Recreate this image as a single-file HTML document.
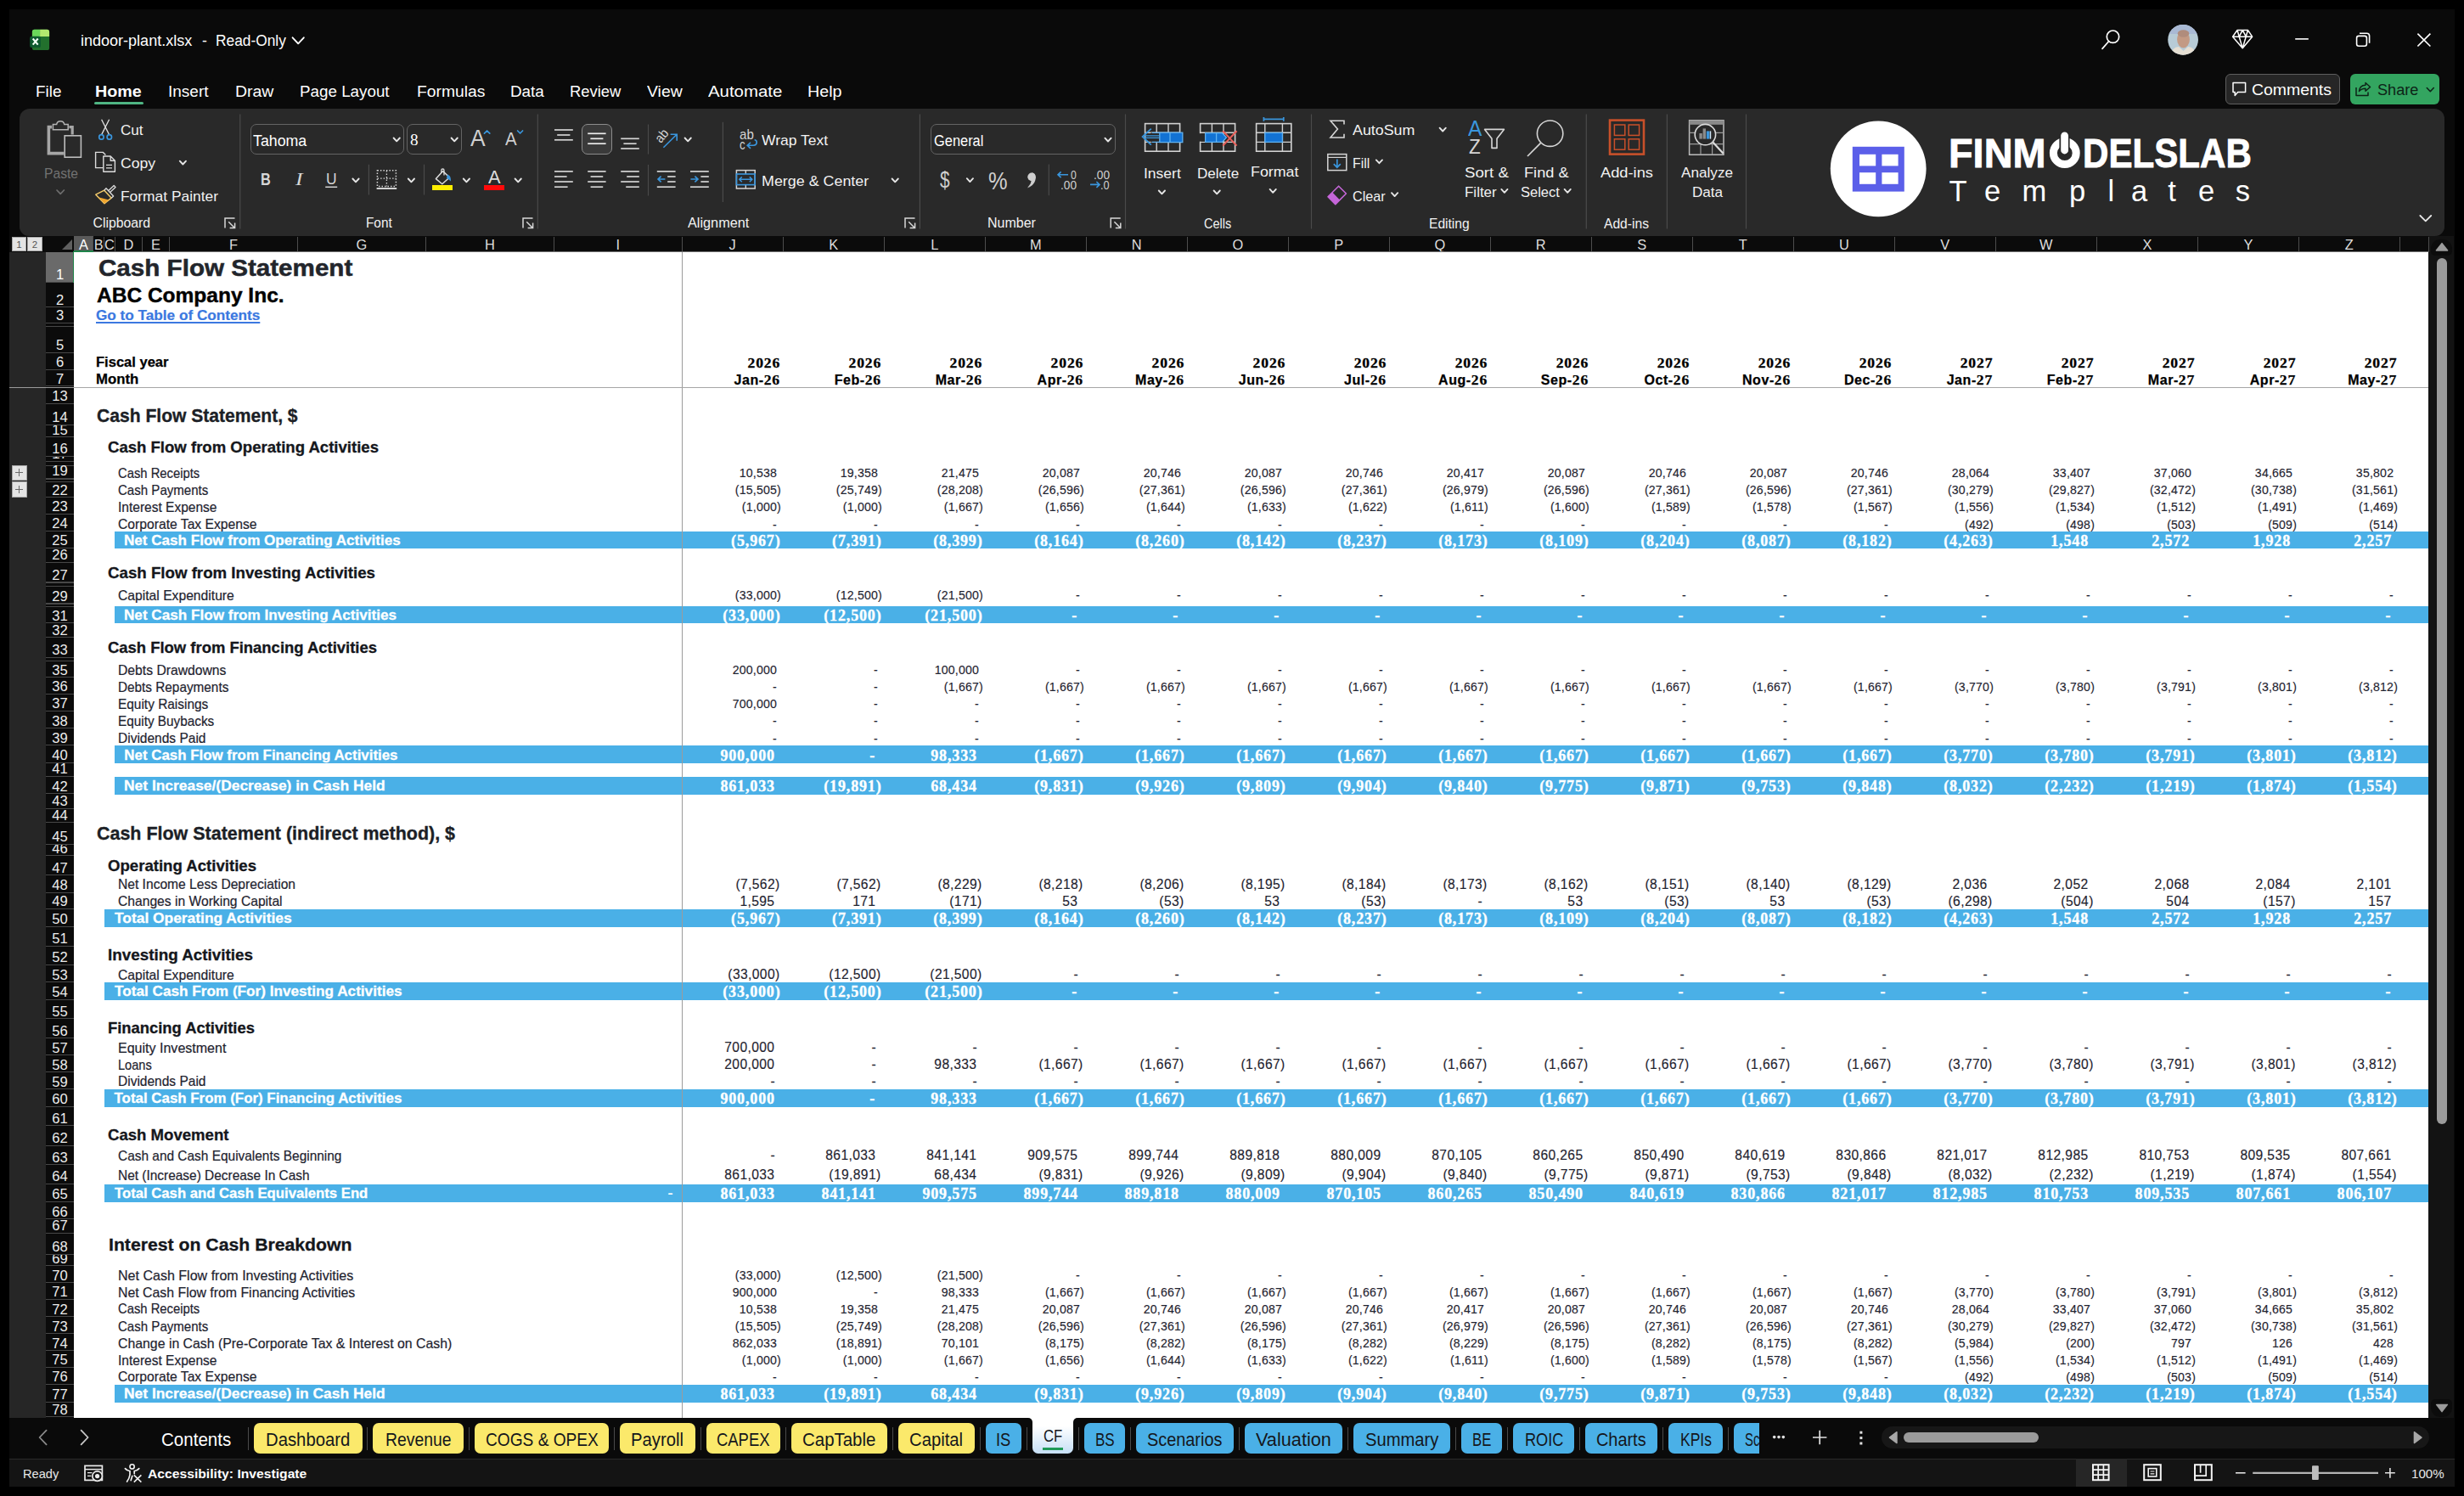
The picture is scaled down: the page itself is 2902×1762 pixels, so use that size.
<!DOCTYPE html>
<html><head><meta charset="utf-8"><title>indoor-plant.xlsx - Excel</title>
<style>
html,body{margin:0;padding:0;background:#000;}
body{width:2902px;height:1762px;position:relative;overflow:hidden;font-family:"Liberation Sans",sans-serif;}
body div,body svg{position:absolute;}
.t{white-space:pre;}

</style></head><body>
<div style="left:11.00px;top:11.00px;width:2879.50px;height:1740.00px;background:#0a0a0a;"></div>
<div class="t" style="left:95.40px;top:37.30px;font-size:17.6px;line-height:22px;color:#fff;transform:scaleX(1.0241);transform-origin:0 50%;">indoor-plant.xlsx</div>
<div class="t" style="left:237.90px;top:37.30px;font-size:17.6px;line-height:22px;color:#fff;">-</div>
<div class="t" style="left:254.20px;top:37.30px;font-size:17.6px;line-height:22px;color:#fff;transform:scaleX(0.9856);transform-origin:0 50%;">Read-Only</div>
<div class="t" style="left:41.80px;top:96.09px;font-size:18.8px;line-height:24px;color:#fff;transform:scaleX(1.0044);transform-origin:0 50%;">File</div>
<div class="t" style="left:111.60px;top:96.09px;font-size:18.8px;line-height:24px;color:#fff;font-weight:700;transform:scaleX(1.0501);transform-origin:0 50%;">Home</div>
<div class="t" style="left:198.00px;top:96.09px;font-size:18.8px;line-height:24px;color:#fff;transform:scaleX(1.0110);transform-origin:0 50%;">Insert</div>
<div class="t" style="left:277.20px;top:96.09px;font-size:18.8px;line-height:24px;color:#fff;transform:scaleX(1.0359);transform-origin:0 50%;">Draw</div>
<div class="t" style="left:353.10px;top:96.09px;font-size:18.8px;line-height:24px;color:#fff;">Page Layout</div>
<div class="t" style="left:491.00px;top:96.09px;font-size:18.8px;line-height:24px;color:#fff;transform:scaleX(1.0271);transform-origin:0 50%;">Formulas</div>
<div class="t" style="left:600.60px;top:96.09px;font-size:18.8px;line-height:24px;color:#fff;transform:scaleX(1.0032);transform-origin:0 50%;">Data</div>
<div class="t" style="left:670.90px;top:96.09px;font-size:18.8px;line-height:24px;color:#fff;transform:scaleX(0.9806);transform-origin:0 50%;">Review</div>
<div class="t" style="left:761.80px;top:96.09px;font-size:18.8px;line-height:24px;color:#fff;transform:scaleX(1.0353);transform-origin:0 50%;">View</div>
<div class="t" style="left:834.00px;top:96.09px;font-size:18.8px;line-height:24px;color:#fff;transform:scaleX(1.0859);transform-origin:0 50%;">Automate</div>
<div class="t" style="left:950.90px;top:96.09px;font-size:18.8px;line-height:24px;color:#fff;transform:scaleX(1.0507);transform-origin:0 50%;">Help</div>
<div style="left:111.20px;top:120.20px;width:57.80px;height:3.00px;background:#4fb583;border-radius:1.5px;"></div>
<div style="left:2621.10px;top:87.30px;width:134.60px;height:35.70px;background:#262626;border:1px solid #5e5e5e;border-radius:6px;box-sizing:border-box;"></div>
<div class="t" style="left:2652.30px;top:94.05px;font-size:19.2px;line-height:24px;color:#fff;transform:scaleX(1.0133);transform-origin:0 50%;">Comments</div>
<div style="left:2767.90px;top:87.30px;width:105.30px;height:35.70px;background:#33a560;border-radius:6px;"></div>
<div class="t" style="left:2799.50px;top:94.05px;font-size:19.2px;line-height:24px;color:#0d2417;transform:scaleX(0.9453);transform-origin:0 50%;">Share</div>
<div style="left:23.00px;top:128.00px;width:2856.00px;height:149.60px;background:#292929;border-radius:12px 12px 11px 11px;"></div>
<div class="t" style="left:51.90px;top:193.81px;font-size:17px;line-height:21px;color:#727272;transform:scaleX(0.9199);transform-origin:0 50%;">Paste</div>
<div class="t" style="left:142.40px;top:143.15px;font-size:16.6px;line-height:21px;color:#f2f2f2;transform:scaleX(1.0299);transform-origin:0 50%;">Cut</div>
<div class="t" style="left:142.40px;top:182.35px;font-size:16.6px;line-height:21px;color:#f2f2f2;transform:scaleX(1.0632);transform-origin:0 50%;">Copy</div>
<div class="t" style="left:142.40px;top:221.15px;font-size:16.6px;line-height:21px;color:#f2f2f2;transform:scaleX(1.0478);transform-origin:0 50%;">Format Painter</div>
<div class="t" style="left:109.50px;top:252.63px;font-size:15.8px;line-height:20px;color:#f2f2f2;">Clipboard</div>
<div style="left:295.00px;top:146.20px;width:180.80px;height:35.50px;background:#292929;border:1px solid #646464;border-radius:7px;box-sizing:border-box;"></div>
<div style="left:479.40px;top:146.20px;width:64.30px;height:35.50px;background:#292929;border:1px solid #646464;border-radius:7px;box-sizing:border-box;"></div>
<div class="t" style="left:298.40px;top:154.50px;font-size:17.6px;line-height:22px;color:#fff;transform:scaleX(1.0097);transform-origin:0 50%;">Tahoma</div>
<div class="t" style="left:482.80px;top:153.02px;font-size:19.5px;line-height:24px;color:#fff;font-family:'Liberation Serif';transform:scaleX(0.9846);transform-origin:0 50%;">8</div>
<div class="t" style="left:553.60px;top:145.87px;font-size:27.5px;line-height:34px;color:#d0d0d0;transform:scaleX(0.9595);transform-origin:0 50%;">A</div>
<div class="t" style="left:595.40px;top:151.45px;font-size:21.5px;line-height:27px;color:#d0d0d0;transform:scaleX(0.9481);transform-origin:0 50%;">A</div>
<div class="t" style="left:307.40px;top:199.21px;font-size:19.6px;line-height:24px;color:#d6d6d6;font-weight:700;transform:scaleX(0.8336);transform-origin:0 50%;">B</div>
<div class="t" style="left:347.60px;top:198.68px;font-size:20.2px;line-height:25px;color:#d6d6d6;font-family:'Liberation Serif';font-style:italic;transform:scaleX(1.2770);transform-origin:0 50%;">I</div>
<div class="t" style="left:384.00px;top:199.26px;font-size:18.6px;line-height:23px;color:#d6d6d6;transform:scaleX(0.9377);transform-origin:0 50%;">U</div>
<div style="left:509.00px;top:218.10px;width:24.20px;height:6.00px;background:#ffee00;"></div>
<div class="t" style="left:574.60px;top:196.25px;font-size:21.5px;line-height:27px;color:#dcdcdc;transform:scaleX(1.0179);transform-origin:0 50%;">A</div>
<div style="left:570.00px;top:218.10px;width:24.20px;height:6.00px;background:#ff0a0a;"></div>
<div class="t" style="left:430.50px;top:252.63px;font-size:15.8px;line-height:20px;color:#f2f2f2;transform:scaleX(0.9712);transform-origin:0 50%;">Font</div>
<div style="left:685.40px;top:146.10px;width:35.50px;height:35.50px;background:#3a3a3a;border:1px solid #8c8c8c;border-radius:7px;box-sizing:border-box;"></div>
<div class="t" style="left:870.80px;top:148.19px;font-size:16.2px;line-height:20px;color:#d4d4d4;transform:scaleX(0.9325);transform-origin:0 50%;">ab</div>
<div class="t" style="left:871.00px;top:159.59px;font-size:16.2px;line-height:20px;color:#d4d4d4;transform:scaleX(0.8154);transform-origin:0 50%;">c</div>
<div class="t" style="left:897.30px;top:155.15px;font-size:16.6px;line-height:21px;color:#f2f2f2;transform:scaleX(1.0527);transform-origin:0 50%;">Wrap Text</div>
<div class="t" style="left:897.30px;top:202.75px;font-size:16.6px;line-height:21px;color:#f2f2f2;transform:scaleX(1.0773);transform-origin:0 50%;">Merge &amp; Center</div>
<div class="t" style="left:810.10px;top:252.63px;font-size:15.8px;line-height:20px;color:#f2f2f2;transform:scaleX(1.0292);transform-origin:0 50%;">Alignment</div>
<div style="left:1096.20px;top:146.00px;width:217.60px;height:35.90px;background:#292929;border:1px solid #646464;border-radius:7px;box-sizing:border-box;"></div>
<div class="t" style="left:1099.60px;top:154.50px;font-size:17.6px;line-height:22px;color:#fff;transform:scaleX(0.9330);transform-origin:0 50%;">General</div>
<div class="t" style="left:1107.40px;top:192.92px;font-size:28.5px;line-height:36px;color:#cfcfcf;transform:scaleX(0.7314);transform-origin:0 50%;">$</div>
<div class="t" style="left:1163.80px;top:193.68px;font-size:29.5px;line-height:37px;color:#cfcfcf;transform:scaleX(0.8615);transform-origin:0 50%;">%</div>
<div class="t" style="left:1261.00px;top:196.13px;font-size:15.5px;line-height:19px;color:#cfcfcf;transform:scaleX(0.7884);transform-origin:0 50%;">0</div>
<div class="t" style="left:1248.80px;top:207.83px;font-size:15.5px;line-height:19px;color:#cfcfcf;transform:scaleX(0.8812);transform-origin:0 50%;">.00</div>
<div class="t" style="left:1287.60px;top:196.13px;font-size:15.5px;line-height:19px;color:#cfcfcf;transform:scaleX(0.8812);transform-origin:0 50%;">.00</div>
<div class="t" style="left:1296.20px;top:207.83px;font-size:15.5px;line-height:19px;color:#cfcfcf;transform:scaleX(0.8193);transform-origin:0 50%;">.0</div>
<div class="t" style="left:1163.40px;top:252.63px;font-size:15.8px;line-height:20px;color:#f2f2f2;transform:scaleX(1.0127);transform-origin:0 50%;">Number</div>
<div class="t" style="left:1347.30px;top:194.48px;font-size:16.8px;line-height:21px;color:#f2f2f2;transform:scaleX(1.0432);transform-origin:0 50%;">Insert</div>
<div class="t" style="left:1409.60px;top:194.48px;font-size:16.8px;line-height:21px;color:#f2f2f2;transform:scaleX(1.0162);transform-origin:0 50%;">Delete</div>
<div class="t" style="left:1472.60px;top:192.08px;font-size:16.8px;line-height:21px;color:#f2f2f2;transform:scaleX(1.0629);transform-origin:0 50%;">Format</div>
<div class="t" style="left:1418.00px;top:253.93px;font-size:15.8px;line-height:20px;color:#f2f2f2;transform:scaleX(0.9167);transform-origin:0 50%;">Cells</div>
<div class="t" style="left:1593.30px;top:143.35px;font-size:16.6px;line-height:21px;color:#f2f2f2;transform:scaleX(1.0752);transform-origin:0 50%;">AutoSum</div>
<div class="t" style="left:1593.30px;top:181.75px;font-size:16.6px;line-height:21px;color:#f2f2f2;transform:scaleX(0.9527);transform-origin:0 50%;">Fill</div>
<div class="t" style="left:1593.30px;top:221.15px;font-size:16.6px;line-height:21px;color:#f2f2f2;transform:scaleX(0.9759);transform-origin:0 50%;">Clear</div>
<div class="t" style="left:1729.20px;top:136.04px;font-size:25px;line-height:31px;color:#3a96dd;transform:scaleX(0.9828);transform-origin:0 50%;">A</div>
<div class="t" style="left:1730.20px;top:158.08px;font-size:24px;line-height:30px;color:#d6d6d6;transform:scaleX(0.9406);transform-origin:0 50%;">Z</div>
<div class="t" style="left:1725.20px;top:192.68px;font-size:16.8px;line-height:21px;color:#f2f2f2;transform:scaleX(1.1128);transform-origin:0 50%;">Sort &amp;</div>
<div class="t" style="left:1724.70px;top:216.28px;font-size:16.8px;line-height:21px;color:#f2f2f2;transform:scaleX(1.0108);transform-origin:0 50%;">Filter</div>
<div class="t" style="left:1795.30px;top:192.68px;font-size:16.8px;line-height:21px;color:#f2f2f2;transform:scaleX(1.0842);transform-origin:0 50%;">Find &amp;</div>
<div class="t" style="left:1790.50px;top:216.28px;font-size:16.8px;line-height:21px;color:#f2f2f2;transform:scaleX(0.9820);transform-origin:0 50%;">Select</div>
<div class="t" style="left:1682.50px;top:253.63px;font-size:15.8px;line-height:20px;color:#f2f2f2;transform:scaleX(0.9873);transform-origin:0 50%;">Editing</div>
<div class="t" style="left:1885.20px;top:192.68px;font-size:16.8px;line-height:21px;color:#f2f2f2;transform:scaleX(1.0895);transform-origin:0 50%;">Add-ins</div>
<div class="t" style="left:1888.50px;top:253.63px;font-size:15.8px;line-height:20px;color:#f2f2f2;transform:scaleX(0.9895);transform-origin:0 50%;">Add-ins</div>
<div class="t" style="left:1980.10px;top:192.68px;font-size:16.8px;line-height:21px;color:#f2f2f2;transform:scaleX(1.0234);transform-origin:0 50%;">Analyze</div>
<div class="t" style="left:1992.60px;top:216.28px;font-size:16.8px;line-height:21px;color:#f2f2f2;transform:scaleX(1.0182);transform-origin:0 50%;">Data</div>
<div class="t" style="left:2295.40px;top:150.23px;font-size:48.7px;line-height:61px;color:#fff;font-weight:700;transform:scaleX(0.9622);transform-origin:0 50%;-webkit-text-stroke:0.9px #fff;">FINM</div>
<div class="t" style="left:2453.00px;top:150.23px;font-size:48.7px;line-height:61px;color:#fff;font-weight:700;transform:scaleX(0.8646);transform-origin:0 50%;-webkit-text-stroke:0.9px #fff;">DELSLAB</div>
<div class="t" style="left:2295.40px;top:203.61px;font-size:34.6px;line-height:43px;color:#fff;">T</div>
<div class="t" style="left:2336.90px;top:203.61px;font-size:34.6px;line-height:43px;color:#fff;">e</div>
<div class="t" style="left:2381.40px;top:203.61px;font-size:34.6px;line-height:43px;color:#fff;">m</div>
<div class="t" style="left:2437.10px;top:203.61px;font-size:34.6px;line-height:43px;color:#fff;">p</div>
<div class="t" style="left:2482.50px;top:203.61px;font-size:34.6px;line-height:43px;color:#fff;">l</div>
<div class="t" style="left:2510.10px;top:203.61px;font-size:34.6px;line-height:43px;color:#fff;">a</div>
<div class="t" style="left:2553.20px;top:203.61px;font-size:34.6px;line-height:43px;color:#fff;">t</div>
<div class="t" style="left:2588.90px;top:203.61px;font-size:34.6px;line-height:43px;color:#fff;">e</div>
<div class="t" style="left:2632.70px;top:203.61px;font-size:34.6px;line-height:43px;color:#fff;">s</div>
<div style="left:2860.30px;top:278.00px;width:30.20px;height:1392.00px;background:#131313;"></div>
<div style="left:2863.40px;top:281.60px;width:24.60px;height:19.60px;background:#0c0c0c;border-radius:11px 11px 5px 5px;"></div>
<div style="left:2870.00px;top:304.00px;width:12.00px;height:1020.20px;background:#9b9b9b;border-radius:6px;"></div>
<svg style="left:0;top:0" width="2902" height="298" viewBox="0 0 2902 298"><rect x="37.9" y="34.8" width="20.2" height="24.2" rx="2.6" fill="#22702d"/><path d="M40.5 34.8 H47.1 V43.1 H37.9 V37.4 A2.6 2.6 0 0 1 40.5 34.8Z" fill="#6ad65a"/><path d="M47.1 34.8 H55.5 A2.6 2.6 0 0 1 58.1 37.4 V43.1 H47.1Z" fill="#b3e86f"/><rect x="35.2" y="42.7" width="12.8" height="13.4" rx="2.2" fill="#0e5a2f"/><path d="M38.7 45.5 L44.7 52.7 M44.7 45.5 L38.7 52.7" stroke="#f2fff6" stroke-width="2.1"/><path d="M344.6 44.3 L351.2 51.3 L357.8 44.3" fill="none" stroke="#fff" stroke-width="1.9" stroke-linecap="round" stroke-linejoin="round"/><circle cx="2488.5" cy="43.2" r="7.2" fill="none" stroke="#fff" stroke-width="1.7"/><path d="M2483.6 48.8 L2476 57.4" stroke="#fff" stroke-width="1.7" stroke-linecap="round"/><defs><clipPath id="av"><circle cx="2571.1" cy="46.8" r="17.9"/></clipPath></defs><g clip-path="url(#av)"><rect x="2553" y="28" width="37" height="38" fill="#b7cbd6"/><rect x="2553" y="28" width="37" height="12" fill="#a9b9d4"/><ellipse cx="2571.5" cy="46.5" rx="7.4" ry="10" fill="#c39a84"/><ellipse cx="2571.5" cy="39.5" rx="6.8" ry="4.2" fill="#b08c7c"/><path d="M2556 66 Q2558 55.5 2566 55 L2571.5 60 L2577 55 Q2585 55.5 2587 66Z" fill="#e6dfd3"/></g><path d="M2635 35.4 H2647.4 L2652.6 43.2 L2641.2 56.8 L2629.6 43.2Z M2629.6 43.2 H2652.6 M2635 35.4 L2637.2 43.2 L2641.2 56.8 L2645.2 43.2 L2647.4 35.4 M2641.2 35.4 L2637.2 43.2 M2641.2 35.4 L2645.2 43.2" fill="none" stroke="#fff" stroke-width="1.5" stroke-linejoin="round"/><path d="M2703.2 45.9 H2718.8" stroke="#fff" stroke-width="1.6"/><rect x="2775.6" y="42.4" width="11.8" height="11.8" rx="2.4" fill="none" stroke="#fff" stroke-width="1.6"/><path d="M2779 39.2 H2787.6 A3 3 0 0 1 2790.6 42.2 V50.8" fill="none" stroke="#fff" stroke-width="1.6"/><path d="M2847.4 39.7 L2862.4 54.5 M2862.4 39.7 L2847.4 54.5" stroke="#fff" stroke-width="1.7"/><path d="M2630 97.6 H2644.6 V108.6 H2635.6 L2632.2 112.4 V108.6 H2630Z" fill="none" stroke="#fff" stroke-width="1.5" stroke-linejoin="round"/><path d="M2775 103 V112.6 H2789 V108.4" fill="none" stroke="#0d2417" stroke-width="1.5" stroke-linejoin="round"/><path d="M2778.4 107.6 C2779 102 2782.4 100.2 2786 100.2 V97.4 L2791.6 102.4 L2786 107.2 V104.2 C2783 104.2 2780.4 105 2778.4 107.6Z" fill="none" stroke="#0d2417" stroke-width="1.4" stroke-linejoin="round"/><path d="M2858.3 103.5 L2862.3 107.7 L2866.3 103.5" fill="none" stroke="#0d2417" stroke-width="1.6" stroke-linecap="round" stroke-linejoin="round"/><path d="M282.8 134.5 V269.5" stroke="#4a4a4a" stroke-width="1.2"/><path d="M633.3 134.5 V269.5" stroke="#4a4a4a" stroke-width="1.2"/><path d="M1083.4 134.5 V269.5" stroke="#4a4a4a" stroke-width="1.2"/><path d="M1325.5 134.5 V269.5" stroke="#4a4a4a" stroke-width="1.2"/><path d="M1544.5 134.5 V269.5" stroke="#4a4a4a" stroke-width="1.2"/><path d="M1868.3 134.5 V269.5" stroke="#4a4a4a" stroke-width="1.2"/><path d="M1963.4 134.5 V269.5" stroke="#4a4a4a" stroke-width="1.2"/><path d="M2056.5 134.5 V269.5" stroke="#4a4a4a" stroke-width="1.2"/><path d="M434.4 193.7 V229.5" stroke="#4a4a4a" stroke-width="1.2"/><path d="M499.5 193.7 V229.5" stroke="#4a4a4a" stroke-width="1.2"/><path d="M763.5 146.5 V181.6" stroke="#4a4a4a" stroke-width="1.2"/><path d="M763.5 194 V230.5" stroke="#4a4a4a" stroke-width="1.2"/><path d="M851.4 143.7 V238" stroke="#4a4a4a" stroke-width="1.2"/><path d="M1235.3 193.6 V230.2" stroke="#4a4a4a" stroke-width="1.2"/><path d="M61 149.6 H57.4 V180.6 H75.4" fill="none" stroke="#a6a6a6" stroke-width="3.6"/><path d="M81.4 149.6 H85.2 V158.4" fill="none" stroke="#a6a6a6" stroke-width="3.2"/><path d="M62.4 152.8 V146.6 H66.6 A4.7 4.7 0 0 1 75.8 146.6 H80.2 V152.8Z" fill="none" stroke="#b4b4b4" stroke-width="1.5"/><rect x="76.2" y="159.8" width="19.2" height="25.4" fill="#292929" stroke="#bcbcbc" stroke-width="1.6"/><path d="M67.0 224.0 L71.2 228.4 L75.4 224.0" fill="none" stroke="#6e6e6e" stroke-width="1.7" stroke-linecap="round" stroke-linejoin="round"/><path d="M119.6 140.8 L128.6 158.6 M128.6 140.8 L119.6 158.6" stroke="#e0e0e0" stroke-width="1.3"/><circle cx="119.4" cy="161.4" r="2.7" fill="none" stroke="#3a96dd" stroke-width="1.7"/><circle cx="128.8" cy="161.4" r="2.7" fill="none" stroke="#3a96dd" stroke-width="1.7"/><path d="M121.6 197.6 H112.6 V179.4 H121.4 L124.4 182.4" fill="none" stroke="#dcdcdc" stroke-width="1.4"/><path d="M121.8 184 H130.2 L135.4 189.2 V202.2 H121.8Z M130.2 184 V189.2 H135.4" fill="none" stroke="#dcdcdc" stroke-width="1.4" stroke-linejoin="round"/><path d="M125 194.4 H132 M125 197.8 H132" stroke="#dcdcdc" stroke-width="1.3"/><path d="M211.8 189.7 L215.4 193.5 L219.0 189.7" fill="none" stroke="#e6e6e6" stroke-width="1.9" stroke-linecap="round" stroke-linejoin="round"/><path d="M112.8 229.2 L122.8 224.2 L131.2 233.2 L123 239.6Z" fill="none" stroke="#f2c96a" stroke-width="1.5" stroke-linejoin="round"/><path d="M115.8 232.2 L128.4 235.6 L123 239.6Z" fill="#f0a52e"/><path d="M122.8 224.2 L125 221.8 L133.6 231 L131.2 233.2" fill="none" stroke="#d8d8d8" stroke-width="1.4" stroke-linejoin="round"/><path d="M127.8 224.6 L134.2 218.6 L136 220.4 L129.6 226.6" fill="none" stroke="#d8d8d8" stroke-width="1.4" stroke-linejoin="round"/><path d="M265 268.5 L265 257 L276.5 257" fill="none" stroke="#d8d8d8" stroke-width="1.5"/><path d="M269.2 261.2 L276.2 268.2 M270.6 268.6 L276.6 268.6 L276.6 262.6" fill="none" stroke="#d8d8d8" stroke-width="1.5"/><path d="M463.6 162.5 L467.2 166.3 L470.8 162.5" fill="none" stroke="#e6e6e6" stroke-width="1.9" stroke-linecap="round" stroke-linejoin="round"/><path d="M531.6 162.5 L535.2 166.3 L538.8 162.5" fill="none" stroke="#e6e6e6" stroke-width="1.9" stroke-linecap="round" stroke-linejoin="round"/><path d="M570.4 157.2 L573.6 154 L576.8 157.2" fill="none" stroke="#3a96dd" stroke-width="1.7" stroke-linecap="round" stroke-linejoin="round"/><path d="M609.6 154 L612.6 157 L615.6 154" fill="none" stroke="#3a96dd" stroke-width="1.7" stroke-linecap="round" stroke-linejoin="round"/><path d="M383.2 220.3 H397.2" stroke="#d6d6d6" stroke-width="1.5"/><path d="M415.4 210.5 L419.0 214.3 L422.6 210.5" fill="none" stroke="#e6e6e6" stroke-width="1.9" stroke-linecap="round" stroke-linejoin="round"/><rect x="444.4" y="200.8" width="22" height="18.6" fill="none" stroke="#d6d6d6" stroke-width="1.5" stroke-dasharray="1.5 2"/><path d="M455.4 201 V219.4 M444.6 210.2 H466.4" stroke="#d6d6d6" stroke-width="1.3" stroke-dasharray="1.5 2"/><path d="M443.6 222 H467.2" stroke="#e6e6e6" stroke-width="1.8"/><path d="M480.8 210.5 L484.4 214.3 L488.0 210.5" fill="none" stroke="#e6e6e6" stroke-width="1.9" stroke-linecap="round" stroke-linejoin="round"/><path d="M513.4 210.6 L521.6 201.6 L529.4 209 L520.8 216.8Z" fill="none" stroke="#dcdcdc" stroke-width="1.5" stroke-linejoin="round"/><path d="M519.8 203.2 V200.6 A1.6 1.6 0 0 1 523 200.6 V206.4" fill="none" stroke="#dcdcdc" stroke-width="1.3"/><path d="M527 205.4 C530.2 206.4 531.4 209.8 530.8 213.6 C529 211.4 527.6 210.6 526 210Z" fill="#3a96dd"/><path d="M545.8 210.5 L549.4 214.3 L553.0 210.5" fill="none" stroke="#e6e6e6" stroke-width="1.9" stroke-linecap="round" stroke-linejoin="round"/><path d="M606.6 210.5 L610.2 214.3 L613.8 210.5" fill="none" stroke="#e6e6e6" stroke-width="1.9" stroke-linecap="round" stroke-linejoin="round"/><path d="M616 268.5 L616 257 L627.5 257" fill="none" stroke="#d8d8d8" stroke-width="1.5"/><path d="M620.2 261.2 L627.2 268.2 M621.6 268.6 L627.6 268.6 L627.6 262.6" fill="none" stroke="#d8d8d8" stroke-width="1.5"/><path d="M653.0 153.0 H674.8" stroke="#d4d4d4" stroke-width="1.7"/><path d="M656.2 159.0 H671.4" stroke="#d4d4d4" stroke-width="1.7"/><path d="M653.0 164.8 H674.8" stroke="#d4d4d4" stroke-width="1.7"/><path d="M692.2 157.3 H713.6" stroke="#ececec" stroke-width="1.7"/><path d="M695.4 163.3 H710.4" stroke="#ececec" stroke-width="1.7"/><path d="M692.2 169.2 H713.6" stroke="#ececec" stroke-width="1.7"/><path d="M731.2 163.3 H752.8" stroke="#d4d4d4" stroke-width="1.7"/><path d="M734.4 169.2 H749.6" stroke="#d4d4d4" stroke-width="1.7"/><path d="M731.2 175.0 H752.8" stroke="#d4d4d4" stroke-width="1.7"/><g transform="translate(778.2 169.2) rotate(-50)"><text x="0" y="0" font-family="Liberation Sans" font-size="15.5" fill="#d4d4d4" textLength="15.5" lengthAdjust="spacingAndGlyphs">ab</text></g><path d="M781.4 173.8 L796.6 158.8 M789.6 158.2 H797.2 V165.8" fill="none" stroke="#3a96dd" stroke-width="1.6"/><path d="M806.6 162.5 L810.2 166.3 L813.8 162.5" fill="none" stroke="#e6e6e6" stroke-width="1.9" stroke-linecap="round" stroke-linejoin="round"/><path d="M653.0 201.9 H674.8" stroke="#d4d4d4" stroke-width="1.7"/><path d="M653.0 208.0 H667.6" stroke="#d4d4d4" stroke-width="1.7"/><path d="M653.0 214.0 H674.8" stroke="#d4d4d4" stroke-width="1.7"/><path d="M653.0 220.2 H668.6" stroke="#d4d4d4" stroke-width="1.7"/><path d="M692.2 201.9 H713.6" stroke="#d4d4d4" stroke-width="1.7"/><path d="M695.6 208.0 H710.2" stroke="#d4d4d4" stroke-width="1.7"/><path d="M692.2 214.0 H713.6" stroke="#d4d4d4" stroke-width="1.7"/><path d="M695.6 220.2 H710.2" stroke="#d4d4d4" stroke-width="1.7"/><path d="M731.2 201.9 H752.8" stroke="#d4d4d4" stroke-width="1.7"/><path d="M738.2 208.0 H752.8" stroke="#d4d4d4" stroke-width="1.7"/><path d="M731.2 214.0 H752.8" stroke="#d4d4d4" stroke-width="1.7"/><path d="M737.2 220.2 H752.8" stroke="#d4d4d4" stroke-width="1.7"/><path d="M773.8 201.9 H795.6" stroke="#d4d4d4" stroke-width="1.7"/><path d="M786.2 208.0 H795.6" stroke="#d4d4d4" stroke-width="1.7"/><path d="M786.2 214.0 H795.6" stroke="#d4d4d4" stroke-width="1.7"/><path d="M773.8 220.2 H795.6" stroke="#d4d4d4" stroke-width="1.7"/><path d="M783.4 211 H775.2 M778.6 207.6 L775 211 L778.6 214.4" fill="none" stroke="#3a96dd" stroke-width="1.6"/><path d="M813.0 201.9 H834.8" stroke="#d4d4d4" stroke-width="1.7"/><path d="M825.4 208.0 H834.8" stroke="#d4d4d4" stroke-width="1.7"/><path d="M825.4 214.0 H834.8" stroke="#d4d4d4" stroke-width="1.7"/><path d="M813.0 220.2 H834.8" stroke="#d4d4d4" stroke-width="1.7"/><path d="M813.4 211 H821.8 M818.4 207.6 L822 211 L818.4 214.4" fill="none" stroke="#3a96dd" stroke-width="1.6"/><path d="M888.6 164.4 C892.4 165.4 892.2 171 887.4 171.2 H880.4 M884 167.8 L880.2 171.2 L884 174.8" fill="none" stroke="#3a96dd" stroke-width="1.6"/><rect x="867.4" y="200.6" width="21.8" height="21.4" fill="none" stroke="#d6d6d6" stroke-width="1.5"/><path d="M878.3 200.6 V205 M878.3 217.6 V222" stroke="#d6d6d6" stroke-width="1.4"/><rect x="867.4" y="205" width="21.8" height="12.6" fill="none" stroke="#3a96dd" stroke-width="1.6"/><path d="M871 211.3 H885.6 M873.8 208.4 L870.8 211.3 L873.8 214.2 M882.8 208.4 L885.8 211.3 L882.8 214.2" fill="none" stroke="#3a96dd" stroke-width="1.5"/><path d="M1050.6 210.5 L1054.2 214.3 L1057.8 210.5" fill="none" stroke="#e6e6e6" stroke-width="1.9" stroke-linecap="round" stroke-linejoin="round"/><path d="M1066 268.5 L1066 257 L1077.5 257" fill="none" stroke="#d8d8d8" stroke-width="1.5"/><path d="M1070.2 261.2 L1077.2 268.2 M1071.6 268.6 L1077.6 268.6 L1077.6 262.6" fill="none" stroke="#d8d8d8" stroke-width="1.5"/><path d="M1301.4 162.7 L1305.0 166.5 L1308.6 162.7" fill="none" stroke="#e6e6e6" stroke-width="1.9" stroke-linecap="round" stroke-linejoin="round"/><path d="M1138.8 210.2 L1142.4 214.1 L1146.0 210.2" fill="none" stroke="#e6e6e6" stroke-width="1.9" stroke-linecap="round" stroke-linejoin="round"/><path d="M1215 203.6 A4.6 4.6 0 1 1 1210.6 209.6 C1213.6 211 1216.4 209.6 1216.6 207.4 C1217.6 213.6 1214.6 218.6 1209.8 220.8 C1213.6 217.6 1214.8 214.4 1214.4 212.2" fill="#cfcfcf"/><circle cx="1215" cy="208.2" r="4.7" fill="#cfcfcf"/><path d="M1219.7 208.2 C1220.2 214 1216.2 219.4 1210 221.4 C1214 218.4 1215.4 215 1215.2 212.8Z" fill="#cfcfcf"/><path d="M1258 205.8 H1246 M1249.6 202.4 L1246 205.8 L1249.6 209.2" fill="none" stroke="#3a96dd" stroke-width="1.6"/><path d="M1284 217.4 H1295 M1291.4 214 L1295 217.4 L1291.4 220.8" fill="none" stroke="#3a96dd" stroke-width="1.6"/><path d="M1308.2 268.5 L1308.2 257 L1319.7 257" fill="none" stroke="#d8d8d8" stroke-width="1.5"/><path d="M1312.4 261.2 L1319.4 268.2 M1313.8 268.6 L1319.8 268.6 L1319.8 262.6" fill="none" stroke="#d8d8d8" stroke-width="1.5"/><rect x="1348.6" y="145.6" width="41.0" height="32.599999999999994" fill="none" stroke="#d2d2d2" stroke-width="1.6"/><path d="M1362.2 145.6 V178.2" stroke="#d2d2d2" stroke-width="1.4"/><path d="M1376 145.6 V178.2" stroke="#d2d2d2" stroke-width="1.4"/><path d="M1348.6 156.2 H1389.6" stroke="#d2d2d2" stroke-width="1.4"/><path d="M1348.6 167.4 H1389.6" stroke="#d2d2d2" stroke-width="1.4"/><rect x="1355.4" y="156.2" width="37.4" height="11.4" fill="#292929"/><rect x="1365.8" y="156.2" width="27" height="11.4" fill="#1272d3" stroke="#5fb2f2" stroke-width="1.3"/><path d="M1378 156.2 V167.6" stroke="#5fb2f2" stroke-width="1.3"/><path d="M1366 156.4 H1356.6 M1366 167.4 H1356.6" stroke="#5fb2f2" stroke-width="1.3"/><path d="M1355.8 151.6 L1345.6 161 L1355.8 170.6" fill="none" stroke="#3a96dd" stroke-width="1.8"/><path d="M1347.2 159.8 H1365 M1347.2 162.4 H1365" stroke="#3a96dd" stroke-width="1.2"/><path d="M1364.8 224.5 L1368.4 228.3 L1372.0 224.5" fill="none" stroke="#e6e6e6" stroke-width="1.9" stroke-linecap="round" stroke-linejoin="round"/><rect x="1413.6" y="145.6" width="41.0" height="32.599999999999994" fill="none" stroke="#d2d2d2" stroke-width="1.6"/><path d="M1427.4 145.6 V178.2" stroke="#d2d2d2" stroke-width="1.4"/><path d="M1441 145.6 V178.2" stroke="#d2d2d2" stroke-width="1.4"/><path d="M1413.6 156.2 H1454.6" stroke="#d2d2d2" stroke-width="1.4"/><path d="M1413.6 167.4 H1454.6" stroke="#d2d2d2" stroke-width="1.4"/><rect x="1412" y="157.2" width="8" height="9.4" fill="#292929"/><path d="M1419.6 156.6 H1439.6 L1444.4 162 L1439.6 167.4 H1419.6Z" fill="#1272d3" stroke="#5fb2f2" stroke-width="1.3"/><path d="M1432.6 156.6 V167.4" stroke="#5fb2f2" stroke-width="1.3"/><rect x="1442" y="155" width="15" height="15" fill="#292929" opacity="0.0"/><path d="M1440.2 154.2 L1456.6 171.6 M1456.6 154.2 L1440.2 171.6" stroke="#e8605a" stroke-width="2.1"/><path d="M1429.6 224.5 L1433.2 228.3 L1436.8 224.5" fill="none" stroke="#e6e6e6" stroke-width="1.9" stroke-linecap="round" stroke-linejoin="round"/><rect x="1479.6" y="145.6" width="41.200000000000045" height="32.599999999999994" fill="none" stroke="#d2d2d2" stroke-width="1.6"/><path d="M1489.8 145.6 V178.2" stroke="#d2d2d2" stroke-width="1.4"/><path d="M1510.4 145.6 V178.2" stroke="#d2d2d2" stroke-width="1.4"/><path d="M1479.6 156.2 H1520.8" stroke="#d2d2d2" stroke-width="1.4"/><path d="M1479.6 167.4 H1520.8" stroke="#d2d2d2" stroke-width="1.4"/><rect x="1489.8" y="156.4" width="20.6" height="11" fill="#1272d3" stroke="#5fb2f2" stroke-width="1.3"/><path d="M1488.4 140.4 H1511.8 M1488.4 138 V142.8 M1511.8 138 V142.8" stroke="#3a96dd" stroke-width="1.7"/><path d="M1495.6 222.9 L1499.2 226.8 L1502.8 222.9" fill="none" stroke="#e6e6e6" stroke-width="1.9" stroke-linecap="round" stroke-linejoin="round"/><path d="M1583 146.4 V142.2 H1567 L1575.4 152 L1567 162 H1583 V157.8" fill="none" stroke="#d6d6d6" stroke-width="1.6" stroke-linejoin="miter"/><path d="M1695.6 150.7 L1699.2 154.5 L1702.8 150.7" fill="none" stroke="#e6e6e6" stroke-width="1.9" stroke-linecap="round" stroke-linejoin="round"/><rect x="1563.8" y="181.6" width="22" height="19" fill="none" stroke="#d6d6d6" stroke-width="1.5"/><path d="M1563.8 185.4 H1585.8" stroke="#d6d6d6" stroke-width="1.2"/><path d="M1574.8 187.6 V197 M1570.8 193.2 L1574.8 197.2 L1578.8 193.2" fill="none" stroke="#3a96dd" stroke-width="1.7"/><path d="M1620.8 188.4 L1624.4 192.2 L1628.0 188.4" fill="none" stroke="#e6e6e6" stroke-width="1.9" stroke-linecap="round" stroke-linejoin="round"/><path d="M1564 231.8 L1576.6 219.2 L1585.4 228 L1572.8 240.6Z" fill="none" stroke="#c566d8" stroke-width="1.6" stroke-linejoin="round"/><path d="M1564 231.8 L1569.2 226.6 L1578 235.4 L1572.8 240.6Z" fill="#c566d8"/><path d="M1639.0 227.2 L1642.6 231.1 L1646.2 227.2" fill="none" stroke="#e6e6e6" stroke-width="1.9" stroke-linecap="round" stroke-linejoin="round"/><path d="M1748.6 152.4 H1771.4 L1763 163.2 V174.4 H1757 V163.2Z" fill="none" stroke="#d6d6d6" stroke-width="1.6" stroke-linejoin="round"/><path d="M1768.3 222.9 L1771.9 226.8 L1775.5 222.9" fill="none" stroke="#e6e6e6" stroke-width="1.9" stroke-linecap="round" stroke-linejoin="round"/><circle cx="1825.6" cy="157.2" r="15.2" fill="none" stroke="#d6d6d6" stroke-width="1.6"/><path d="M1814.6 168.4 L1799 184" stroke="#d6d6d6" stroke-width="1.7"/><path d="M1842.6 222.9 L1846.2 226.8 L1849.8 222.9" fill="none" stroke="#e6e6e6" stroke-width="1.9" stroke-linecap="round" stroke-linejoin="round"/><rect x="1896" y="141.6" width="40" height="40" fill="none" stroke="#c8502a" stroke-width="2.6"/><rect x="1901.4" y="147" width="12.4" height="12.4" fill="none" stroke="#c8502a" stroke-width="1.5"/><rect x="1901.4" y="163.8" width="12.4" height="12.4" fill="none" stroke="#c8502a" stroke-width="1.5"/><rect x="1918.2" y="147" width="12.4" height="12.4" fill="none" stroke="#c8502a" stroke-width="1.5"/><rect x="1918.2" y="163.8" width="12.4" height="12.4" fill="none" stroke="#c8502a" stroke-width="1.5"/><rect x="1989.6" y="141.8" width="40.4" height="40.4" fill="none" stroke="#bdbdbd" stroke-width="1.5"/><rect x="1989.6" y="141.8" width="40.4" height="5" fill="#8a8a8a"/><path d="M1989.6 156.4 H2030 M1989.6 169.6 H2030 M2003 169.6 V182 M2016.6 169.6 V182" stroke="#9a9a9a" stroke-width="1.2"/><circle cx="2008.4" cy="158.6" r="12.2" fill="#292929" stroke="#dcdcdc" stroke-width="1.6"/><rect x="2001.4" y="157" width="3.4" height="6.6" fill="#8a8a8a"/><rect x="2005.6" y="151.4" width="3.4" height="12.2" fill="#8a8a8a"/><rect x="2009.8" y="154.4" width="3.6" height="9.2" fill="#3a96dd"/><rect x="2013.8" y="154.4" width="1.4" height="9.2" fill="#cfe6f7"/><path d="M2017.4 167.6 L2029.6 180.8" stroke="#dcdcdc" stroke-width="2.2"/><circle cx="2212.2" cy="198.8" r="56.4" fill="#fff"/><rect x="2181.8" y="172.8" width="61" height="52.8" fill="#5b5fe9"/><rect x="2190" y="181.8" width="19.2" height="13.6" fill="#fff"/><rect x="2190" y="203.2" width="19.2" height="13.6" fill="#fff"/><rect x="2216.4" y="181.8" width="19.2" height="13.6" fill="#fff"/><rect x="2216.4" y="203.2" width="19.2" height="13.6" fill="#fff"/><circle cx="2431.8" cy="180.2" r="13.4" fill="none" stroke="#fff" stroke-width="9"/><rect x="2425.4" y="153.9" width="12.2" height="29" rx="6" fill="#292929"/><rect x="2427.2" y="155.4" width="8.8" height="26" rx="4.4" fill="#fff"/><path d="M2850.4 254.0 L2856.8 260.4 L2863.2 254.0" fill="none" stroke="#e6e6e6" stroke-width="1.8" stroke-linecap="round" stroke-linejoin="round"/><path d="M2869.4 295 L2876 286.6 L2882.6 295Z" fill="#9b9b9b" stroke="#9b9b9b" stroke-width="1.5" stroke-linejoin="round"/></svg>
<div style="left:11.00px;top:278.00px;width:2849.30px;height:19.20px;background:#0b0b0b;"></div>
<div style="left:11.00px;top:297.00px;width:42.80px;height:1373.00px;background:#262626;"></div>
<div style="left:53.80px;top:297.00px;width:33.20px;height:1373.00px;background:#0b0b0b;"></div>
<div style="left:13.60px;top:279.00px;width:17.60px;height:17.00px;background:#e4e4e4;border:1px solid #a8a8a8;box-sizing:border-box;"></div>
<div class="t" style="left:19.20px;top:281.22px;font-size:11.5px;line-height:14px;color:#555;">1</div>
<div style="left:32.20px;top:279.00px;width:17.60px;height:17.00px;background:#e4e4e4;border:1px solid #a8a8a8;box-sizing:border-box;"></div>
<div class="t" style="left:37.80px;top:281.22px;font-size:11.5px;line-height:14px;color:#555;">2</div>
<svg style="left:70px;top:280px" width="17" height="16" viewBox="0 0 17 16"><path d="M15 2 L15 14 L3 14 Z" fill="#5f5f5f"/></svg>
<div style="left:87.00px;top:278.00px;width:23.00px;height:19.20px;background:#5a5a5a;"></div>
<div class="t" style="left:93.03px;top:277.72px;font-size:16.4px;line-height:20px;color:#fff;">A</div>
<div class="t" style="left:110.83px;top:277.72px;font-size:16.4px;line-height:20px;color:#dedede;">B</div>
<div class="t" style="left:123.08px;top:277.72px;font-size:16.4px;line-height:20px;color:#dedede;">C</div>
<div class="t" style="left:145.53px;top:277.72px;font-size:16.4px;line-height:20px;color:#dedede;">D</div>
<div class="t" style="left:177.98px;top:277.72px;font-size:16.4px;line-height:20px;color:#dedede;">E</div>
<div class="t" style="left:269.89px;top:277.72px;font-size:16.4px;line-height:20px;color:#dedede;">F</div>
<div class="t" style="left:419.52px;top:277.72px;font-size:16.4px;line-height:20px;color:#dedede;">G</div>
<div class="t" style="left:570.93px;top:277.72px;font-size:16.4px;line-height:20px;color:#dedede;">H</div>
<div class="t" style="left:725.47px;top:277.72px;font-size:16.4px;line-height:20px;color:#dedede;">I</div>
<div class="t" style="left:858.60px;top:277.72px;font-size:16.4px;line-height:20px;color:#dedede;">J</div>
<div class="t" style="left:976.25px;top:277.72px;font-size:16.4px;line-height:20px;color:#dedede;">K</div>
<div class="t" style="left:1096.16px;top:277.72px;font-size:16.4px;line-height:20px;color:#dedede;">L</div>
<div class="t" style="left:1212.91px;top:277.72px;font-size:16.4px;line-height:20px;color:#dedede;">M</div>
<div class="t" style="left:1332.82px;top:277.72px;font-size:16.4px;line-height:20px;color:#dedede;">N</div>
<div class="t" style="left:1451.38px;top:277.72px;font-size:16.4px;line-height:20px;color:#dedede;">O</div>
<div class="t" style="left:1571.30px;top:277.72px;font-size:16.4px;line-height:20px;color:#dedede;">P</div>
<div class="t" style="left:1689.40px;top:277.72px;font-size:16.4px;line-height:20px;color:#dedede;">Q</div>
<div class="t" style="left:1808.86px;top:277.72px;font-size:16.4px;line-height:20px;color:#dedede;">R</div>
<div class="t" style="left:1928.33px;top:277.72px;font-size:16.4px;line-height:20px;color:#dedede;">S</div>
<div class="t" style="left:2047.80px;top:277.72px;font-size:16.4px;line-height:20px;color:#dedede;">T</div>
<div class="t" style="left:2165.89px;top:277.72px;font-size:16.4px;line-height:20px;color:#dedede;">U</div>
<div class="t" style="left:2285.36px;top:277.72px;font-size:16.4px;line-height:20px;color:#dedede;">V</div>
<div class="t" style="left:2402.09px;top:277.72px;font-size:16.4px;line-height:20px;color:#dedede;">W</div>
<div class="t" style="left:2523.38px;top:277.72px;font-size:16.4px;line-height:20px;color:#dedede;">X</div>
<div class="t" style="left:2642.39px;top:277.72px;font-size:16.4px;line-height:20px;color:#dedede;">Y</div>
<div class="t" style="left:2761.86px;top:277.72px;font-size:16.4px;line-height:20px;color:#dedede;">Z</div>
<div style="left:109.40px;top:279.00px;width:1.10px;height:18.00px;background:#4d4d4d;"></div>
<div style="left:122.00px;top:279.00px;width:1.10px;height:18.00px;background:#4d4d4d;"></div>
<div style="left:134.80px;top:279.00px;width:1.10px;height:18.00px;background:#4d4d4d;"></div>
<div style="left:166.90px;top:279.00px;width:1.10px;height:18.00px;background:#4d4d4d;"></div>
<div style="left:198.80px;top:279.00px;width:1.10px;height:18.00px;background:#4d4d4d;"></div>
<div style="left:349.80px;top:279.00px;width:1.10px;height:18.00px;background:#4d4d4d;"></div>
<div style="left:500.80px;top:279.00px;width:1.10px;height:18.00px;background:#4d4d4d;"></div>
<div style="left:651.70px;top:279.00px;width:1.10px;height:18.00px;background:#4d4d4d;"></div>
<div style="left:802.60px;top:279.00px;width:1.10px;height:18.00px;background:#4d4d4d;"></div>
<div style="left:921.61px;top:279.00px;width:1.10px;height:18.00px;background:#4d4d4d;"></div>
<div style="left:1040.62px;top:279.00px;width:1.10px;height:18.00px;background:#4d4d4d;"></div>
<div style="left:1159.63px;top:279.00px;width:1.10px;height:18.00px;background:#4d4d4d;"></div>
<div style="left:1278.64px;top:279.00px;width:1.10px;height:18.00px;background:#4d4d4d;"></div>
<div style="left:1397.65px;top:279.00px;width:1.10px;height:18.00px;background:#4d4d4d;"></div>
<div style="left:1516.66px;top:279.00px;width:1.10px;height:18.00px;background:#4d4d4d;"></div>
<div style="left:1635.67px;top:279.00px;width:1.10px;height:18.00px;background:#4d4d4d;"></div>
<div style="left:1754.68px;top:279.00px;width:1.10px;height:18.00px;background:#4d4d4d;"></div>
<div style="left:1873.69px;top:279.00px;width:1.10px;height:18.00px;background:#4d4d4d;"></div>
<div style="left:1992.70px;top:279.00px;width:1.10px;height:18.00px;background:#4d4d4d;"></div>
<div style="left:2111.71px;top:279.00px;width:1.10px;height:18.00px;background:#4d4d4d;"></div>
<div style="left:2230.72px;top:279.00px;width:1.10px;height:18.00px;background:#4d4d4d;"></div>
<div style="left:2349.73px;top:279.00px;width:1.10px;height:18.00px;background:#4d4d4d;"></div>
<div style="left:2468.74px;top:279.00px;width:1.10px;height:18.00px;background:#4d4d4d;"></div>
<div style="left:2587.75px;top:279.00px;width:1.10px;height:18.00px;background:#4d4d4d;"></div>
<div style="left:2706.76px;top:279.00px;width:1.10px;height:18.00px;background:#4d4d4d;"></div>
<div style="left:2825.77px;top:279.00px;width:1.10px;height:18.00px;background:#4d4d4d;"></div>
<div style="left:2859.70px;top:279.00px;width:1.10px;height:18.00px;background:#4d4d4d;"></div>
<div style="left:87.00px;top:296.20px;width:2773.30px;height:1.00px;background:#6f6f6f;"></div>
<div style="left:87.00px;top:295.40px;width:23.00px;height:2.00px;background:#1e8449;"></div>
<div style="left:53.8px;top:297.00px;width:33.2px;height:36.00px;overflow:hidden;background:#6a6a6a;border-bottom:1px solid #474747;box-sizing:border-box"><div class="t" style="left:0;width:33.2px;text-align:center;bottom:-1.4px;font-size:16.6px;line-height:19px;letter-spacing:-0.2px;color:#fff">1</div></div>
<div style="left:53.8px;top:333.00px;width:33.2px;height:29.20px;overflow:hidden;background:transparent;border-bottom:1px solid #474747;box-sizing:border-box"><div class="t" style="left:0;width:33.2px;text-align:center;bottom:-1.4px;font-size:16.6px;line-height:19px;letter-spacing:-0.2px;color:#ececec">2</div></div>
<div style="left:53.8px;top:362.20px;width:33.2px;height:18.50px;overflow:hidden;background:transparent;border-bottom:1px solid #474747;box-sizing:border-box"><div class="t" style="left:0;width:33.2px;text-align:center;bottom:-1.4px;font-size:16.6px;line-height:19px;letter-spacing:-0.2px;color:#ececec">3</div></div>
<div style="left:53.80px;top:380.20px;width:33.20px;height:1.00px;background:#474747;"></div>
<div style="left:53.80px;top:383.50px;width:33.20px;height:1.00px;background:#474747;"></div>
<div style="left:53.8px;top:384.00px;width:33.2px;height:32.10px;overflow:hidden;background:transparent;border-bottom:1px solid #474747;box-sizing:border-box"><div class="t" style="left:0;width:33.2px;text-align:center;bottom:-1.4px;font-size:16.6px;line-height:19px;letter-spacing:-0.2px;color:#ececec">5</div></div>
<div style="left:53.8px;top:416.10px;width:33.2px;height:19.80px;overflow:hidden;background:transparent;border-bottom:1px solid #474747;box-sizing:border-box"><div class="t" style="left:0;width:33.2px;text-align:center;bottom:-1.4px;font-size:16.6px;line-height:19px;letter-spacing:-0.2px;color:#ececec">6</div></div>
<div style="left:53.8px;top:435.90px;width:33.2px;height:19.40px;overflow:hidden;background:transparent;border-bottom:1px solid #474747;box-sizing:border-box"><div class="t" style="left:0;width:33.2px;text-align:center;bottom:-1.4px;font-size:16.6px;line-height:19px;letter-spacing:-0.2px;color:#ececec">7</div></div>
<div style="left:53.8px;top:457.60px;width:33.2px;height:18.20px;overflow:hidden;background:transparent;border-bottom:1px solid #474747;box-sizing:border-box"><div class="t" style="left:0;width:33.2px;text-align:center;bottom:-1.4px;font-size:16.6px;line-height:19px;letter-spacing:-0.2px;color:#ececec">13</div></div>
<div style="left:53.8px;top:475.80px;width:33.2px;height:25.10px;overflow:hidden;background:transparent;border-bottom:1px solid #474747;box-sizing:border-box"><div class="t" style="left:0;width:33.2px;text-align:center;bottom:-1.4px;font-size:16.6px;line-height:19px;letter-spacing:-0.2px;color:#ececec">14</div></div>
<div style="left:53.8px;top:500.90px;width:33.2px;height:14.40px;overflow:hidden;background:transparent;border-bottom:1px solid #474747;box-sizing:border-box"><div class="t" style="left:0;width:33.2px;text-align:center;bottom:-1.4px;font-size:16.6px;line-height:19px;letter-spacing:-0.2px;color:#ececec">15</div></div>
<div style="left:53.8px;top:515.30px;width:33.2px;height:22.80px;overflow:hidden;background:transparent;border-bottom:1px solid #474747;box-sizing:border-box"><div class="t" style="left:0;width:33.2px;text-align:center;bottom:-1.4px;font-size:16.6px;line-height:19px;letter-spacing:-0.2px;color:#ececec">16</div></div>
<div style="left:53.8px;top:538.10px;width:33.2px;height:5.70px;overflow:hidden;background:transparent;border-bottom:1px solid #474747;box-sizing:border-box"><div class="t" style="left:0;width:33.2px;text-align:center;bottom:-1.4px;font-size:16.6px;line-height:19px;letter-spacing:-0.2px;color:#ececec">17</div></div>
<div style="left:53.80px;top:543.30px;width:33.20px;height:1.00px;background:#474747;"></div>
<div style="left:53.80px;top:547.50px;width:33.20px;height:1.00px;background:#474747;"></div>
<div style="left:53.8px;top:548.00px;width:33.2px;height:16.00px;overflow:hidden;background:transparent;border-bottom:1px solid #474747;box-sizing:border-box"><div class="t" style="left:0;width:33.2px;text-align:center;bottom:-1.4px;font-size:16.6px;line-height:19px;letter-spacing:-0.2px;color:#ececec">19</div></div>
<div style="left:53.80px;top:563.50px;width:33.20px;height:1.00px;background:#474747;"></div>
<div style="left:53.80px;top:567.20px;width:33.20px;height:1.00px;background:#474747;"></div>
<div style="left:53.8px;top:567.70px;width:33.2px;height:18.70px;overflow:hidden;background:transparent;border-bottom:1px solid #474747;box-sizing:border-box"><div class="t" style="left:0;width:33.2px;text-align:center;bottom:-1.4px;font-size:16.6px;line-height:19px;letter-spacing:-0.2px;color:#ececec">22</div></div>
<div style="left:53.8px;top:586.40px;width:33.2px;height:19.70px;overflow:hidden;background:transparent;border-bottom:1px solid #474747;box-sizing:border-box"><div class="t" style="left:0;width:33.2px;text-align:center;bottom:-1.4px;font-size:16.6px;line-height:19px;letter-spacing:-0.2px;color:#ececec">23</div></div>
<div style="left:53.8px;top:606.10px;width:33.2px;height:20.00px;overflow:hidden;background:transparent;border-bottom:1px solid #474747;box-sizing:border-box"><div class="t" style="left:0;width:33.2px;text-align:center;bottom:-1.4px;font-size:16.6px;line-height:19px;letter-spacing:-0.2px;color:#ececec">24</div></div>
<div style="left:53.8px;top:626.10px;width:33.2px;height:19.80px;overflow:hidden;background:transparent;border-bottom:1px solid #474747;box-sizing:border-box"><div class="t" style="left:0;width:33.2px;text-align:center;bottom:-1.4px;font-size:16.6px;line-height:19px;letter-spacing:-0.2px;color:#ececec">25</div></div>
<div style="left:53.8px;top:645.90px;width:33.2px;height:17.00px;overflow:hidden;background:transparent;border-bottom:1px solid #474747;box-sizing:border-box"><div class="t" style="left:0;width:33.2px;text-align:center;bottom:-1.4px;font-size:16.6px;line-height:19px;letter-spacing:-0.2px;color:#ececec">26</div></div>
<div style="left:53.8px;top:662.90px;width:33.2px;height:23.40px;overflow:hidden;background:transparent;border-bottom:1px solid #474747;box-sizing:border-box"><div class="t" style="left:0;width:33.2px;text-align:center;bottom:-1.4px;font-size:16.6px;line-height:19px;letter-spacing:-0.2px;color:#ececec">27</div></div>
<div style="left:53.80px;top:685.80px;width:33.20px;height:1.00px;background:#474747;"></div>
<div style="left:53.80px;top:690.00px;width:33.20px;height:1.00px;background:#474747;"></div>
<div style="left:53.8px;top:690.50px;width:33.2px;height:20.90px;overflow:hidden;background:transparent;border-bottom:1px solid #474747;box-sizing:border-box"><div class="t" style="left:0;width:33.2px;text-align:center;bottom:-1.4px;font-size:16.6px;line-height:19px;letter-spacing:-0.2px;color:#ececec">29</div></div>
<div style="left:53.80px;top:710.90px;width:33.20px;height:1.00px;background:#474747;"></div>
<div style="left:53.80px;top:713.90px;width:33.20px;height:1.00px;background:#474747;"></div>
<div style="left:53.8px;top:714.40px;width:33.2px;height:19.80px;overflow:hidden;background:transparent;border-bottom:1px solid #474747;box-sizing:border-box"><div class="t" style="left:0;width:33.2px;text-align:center;bottom:-1.4px;font-size:16.6px;line-height:19px;letter-spacing:-0.2px;color:#ececec">31</div></div>
<div style="left:53.8px;top:734.20px;width:33.2px;height:17.20px;overflow:hidden;background:transparent;border-bottom:1px solid #474747;box-sizing:border-box"><div class="t" style="left:0;width:33.2px;text-align:center;bottom:-1.4px;font-size:16.6px;line-height:19px;letter-spacing:-0.2px;color:#ececec">32</div></div>
<div style="left:53.8px;top:751.40px;width:33.2px;height:23.40px;overflow:hidden;background:transparent;border-bottom:1px solid #474747;box-sizing:border-box"><div class="t" style="left:0;width:33.2px;text-align:center;bottom:-1.4px;font-size:16.6px;line-height:19px;letter-spacing:-0.2px;color:#ececec">33</div></div>
<div style="left:53.80px;top:774.30px;width:33.20px;height:1.00px;background:#474747;"></div>
<div style="left:53.80px;top:778.00px;width:33.20px;height:1.00px;background:#474747;"></div>
<div style="left:53.8px;top:778.50px;width:33.2px;height:19.70px;overflow:hidden;background:transparent;border-bottom:1px solid #474747;box-sizing:border-box"><div class="t" style="left:0;width:33.2px;text-align:center;bottom:-1.4px;font-size:16.6px;line-height:19px;letter-spacing:-0.2px;color:#ececec">35</div></div>
<div style="left:53.8px;top:798.20px;width:33.2px;height:19.90px;overflow:hidden;background:transparent;border-bottom:1px solid #474747;box-sizing:border-box"><div class="t" style="left:0;width:33.2px;text-align:center;bottom:-1.4px;font-size:16.6px;line-height:19px;letter-spacing:-0.2px;color:#ececec">36</div></div>
<div style="left:53.8px;top:818.10px;width:33.2px;height:20.00px;overflow:hidden;background:transparent;border-bottom:1px solid #474747;box-sizing:border-box"><div class="t" style="left:0;width:33.2px;text-align:center;bottom:-1.4px;font-size:16.6px;line-height:19px;letter-spacing:-0.2px;color:#ececec">37</div></div>
<div style="left:53.8px;top:838.10px;width:33.2px;height:20.10px;overflow:hidden;background:transparent;border-bottom:1px solid #474747;box-sizing:border-box"><div class="t" style="left:0;width:33.2px;text-align:center;bottom:-1.4px;font-size:16.6px;line-height:19px;letter-spacing:-0.2px;color:#ececec">38</div></div>
<div style="left:53.8px;top:858.20px;width:33.2px;height:20.00px;overflow:hidden;background:transparent;border-bottom:1px solid #474747;box-sizing:border-box"><div class="t" style="left:0;width:33.2px;text-align:center;bottom:-1.4px;font-size:16.6px;line-height:19px;letter-spacing:-0.2px;color:#ececec">39</div></div>
<div style="left:53.8px;top:878.20px;width:33.2px;height:20.60px;overflow:hidden;background:transparent;border-bottom:1px solid #474747;box-sizing:border-box"><div class="t" style="left:0;width:33.2px;text-align:center;bottom:-1.4px;font-size:16.6px;line-height:19px;letter-spacing:-0.2px;color:#ececec">40</div></div>
<div style="left:53.8px;top:898.80px;width:33.2px;height:16.30px;overflow:hidden;background:transparent;border-bottom:1px solid #474747;box-sizing:border-box"><div class="t" style="left:0;width:33.2px;text-align:center;bottom:-1.4px;font-size:16.6px;line-height:19px;letter-spacing:-0.2px;color:#ececec">41</div></div>
<div style="left:53.8px;top:915.10px;width:33.2px;height:20.40px;overflow:hidden;background:transparent;border-bottom:1px solid #474747;box-sizing:border-box"><div class="t" style="left:0;width:33.2px;text-align:center;bottom:-1.4px;font-size:16.6px;line-height:19px;letter-spacing:-0.2px;color:#ececec">42</div></div>
<div style="left:53.8px;top:935.50px;width:33.2px;height:17.20px;overflow:hidden;background:transparent;border-bottom:1px solid #474747;box-sizing:border-box"><div class="t" style="left:0;width:33.2px;text-align:center;bottom:-1.4px;font-size:16.6px;line-height:19px;letter-spacing:-0.2px;color:#ececec">43</div></div>
<div style="left:53.8px;top:952.70px;width:33.2px;height:16.70px;overflow:hidden;background:transparent;border-bottom:1px solid #474747;box-sizing:border-box"><div class="t" style="left:0;width:33.2px;text-align:center;bottom:-1.4px;font-size:16.6px;line-height:19px;letter-spacing:-0.2px;color:#ececec">44</div></div>
<div style="left:53.8px;top:969.40px;width:33.2px;height:25.20px;overflow:hidden;background:transparent;border-bottom:1px solid #474747;box-sizing:border-box"><div class="t" style="left:0;width:33.2px;text-align:center;bottom:-1.4px;font-size:16.6px;line-height:19px;letter-spacing:-0.2px;color:#ececec">45</div></div>
<div style="left:53.8px;top:994.60px;width:33.2px;height:13.90px;overflow:hidden;background:transparent;border-bottom:1px solid #474747;box-sizing:border-box"><div class="t" style="left:0;width:33.2px;text-align:center;bottom:-1.4px;font-size:16.6px;line-height:19px;letter-spacing:-0.2px;color:#ececec">46</div></div>
<div style="left:53.8px;top:1008.50px;width:33.2px;height:22.80px;overflow:hidden;background:transparent;border-bottom:1px solid #474747;box-sizing:border-box"><div class="t" style="left:0;width:33.2px;text-align:center;bottom:-1.4px;font-size:16.6px;line-height:19px;letter-spacing:-0.2px;color:#ececec">47</div></div>
<div style="left:53.8px;top:1031.30px;width:33.2px;height:20.30px;overflow:hidden;background:transparent;border-bottom:1px solid #474747;box-sizing:border-box"><div class="t" style="left:0;width:33.2px;text-align:center;bottom:-1.4px;font-size:16.6px;line-height:19px;letter-spacing:-0.2px;color:#ececec">48</div></div>
<div style="left:53.8px;top:1051.60px;width:33.2px;height:19.50px;overflow:hidden;background:transparent;border-bottom:1px solid #474747;box-sizing:border-box"><div class="t" style="left:0;width:33.2px;text-align:center;bottom:-1.4px;font-size:16.6px;line-height:19px;letter-spacing:-0.2px;color:#ececec">49</div></div>
<div style="left:53.8px;top:1071.10px;width:33.2px;height:20.60px;overflow:hidden;background:transparent;border-bottom:1px solid #474747;box-sizing:border-box"><div class="t" style="left:0;width:33.2px;text-align:center;bottom:-1.4px;font-size:16.6px;line-height:19px;letter-spacing:-0.2px;color:#ececec">50</div></div>
<div style="left:53.8px;top:1091.70px;width:33.2px;height:22.90px;overflow:hidden;background:transparent;border-bottom:1px solid #474747;box-sizing:border-box"><div class="t" style="left:0;width:33.2px;text-align:center;bottom:-1.4px;font-size:16.6px;line-height:19px;letter-spacing:-0.2px;color:#ececec">51</div></div>
<div style="left:53.8px;top:1114.60px;width:33.2px;height:22.50px;overflow:hidden;background:transparent;border-bottom:1px solid #474747;box-sizing:border-box"><div class="t" style="left:0;width:33.2px;text-align:center;bottom:-1.4px;font-size:16.6px;line-height:19px;letter-spacing:-0.2px;color:#ececec">52</div></div>
<div style="left:53.8px;top:1137.10px;width:33.2px;height:20.10px;overflow:hidden;background:transparent;border-bottom:1px solid #474747;box-sizing:border-box"><div class="t" style="left:0;width:33.2px;text-align:center;bottom:-1.4px;font-size:16.6px;line-height:19px;letter-spacing:-0.2px;color:#ececec">53</div></div>
<div style="left:53.8px;top:1157.20px;width:33.2px;height:20.50px;overflow:hidden;background:transparent;border-bottom:1px solid #474747;box-sizing:border-box"><div class="t" style="left:0;width:33.2px;text-align:center;bottom:-1.4px;font-size:16.6px;line-height:19px;letter-spacing:-0.2px;color:#ececec">54</div></div>
<div style="left:53.8px;top:1177.70px;width:33.2px;height:22.80px;overflow:hidden;background:transparent;border-bottom:1px solid #474747;box-sizing:border-box"><div class="t" style="left:0;width:33.2px;text-align:center;bottom:-1.4px;font-size:16.6px;line-height:19px;letter-spacing:-0.2px;color:#ececec">55</div></div>
<div style="left:53.8px;top:1200.50px;width:33.2px;height:22.90px;overflow:hidden;background:transparent;border-bottom:1px solid #474747;box-sizing:border-box"><div class="t" style="left:0;width:33.2px;text-align:center;bottom:-1.4px;font-size:16.6px;line-height:19px;letter-spacing:-0.2px;color:#ececec">56</div></div>
<div style="left:53.8px;top:1223.40px;width:33.2px;height:20.10px;overflow:hidden;background:transparent;border-bottom:1px solid #474747;box-sizing:border-box"><div class="t" style="left:0;width:33.2px;text-align:center;bottom:-1.4px;font-size:16.6px;line-height:19px;letter-spacing:-0.2px;color:#ececec">57</div></div>
<div style="left:53.8px;top:1243.50px;width:33.2px;height:19.70px;overflow:hidden;background:transparent;border-bottom:1px solid #474747;box-sizing:border-box"><div class="t" style="left:0;width:33.2px;text-align:center;bottom:-1.4px;font-size:16.6px;line-height:19px;letter-spacing:-0.2px;color:#ececec">58</div></div>
<div style="left:53.8px;top:1263.20px;width:33.2px;height:20.00px;overflow:hidden;background:transparent;border-bottom:1px solid #474747;box-sizing:border-box"><div class="t" style="left:0;width:33.2px;text-align:center;bottom:-1.4px;font-size:16.6px;line-height:19px;letter-spacing:-0.2px;color:#ececec">59</div></div>
<div style="left:53.8px;top:1283.20px;width:33.2px;height:20.50px;overflow:hidden;background:transparent;border-bottom:1px solid #474747;box-sizing:border-box"><div class="t" style="left:0;width:33.2px;text-align:center;bottom:-1.4px;font-size:16.6px;line-height:19px;letter-spacing:-0.2px;color:#ececec">60</div></div>
<div style="left:53.8px;top:1303.70px;width:33.2px;height:22.50px;overflow:hidden;background:transparent;border-bottom:1px solid #474747;box-sizing:border-box"><div class="t" style="left:0;width:33.2px;text-align:center;bottom:-1.4px;font-size:16.6px;line-height:19px;letter-spacing:-0.2px;color:#ececec">61</div></div>
<div style="left:53.8px;top:1326.20px;width:33.2px;height:23.40px;overflow:hidden;background:transparent;border-bottom:1px solid #474747;box-sizing:border-box"><div class="t" style="left:0;width:33.2px;text-align:center;bottom:-1.4px;font-size:16.6px;line-height:19px;letter-spacing:-0.2px;color:#ececec">62</div></div>
<div style="left:53.8px;top:1349.60px;width:33.2px;height:22.90px;overflow:hidden;background:transparent;border-bottom:1px solid #474747;box-sizing:border-box"><div class="t" style="left:0;width:33.2px;text-align:center;bottom:-1.4px;font-size:16.6px;line-height:19px;letter-spacing:-0.2px;color:#ececec">63</div></div>
<div style="left:53.8px;top:1372.50px;width:33.2px;height:22.50px;overflow:hidden;background:transparent;border-bottom:1px solid #474747;box-sizing:border-box"><div class="t" style="left:0;width:33.2px;text-align:center;bottom:-1.4px;font-size:16.6px;line-height:19px;letter-spacing:-0.2px;color:#ececec">64</div></div>
<div style="left:53.8px;top:1395.00px;width:33.2px;height:20.70px;overflow:hidden;background:transparent;border-bottom:1px solid #474747;box-sizing:border-box"><div class="t" style="left:0;width:33.2px;text-align:center;bottom:-1.4px;font-size:16.6px;line-height:19px;letter-spacing:-0.2px;color:#ececec">65</div></div>
<div style="left:53.8px;top:1415.70px;width:33.2px;height:20.60px;overflow:hidden;background:transparent;border-bottom:1px solid #474747;box-sizing:border-box"><div class="t" style="left:0;width:33.2px;text-align:center;bottom:-1.4px;font-size:16.6px;line-height:19px;letter-spacing:-0.2px;color:#ececec">66</div></div>
<div style="left:53.8px;top:1436.30px;width:33.2px;height:16.80px;overflow:hidden;background:transparent;border-bottom:1px solid #474747;box-sizing:border-box"><div class="t" style="left:0;width:33.2px;text-align:center;bottom:-1.4px;font-size:16.6px;line-height:19px;letter-spacing:-0.2px;color:#ececec">67</div></div>
<div style="left:53.8px;top:1453.10px;width:33.2px;height:24.50px;overflow:hidden;background:transparent;border-bottom:1px solid #474747;box-sizing:border-box"><div class="t" style="left:0;width:33.2px;text-align:center;bottom:-1.4px;font-size:16.6px;line-height:19px;letter-spacing:-0.2px;color:#ececec">68</div></div>
<div style="left:53.8px;top:1477.60px;width:33.2px;height:13.70px;overflow:hidden;background:transparent;border-bottom:1px solid #474747;box-sizing:border-box"><div class="t" style="left:0;width:33.2px;text-align:center;bottom:-1.4px;font-size:16.6px;line-height:19px;letter-spacing:-0.2px;color:#ececec">69</div></div>
<div style="left:53.8px;top:1491.30px;width:33.2px;height:20.10px;overflow:hidden;background:transparent;border-bottom:1px solid #474747;box-sizing:border-box"><div class="t" style="left:0;width:33.2px;text-align:center;bottom:-1.4px;font-size:16.6px;line-height:19px;letter-spacing:-0.2px;color:#ececec">70</div></div>
<div style="left:53.8px;top:1511.40px;width:33.2px;height:19.70px;overflow:hidden;background:transparent;border-bottom:1px solid #474747;box-sizing:border-box"><div class="t" style="left:0;width:33.2px;text-align:center;bottom:-1.4px;font-size:16.6px;line-height:19px;letter-spacing:-0.2px;color:#ececec">71</div></div>
<div style="left:53.8px;top:1531.10px;width:33.2px;height:20.10px;overflow:hidden;background:transparent;border-bottom:1px solid #474747;box-sizing:border-box"><div class="t" style="left:0;width:33.2px;text-align:center;bottom:-1.4px;font-size:16.6px;line-height:19px;letter-spacing:-0.2px;color:#ececec">72</div></div>
<div style="left:53.8px;top:1551.20px;width:33.2px;height:20.00px;overflow:hidden;background:transparent;border-bottom:1px solid #474747;box-sizing:border-box"><div class="t" style="left:0;width:33.2px;text-align:center;bottom:-1.4px;font-size:16.6px;line-height:19px;letter-spacing:-0.2px;color:#ececec">73</div></div>
<div style="left:53.8px;top:1571.20px;width:33.2px;height:20.10px;overflow:hidden;background:transparent;border-bottom:1px solid #474747;box-sizing:border-box"><div class="t" style="left:0;width:33.2px;text-align:center;bottom:-1.4px;font-size:16.6px;line-height:19px;letter-spacing:-0.2px;color:#ececec">74</div></div>
<div style="left:53.8px;top:1591.30px;width:33.2px;height:19.70px;overflow:hidden;background:transparent;border-bottom:1px solid #474747;box-sizing:border-box"><div class="t" style="left:0;width:33.2px;text-align:center;bottom:-1.4px;font-size:16.6px;line-height:19px;letter-spacing:-0.2px;color:#ececec">75</div></div>
<div style="left:53.8px;top:1611.00px;width:33.2px;height:20.00px;overflow:hidden;background:transparent;border-bottom:1px solid #474747;box-sizing:border-box"><div class="t" style="left:0;width:33.2px;text-align:center;bottom:-1.4px;font-size:16.6px;line-height:19px;letter-spacing:-0.2px;color:#ececec">76</div></div>
<div style="left:53.8px;top:1631.00px;width:33.2px;height:20.70px;overflow:hidden;background:transparent;border-bottom:1px solid #474747;box-sizing:border-box"><div class="t" style="left:0;width:33.2px;text-align:center;bottom:-1.4px;font-size:16.6px;line-height:19px;letter-spacing:-0.2px;color:#ececec">77</div></div>
<div style="left:53.8px;top:1651.70px;width:33.2px;height:17.80px;overflow:hidden;background:transparent;border-bottom:1px solid #474747;box-sizing:border-box"><div class="t" style="left:0;width:33.2px;text-align:center;bottom:-1.4px;font-size:16.6px;line-height:19px;letter-spacing:-0.2px;color:#ececec">78</div></div>
<div style="left:86.00px;top:296.40px;width:2.00px;height:37.00px;background:#1e8449;"></div>
<div style="left:11.00px;top:455.90px;width:76.00px;height:1.30px;background:#9a9a9a;"></div>
<div style="left:13.60px;top:547.60px;width:18.00px;height:18.00px;background:#e4e4e4;border:1px solid #a8a8a8;box-sizing:border-box;"></div>
<div style="left:18.10px;top:555.70px;width:9.00px;height:1.80px;background:#6a6a6a;"></div>
<div style="left:21.70px;top:552.10px;width:1.80px;height:9.00px;background:#6a6a6a;"></div>
<div style="left:13.60px;top:567.40px;width:18.00px;height:18.40px;background:#e4e4e4;border:1px solid #a8a8a8;box-sizing:border-box;"></div>
<div style="left:18.10px;top:575.70px;width:9.00px;height:1.80px;background:#6a6a6a;"></div>
<div style="left:21.70px;top:572.10px;width:1.80px;height:9.00px;background:#6a6a6a;"></div>
<div style="left:87.00px;top:297.00px;width:2773.30px;height:1373.00px;background:#fff;"></div>
<div style="left:135.40px;top:626.10px;width:2724.90px;height:20.10px;background:#4ab0e7;"></div>
<div style="left:135.40px;top:714.40px;width:2724.90px;height:20.10px;background:#4ab0e7;"></div>
<div style="left:135.40px;top:878.20px;width:2724.90px;height:20.90px;background:#4ab0e7;"></div>
<div style="left:135.40px;top:915.10px;width:2724.90px;height:20.70px;background:#4ab0e7;"></div>
<div style="left:122.60px;top:1071.10px;width:2737.70px;height:20.90px;background:#4ab0e7;"></div>
<div style="left:122.60px;top:1157.20px;width:2737.70px;height:20.80px;background:#4ab0e7;"></div>
<div style="left:122.60px;top:1283.20px;width:2737.70px;height:20.80px;background:#4ab0e7;"></div>
<div style="left:122.60px;top:1395.00px;width:2737.70px;height:21.00px;background:#4ab0e7;"></div>
<div style="left:135.40px;top:1631.00px;width:2724.90px;height:21.00px;background:#4ab0e7;"></div>
<div style="left:802.80px;top:297.00px;width:1.20px;height:1373.00px;background:#9b9b9b;"></div>
<div style="left:87.00px;top:455.90px;width:2773.30px;height:1.30px;background:#a6a6a6;"></div>
<div class="t" style="left:115.60px;top:299.48px;font-size:27.2px;line-height:34px;color:#22252b;font-weight:700;transform:scaleX(1.0885);transform-origin:0 50%;-webkit-text-stroke:0.5px #22252b;">Cash Flow Statement</div>
<div class="t" style="left:114.10px;top:333.99px;font-size:23.4px;line-height:29px;color:#000;font-weight:700;transform:scaleX(1.0477);transform-origin:0 50%;-webkit-text-stroke:0.4px #000;">ABC Company Inc.</div>
<div class="t" style="left:113.40px;top:362.06px;font-size:15.7px;line-height:20px;color:#3b78e0;font-weight:700;transform:scaleX(1.0944);transform-origin:0 50%;text-decoration:underline;text-decoration-thickness:1.6px;text-underline-offset:2.2px;-webkit-text-stroke:0.2px #3b78e0;">Go to Table of Contents</div>
<div class="t" style="left:113.40px;top:416.96px;font-size:16.0px;line-height:20px;color:#000;font-weight:700;transform:scaleX(1.0334);transform-origin:0 50%;-webkit-text-stroke:0.25px #000;">Fiscal year</div>
<div class="t" style="left:113.40px;top:436.96px;font-size:16.0px;line-height:20px;color:#000;font-weight:700;transform:scaleX(1.0462);transform-origin:0 50%;-webkit-text-stroke:0.25px #000;">Month</div>
<div class="t" style="left:114.40px;top:475.52px;font-size:21.6px;line-height:27px;color:#1c1f26;font-weight:700;transform:scaleX(0.9761);transform-origin:0 50%;-webkit-text-stroke:0.35px #1c1f26;">Cash Flow Statement, $</div>
<div class="t" style="left:126.60px;top:515.59px;font-size:18.2px;line-height:23px;color:#15171c;font-weight:700;transform:scaleX(1.0204);transform-origin:0 50%;-webkit-text-stroke:0.3px #15171c;">Cash Flow from Operating Activities</div>
<div class="t" style="left:139.20px;top:546.72px;font-size:16.4px;line-height:20px;color:#1f2430;transform:scaleX(0.9025);transform-origin:0 50%;-webkit-text-stroke:0.22px #1f2430;">Cash Receipts</div>
<div class="t" style="left:139.20px;top:566.82px;font-size:16.4px;line-height:20px;color:#1f2430;transform:scaleX(0.9187);transform-origin:0 50%;-webkit-text-stroke:0.22px #1f2430;">Cash Payments</div>
<div class="t" style="left:139.20px;top:587.02px;font-size:16.4px;line-height:20px;color:#1f2430;transform:scaleX(0.9470);transform-origin:0 50%;-webkit-text-stroke:0.22px #1f2430;">Interest Expense</div>
<div class="t" style="left:139.20px;top:607.12px;font-size:16.4px;line-height:20px;color:#1f2430;transform:scaleX(0.9567);transform-origin:0 50%;-webkit-text-stroke:0.22px #1f2430;">Corporate Tax Expense</div>
<div class="t" style="left:146.30px;top:626.04px;font-size:16.9px;line-height:21px;color:#fff;font-weight:700;transform:scaleX(1.0108);transform-origin:0 50%;-webkit-text-stroke:0.3px #fff;">Net Cash Flow from Operating Activities</div>
<div class="t" style="left:126.60px;top:663.79px;font-size:18.2px;line-height:23px;color:#15171c;font-weight:700;transform:scaleX(1.0275);transform-origin:0 50%;-webkit-text-stroke:0.3px #15171c;">Cash Flow from Investing Activities</div>
<div class="t" style="left:139.20px;top:690.62px;font-size:16.4px;line-height:20px;color:#1f2430;transform:scaleX(0.9562);transform-origin:0 50%;-webkit-text-stroke:0.22px #1f2430;">Capital Expenditure</div>
<div class="t" style="left:146.30px;top:714.24px;font-size:16.9px;line-height:21px;color:#fff;font-weight:700;transform:scaleX(1.0139);transform-origin:0 50%;-webkit-text-stroke:0.3px #fff;">Net Cash Flow from Investing Activities</div>
<div class="t" style="left:126.60px;top:751.69px;font-size:18.2px;line-height:23px;color:#15171c;font-weight:700;transform:scaleX(1.0140);transform-origin:0 50%;-webkit-text-stroke:0.3px #15171c;">Cash Flow from Financing Activities</div>
<div class="t" style="left:139.20px;top:778.72px;font-size:16.4px;line-height:20px;color:#1f2430;transform:scaleX(0.9579);transform-origin:0 50%;-webkit-text-stroke:0.22px #1f2430;">Debts Drawdowns</div>
<div class="t" style="left:139.20px;top:799.02px;font-size:16.4px;line-height:20px;color:#1f2430;transform:scaleX(0.9348);transform-origin:0 50%;-webkit-text-stroke:0.22px #1f2430;">Debts Repayments</div>
<div class="t" style="left:139.20px;top:818.52px;font-size:16.4px;line-height:20px;color:#1f2430;transform:scaleX(0.9410);transform-origin:0 50%;-webkit-text-stroke:0.22px #1f2430;">Equity Raisings</div>
<div class="t" style="left:139.20px;top:838.82px;font-size:16.4px;line-height:20px;color:#1f2430;transform:scaleX(0.9342);transform-origin:0 50%;-webkit-text-stroke:0.22px #1f2430;">Equity Buybacks</div>
<div class="t" style="left:139.20px;top:859.12px;font-size:16.4px;line-height:20px;color:#1f2430;transform:scaleX(0.9466);transform-origin:0 50%;-webkit-text-stroke:0.22px #1f2430;">Dividends Paid</div>
<div class="t" style="left:146.30px;top:878.74px;font-size:16.9px;line-height:21px;color:#fff;font-weight:700;-webkit-text-stroke:0.3px #fff;">Net Cash Flow from Financing Activities</div>
<div class="t" style="left:146.30px;top:915.24px;font-size:16.9px;line-height:21px;color:#fff;font-weight:700;transform:scaleX(1.0304);transform-origin:0 50%;-webkit-text-stroke:0.3px #fff;">Net Increase/(Decrease) in Cash Held</div>
<div class="t" style="left:114.40px;top:968.22px;font-size:21.6px;line-height:27px;color:#1c1f26;font-weight:700;transform:scaleX(0.9936);transform-origin:0 50%;-webkit-text-stroke:0.35px #1c1f26;">Cash Flow Statement (indirect method), $</div>
<div class="t" style="left:126.60px;top:1008.89px;font-size:18.2px;line-height:23px;color:#15171c;font-weight:700;transform:scaleX(1.0226);transform-origin:0 50%;-webkit-text-stroke:0.3px #15171c;">Operating Activities</div>
<div class="t" style="left:139.20px;top:1031.22px;font-size:16.4px;line-height:20px;color:#1f2430;transform:scaleX(0.9519);transform-origin:0 50%;-webkit-text-stroke:0.22px #1f2430;">Net Income Less Depreciation</div>
<div class="t" style="left:139.20px;top:1051.12px;font-size:16.4px;line-height:20px;color:#1f2430;transform:scaleX(0.9543);transform-origin:0 50%;-webkit-text-stroke:0.22px #1f2430;">Changes in Working Capital</div>
<div class="t" style="left:134.50px;top:1071.14px;font-size:16.9px;line-height:21px;color:#fff;font-weight:700;transform:scaleX(1.0289);transform-origin:0 50%;-webkit-text-stroke:0.3px #fff;">Total Operating Activities</div>
<div class="t" style="left:126.60px;top:1114.39px;font-size:18.2px;line-height:23px;color:#15171c;font-weight:700;transform:scaleX(1.0352);transform-origin:0 50%;-webkit-text-stroke:0.3px #15171c;">Investing Activities</div>
<div class="t" style="left:139.20px;top:1137.62px;font-size:16.4px;line-height:20px;color:#1f2430;transform:scaleX(0.9562);transform-origin:0 50%;-webkit-text-stroke:0.22px #1f2430;">Capital Expenditure</div>
<div class="t" style="left:134.50px;top:1157.24px;font-size:16.9px;line-height:21px;color:#fff;font-weight:700;transform:scaleX(1.0160);transform-origin:0 50%;-webkit-text-stroke:0.3px #fff;">Total Cash From (For) Investing Activities</div>
<div class="t" style="left:126.60px;top:1200.49px;font-size:18.2px;line-height:23px;color:#15171c;font-weight:700;transform:scaleX(1.0103);transform-origin:0 50%;-webkit-text-stroke:0.3px #15171c;">Financing Activities</div>
<div class="t" style="left:139.20px;top:1223.72px;font-size:16.4px;line-height:20px;color:#1f2430;transform:scaleX(0.9779);transform-origin:0 50%;-webkit-text-stroke:0.22px #1f2430;">Equity Investment</div>
<div class="t" style="left:139.20px;top:1243.52px;font-size:16.4px;line-height:20px;color:#1f2430;transform:scaleX(0.8909);transform-origin:0 50%;-webkit-text-stroke:0.22px #1f2430;">Loans</div>
<div class="t" style="left:139.20px;top:1263.42px;font-size:16.4px;line-height:20px;color:#1f2430;transform:scaleX(0.9466);transform-origin:0 50%;-webkit-text-stroke:0.22px #1f2430;">Dividends Paid</div>
<div class="t" style="left:134.50px;top:1283.04px;font-size:16.9px;line-height:21px;color:#fff;font-weight:700;-webkit-text-stroke:0.3px #fff;">Total Cash From (For) Financing Activities</div>
<div class="t" style="left:126.60px;top:1326.29px;font-size:18.2px;line-height:23px;color:#15171c;font-weight:700;transform:scaleX(1.0216);transform-origin:0 50%;-webkit-text-stroke:0.3px #15171c;">Cash Movement</div>
<div class="t" style="left:139.20px;top:1350.72px;font-size:16.4px;line-height:20px;color:#1f2430;transform:scaleX(0.9416);transform-origin:0 50%;-webkit-text-stroke:0.22px #1f2430;">Cash and Cash Equivalents Beginning</div>
<div class="t" style="left:139.20px;top:1373.82px;font-size:16.4px;line-height:20px;color:#1f2430;transform:scaleX(0.9416);transform-origin:0 50%;-webkit-text-stroke:0.22px #1f2430;">Net (Increase) Decrease In Cash</div>
<div class="t" style="left:134.50px;top:1394.64px;font-size:16.9px;line-height:21px;color:#fff;font-weight:700;transform:scaleX(0.9881);transform-origin:0 50%;-webkit-text-stroke:0.3px #fff;">Total Cash and Cash Equivalents End</div>
<div class="t" style="left:127.60px;top:1453.91px;font-size:19.6px;line-height:24px;color:#15171c;font-weight:700;transform:scaleX(1.0829);transform-origin:0 50%;-webkit-text-stroke:0.3px #15171c;">Interest on Cash Breakdown</div>
<div class="t" style="left:139.20px;top:1491.52px;font-size:16.4px;line-height:20px;color:#1f2430;transform:scaleX(0.9785);transform-origin:0 50%;-webkit-text-stroke:0.22px #1f2430;">Net Cash Flow from Investing Activities</div>
<div class="t" style="left:139.20px;top:1511.82px;font-size:16.4px;line-height:20px;color:#1f2430;transform:scaleX(0.9669);transform-origin:0 50%;-webkit-text-stroke:0.22px #1f2430;">Net Cash Flow from Financing Activities</div>
<div class="t" style="left:139.20px;top:1531.32px;font-size:16.4px;line-height:20px;color:#1f2430;transform:scaleX(0.9025);transform-origin:0 50%;-webkit-text-stroke:0.22px #1f2430;">Cash Receipts</div>
<div class="t" style="left:139.20px;top:1551.62px;font-size:16.4px;line-height:20px;color:#1f2430;transform:scaleX(0.9187);transform-origin:0 50%;-webkit-text-stroke:0.22px #1f2430;">Cash Payments</div>
<div class="t" style="left:139.20px;top:1571.52px;font-size:16.4px;line-height:20px;color:#1f2430;transform:scaleX(0.9665);transform-origin:0 50%;-webkit-text-stroke:0.22px #1f2430;">Change in Cash (Pre-Corporate Tax &amp; Interest on Cash)</div>
<div class="t" style="left:139.20px;top:1591.72px;font-size:16.4px;line-height:20px;color:#1f2430;transform:scaleX(0.9470);transform-origin:0 50%;-webkit-text-stroke:0.22px #1f2430;">Interest Expense</div>
<div class="t" style="left:139.20px;top:1611.22px;font-size:16.4px;line-height:20px;color:#1f2430;transform:scaleX(0.9567);transform-origin:0 50%;-webkit-text-stroke:0.22px #1f2430;">Corporate Tax Expense</div>
<div class="t" style="left:146.30px;top:1630.84px;font-size:16.9px;line-height:21px;color:#fff;font-weight:700;transform:scaleX(1.0304);transform-origin:0 50%;-webkit-text-stroke:0.3px #fff;">Net Increase/(Decrease) in Cash Held</div>
<div class="t" style="left:880.57px;top:415.56px;font-size:17.6px;line-height:22px;color:#000;font-family:'Liberation Serif';font-weight:700;letter-spacing:0.850px;-webkit-text-stroke:0.3px #000;">2026</div>
<div class="t" style="left:864.56px;top:436.96px;font-size:16.0px;line-height:20px;color:#000;font-weight:700;letter-spacing:0.550px;-webkit-text-stroke:0.25px #000;">Jan-<span style="font-family:'Liberation Serif';font-size:17.6px;letter-spacing:0.85px">26</span></div>
<div class="t" style="left:999.58px;top:415.56px;font-size:17.6px;line-height:22px;color:#000;font-family:'Liberation Serif';font-weight:700;letter-spacing:0.850px;-webkit-text-stroke:0.3px #000;">2026</div>
<div class="t" style="left:982.69px;top:436.96px;font-size:16.0px;line-height:20px;color:#000;font-weight:700;letter-spacing:0.550px;-webkit-text-stroke:0.25px #000;">Feb-<span style="font-family:'Liberation Serif';font-size:17.6px;letter-spacing:0.85px">26</span></div>
<div class="t" style="left:1118.59px;top:415.56px;font-size:17.6px;line-height:22px;color:#000;font-family:'Liberation Serif';font-weight:700;letter-spacing:0.850px;-webkit-text-stroke:0.3px #000;">2026</div>
<div class="t" style="left:1101.70px;top:436.96px;font-size:16.0px;line-height:20px;color:#000;font-weight:700;letter-spacing:0.550px;-webkit-text-stroke:0.25px #000;">Mar-<span style="font-family:'Liberation Serif';font-size:17.6px;letter-spacing:0.85px">26</span></div>
<div class="t" style="left:1237.60px;top:415.56px;font-size:17.6px;line-height:22px;color:#000;font-family:'Liberation Serif';font-weight:700;letter-spacing:0.850px;-webkit-text-stroke:0.3px #000;">2026</div>
<div class="t" style="left:1221.60px;top:436.96px;font-size:16.0px;line-height:20px;color:#000;font-weight:700;letter-spacing:0.550px;-webkit-text-stroke:0.25px #000;">Apr-<span style="font-family:'Liberation Serif';font-size:17.6px;letter-spacing:0.85px">26</span></div>
<div class="t" style="left:1356.61px;top:415.56px;font-size:17.6px;line-height:22px;color:#000;font-family:'Liberation Serif';font-weight:700;letter-spacing:0.850px;-webkit-text-stroke:0.3px #000;">2026</div>
<div class="t" style="left:1337.05px;top:436.96px;font-size:16.0px;line-height:20px;color:#000;font-weight:700;letter-spacing:0.550px;-webkit-text-stroke:0.25px #000;">May-<span style="font-family:'Liberation Serif';font-size:17.6px;letter-spacing:0.85px">26</span></div>
<div class="t" style="left:1475.62px;top:415.56px;font-size:17.6px;line-height:22px;color:#000;font-family:'Liberation Serif';font-weight:700;letter-spacing:0.850px;-webkit-text-stroke:0.3px #000;">2026</div>
<div class="t" style="left:1458.73px;top:436.96px;font-size:16.0px;line-height:20px;color:#000;font-weight:700;letter-spacing:0.550px;-webkit-text-stroke:0.25px #000;">Jun-<span style="font-family:'Liberation Serif';font-size:17.6px;letter-spacing:0.85px">26</span></div>
<div class="t" style="left:1594.63px;top:415.56px;font-size:17.6px;line-height:22px;color:#000;font-family:'Liberation Serif';font-weight:700;letter-spacing:0.850px;-webkit-text-stroke:0.3px #000;">2026</div>
<div class="t" style="left:1583.07px;top:436.96px;font-size:16.0px;line-height:20px;color:#000;font-weight:700;letter-spacing:0.550px;-webkit-text-stroke:0.25px #000;">Jul-<span style="font-family:'Liberation Serif';font-size:17.6px;letter-spacing:0.85px">26</span></div>
<div class="t" style="left:1713.64px;top:415.56px;font-size:17.6px;line-height:22px;color:#000;font-family:'Liberation Serif';font-weight:700;letter-spacing:0.850px;-webkit-text-stroke:0.3px #000;">2026</div>
<div class="t" style="left:1694.10px;top:436.96px;font-size:16.0px;line-height:20px;color:#000;font-weight:700;letter-spacing:0.550px;-webkit-text-stroke:0.25px #000;">Aug-<span style="font-family:'Liberation Serif';font-size:17.6px;letter-spacing:0.85px">26</span></div>
<div class="t" style="left:1832.65px;top:415.56px;font-size:17.6px;line-height:22px;color:#000;font-family:'Liberation Serif';font-weight:700;letter-spacing:0.850px;-webkit-text-stroke:0.3px #000;">2026</div>
<div class="t" style="left:1814.87px;top:436.96px;font-size:16.0px;line-height:20px;color:#000;font-weight:700;letter-spacing:0.550px;-webkit-text-stroke:0.25px #000;">Sep-<span style="font-family:'Liberation Serif';font-size:17.6px;letter-spacing:0.85px">26</span></div>
<div class="t" style="left:1951.66px;top:415.56px;font-size:17.6px;line-height:22px;color:#000;font-family:'Liberation Serif';font-weight:700;letter-spacing:0.850px;-webkit-text-stroke:0.3px #000;">2026</div>
<div class="t" style="left:1936.55px;top:436.96px;font-size:16.0px;line-height:20px;color:#000;font-weight:700;letter-spacing:0.550px;-webkit-text-stroke:0.25px #000;">Oct-<span style="font-family:'Liberation Serif';font-size:17.6px;letter-spacing:0.85px">26</span></div>
<div class="t" style="left:2070.67px;top:415.56px;font-size:17.6px;line-height:22px;color:#000;font-family:'Liberation Serif';font-weight:700;letter-spacing:0.850px;-webkit-text-stroke:0.3px #000;">2026</div>
<div class="t" style="left:2052.00px;top:436.96px;font-size:16.0px;line-height:20px;color:#000;font-weight:700;letter-spacing:0.550px;-webkit-text-stroke:0.25px #000;">Nov-<span style="font-family:'Liberation Serif';font-size:17.6px;letter-spacing:0.85px">26</span></div>
<div class="t" style="left:2189.68px;top:415.56px;font-size:17.6px;line-height:22px;color:#000;font-family:'Liberation Serif';font-weight:700;letter-spacing:0.850px;-webkit-text-stroke:0.3px #000;">2026</div>
<div class="t" style="left:2171.89px;top:436.96px;font-size:16.0px;line-height:20px;color:#000;font-weight:700;letter-spacing:0.550px;-webkit-text-stroke:0.25px #000;">Dec-<span style="font-family:'Liberation Serif';font-size:17.6px;letter-spacing:0.85px">26</span></div>
<div class="t" style="left:2308.69px;top:415.56px;font-size:17.6px;line-height:22px;color:#000;font-family:'Liberation Serif';font-weight:700;letter-spacing:0.850px;-webkit-text-stroke:0.3px #000;">2027</div>
<div class="t" style="left:2292.68px;top:436.96px;font-size:16.0px;line-height:20px;color:#000;font-weight:700;letter-spacing:0.550px;-webkit-text-stroke:0.25px #000;">Jan-<span style="font-family:'Liberation Serif';font-size:17.6px;letter-spacing:0.85px">27</span></div>
<div class="t" style="left:2427.70px;top:415.56px;font-size:17.6px;line-height:22px;color:#000;font-family:'Liberation Serif';font-weight:700;letter-spacing:0.850px;-webkit-text-stroke:0.3px #000;">2027</div>
<div class="t" style="left:2410.81px;top:436.96px;font-size:16.0px;line-height:20px;color:#000;font-weight:700;letter-spacing:0.550px;-webkit-text-stroke:0.25px #000;">Feb-<span style="font-family:'Liberation Serif';font-size:17.6px;letter-spacing:0.85px">27</span></div>
<div class="t" style="left:2546.71px;top:415.56px;font-size:17.6px;line-height:22px;color:#000;font-family:'Liberation Serif';font-weight:700;letter-spacing:0.850px;-webkit-text-stroke:0.3px #000;">2027</div>
<div class="t" style="left:2529.82px;top:436.96px;font-size:16.0px;line-height:20px;color:#000;font-weight:700;letter-spacing:0.550px;-webkit-text-stroke:0.25px #000;">Mar-<span style="font-family:'Liberation Serif';font-size:17.6px;letter-spacing:0.85px">27</span></div>
<div class="t" style="left:2665.72px;top:415.56px;font-size:17.6px;line-height:22px;color:#000;font-family:'Liberation Serif';font-weight:700;letter-spacing:0.850px;-webkit-text-stroke:0.3px #000;">2027</div>
<div class="t" style="left:2649.72px;top:436.96px;font-size:16.0px;line-height:20px;color:#000;font-weight:700;letter-spacing:0.550px;-webkit-text-stroke:0.25px #000;">Apr-<span style="font-family:'Liberation Serif';font-size:17.6px;letter-spacing:0.85px">27</span></div>
<div class="t" style="left:2784.73px;top:415.56px;font-size:17.6px;line-height:22px;color:#000;font-family:'Liberation Serif';font-weight:700;letter-spacing:0.850px;-webkit-text-stroke:0.3px #000;">2027</div>
<div class="t" style="left:2765.17px;top:436.96px;font-size:16.0px;line-height:20px;color:#000;font-weight:700;letter-spacing:0.550px;-webkit-text-stroke:0.25px #000;">May-<span style="font-family:'Liberation Serif';font-size:17.6px;letter-spacing:0.85px">27</span></div>
<div class="t" style="left:870.70px;top:548.11px;font-size:14.1px;line-height:18px;color:#1f2430;letter-spacing:0.200px;-webkit-text-stroke:0.15px #1f2430;">10,538</div>
<div class="t" style="left:989.71px;top:548.11px;font-size:14.1px;line-height:18px;color:#1f2430;letter-spacing:0.200px;-webkit-text-stroke:0.15px #1f2430;">19,358</div>
<div class="t" style="left:1108.72px;top:548.11px;font-size:14.1px;line-height:18px;color:#1f2430;letter-spacing:0.200px;-webkit-text-stroke:0.15px #1f2430;">21,475</div>
<div class="t" style="left:1227.73px;top:548.11px;font-size:14.1px;line-height:18px;color:#1f2430;letter-spacing:0.200px;-webkit-text-stroke:0.15px #1f2430;">20,087</div>
<div class="t" style="left:1346.74px;top:548.11px;font-size:14.1px;line-height:18px;color:#1f2430;letter-spacing:0.200px;-webkit-text-stroke:0.15px #1f2430;">20,746</div>
<div class="t" style="left:1465.75px;top:548.11px;font-size:14.1px;line-height:18px;color:#1f2430;letter-spacing:0.200px;-webkit-text-stroke:0.15px #1f2430;">20,087</div>
<div class="t" style="left:1584.76px;top:548.11px;font-size:14.1px;line-height:18px;color:#1f2430;letter-spacing:0.200px;-webkit-text-stroke:0.15px #1f2430;">20,746</div>
<div class="t" style="left:1703.77px;top:548.11px;font-size:14.1px;line-height:18px;color:#1f2430;letter-spacing:0.200px;-webkit-text-stroke:0.15px #1f2430;">20,417</div>
<div class="t" style="left:1822.78px;top:548.11px;font-size:14.1px;line-height:18px;color:#1f2430;letter-spacing:0.200px;-webkit-text-stroke:0.15px #1f2430;">20,087</div>
<div class="t" style="left:1941.79px;top:548.11px;font-size:14.1px;line-height:18px;color:#1f2430;letter-spacing:0.200px;-webkit-text-stroke:0.15px #1f2430;">20,746</div>
<div class="t" style="left:2060.80px;top:548.11px;font-size:14.1px;line-height:18px;color:#1f2430;letter-spacing:0.200px;-webkit-text-stroke:0.15px #1f2430;">20,087</div>
<div class="t" style="left:2179.81px;top:548.11px;font-size:14.1px;line-height:18px;color:#1f2430;letter-spacing:0.200px;-webkit-text-stroke:0.15px #1f2430;">20,746</div>
<div class="t" style="left:2298.82px;top:548.11px;font-size:14.1px;line-height:18px;color:#1f2430;letter-spacing:0.200px;-webkit-text-stroke:0.15px #1f2430;">28,064</div>
<div class="t" style="left:2417.83px;top:548.11px;font-size:14.1px;line-height:18px;color:#1f2430;letter-spacing:0.200px;-webkit-text-stroke:0.15px #1f2430;">33,407</div>
<div class="t" style="left:2536.84px;top:548.11px;font-size:14.1px;line-height:18px;color:#1f2430;letter-spacing:0.200px;-webkit-text-stroke:0.15px #1f2430;">37,060</div>
<div class="t" style="left:2655.85px;top:548.11px;font-size:14.1px;line-height:18px;color:#1f2430;letter-spacing:0.200px;-webkit-text-stroke:0.15px #1f2430;">34,665</div>
<div class="t" style="left:2774.86px;top:548.11px;font-size:14.1px;line-height:18px;color:#1f2430;letter-spacing:0.200px;-webkit-text-stroke:0.15px #1f2430;">35,802</div>
<div class="t" style="left:865.81px;top:568.21px;font-size:14.1px;line-height:18px;color:#1f2430;letter-spacing:0.200px;-webkit-text-stroke:0.15px #1f2430;">(15,505)</div>
<div class="t" style="left:984.82px;top:568.21px;font-size:14.1px;line-height:18px;color:#1f2430;letter-spacing:0.200px;-webkit-text-stroke:0.15px #1f2430;">(25,749)</div>
<div class="t" style="left:1103.83px;top:568.21px;font-size:14.1px;line-height:18px;color:#1f2430;letter-spacing:0.200px;-webkit-text-stroke:0.15px #1f2430;">(28,208)</div>
<div class="t" style="left:1222.84px;top:568.21px;font-size:14.1px;line-height:18px;color:#1f2430;letter-spacing:0.200px;-webkit-text-stroke:0.15px #1f2430;">(26,596)</div>
<div class="t" style="left:1341.85px;top:568.21px;font-size:14.1px;line-height:18px;color:#1f2430;letter-spacing:0.200px;-webkit-text-stroke:0.15px #1f2430;">(27,361)</div>
<div class="t" style="left:1460.86px;top:568.21px;font-size:14.1px;line-height:18px;color:#1f2430;letter-spacing:0.200px;-webkit-text-stroke:0.15px #1f2430;">(26,596)</div>
<div class="t" style="left:1579.87px;top:568.21px;font-size:14.1px;line-height:18px;color:#1f2430;letter-spacing:0.200px;-webkit-text-stroke:0.15px #1f2430;">(27,361)</div>
<div class="t" style="left:1698.88px;top:568.21px;font-size:14.1px;line-height:18px;color:#1f2430;letter-spacing:0.200px;-webkit-text-stroke:0.15px #1f2430;">(26,979)</div>
<div class="t" style="left:1817.89px;top:568.21px;font-size:14.1px;line-height:18px;color:#1f2430;letter-spacing:0.200px;-webkit-text-stroke:0.15px #1f2430;">(26,596)</div>
<div class="t" style="left:1936.90px;top:568.21px;font-size:14.1px;line-height:18px;color:#1f2430;letter-spacing:0.200px;-webkit-text-stroke:0.15px #1f2430;">(27,361)</div>
<div class="t" style="left:2055.91px;top:568.21px;font-size:14.1px;line-height:18px;color:#1f2430;letter-spacing:0.200px;-webkit-text-stroke:0.15px #1f2430;">(26,596)</div>
<div class="t" style="left:2174.92px;top:568.21px;font-size:14.1px;line-height:18px;color:#1f2430;letter-spacing:0.200px;-webkit-text-stroke:0.15px #1f2430;">(27,361)</div>
<div class="t" style="left:2293.93px;top:568.21px;font-size:14.1px;line-height:18px;color:#1f2430;letter-spacing:0.200px;-webkit-text-stroke:0.15px #1f2430;">(30,279)</div>
<div class="t" style="left:2412.94px;top:568.21px;font-size:14.1px;line-height:18px;color:#1f2430;letter-spacing:0.200px;-webkit-text-stroke:0.15px #1f2430;">(29,827)</div>
<div class="t" style="left:2531.95px;top:568.21px;font-size:14.1px;line-height:18px;color:#1f2430;letter-spacing:0.200px;-webkit-text-stroke:0.15px #1f2430;">(32,472)</div>
<div class="t" style="left:2650.96px;top:568.21px;font-size:14.1px;line-height:18px;color:#1f2430;letter-spacing:0.200px;-webkit-text-stroke:0.15px #1f2430;">(30,738)</div>
<div class="t" style="left:2769.97px;top:568.21px;font-size:14.1px;line-height:18px;color:#1f2430;letter-spacing:0.200px;-webkit-text-stroke:0.15px #1f2430;">(31,561)</div>
<div class="t" style="left:873.85px;top:588.41px;font-size:14.1px;line-height:18px;color:#1f2430;letter-spacing:0.200px;-webkit-text-stroke:0.15px #1f2430;">(1,000)</div>
<div class="t" style="left:992.86px;top:588.41px;font-size:14.1px;line-height:18px;color:#1f2430;letter-spacing:0.200px;-webkit-text-stroke:0.15px #1f2430;">(1,000)</div>
<div class="t" style="left:1111.87px;top:588.41px;font-size:14.1px;line-height:18px;color:#1f2430;letter-spacing:0.200px;-webkit-text-stroke:0.15px #1f2430;">(1,667)</div>
<div class="t" style="left:1230.88px;top:588.41px;font-size:14.1px;line-height:18px;color:#1f2430;letter-spacing:0.200px;-webkit-text-stroke:0.15px #1f2430;">(1,656)</div>
<div class="t" style="left:1349.89px;top:588.41px;font-size:14.1px;line-height:18px;color:#1f2430;letter-spacing:0.200px;-webkit-text-stroke:0.15px #1f2430;">(1,644)</div>
<div class="t" style="left:1468.90px;top:588.41px;font-size:14.1px;line-height:18px;color:#1f2430;letter-spacing:0.200px;-webkit-text-stroke:0.15px #1f2430;">(1,633)</div>
<div class="t" style="left:1587.91px;top:588.41px;font-size:14.1px;line-height:18px;color:#1f2430;letter-spacing:0.200px;-webkit-text-stroke:0.15px #1f2430;">(1,622)</div>
<div class="t" style="left:1707.97px;top:588.41px;font-size:14.1px;line-height:18px;color:#1f2430;letter-spacing:0.200px;-webkit-text-stroke:0.15px #1f2430;">(1,611)</div>
<div class="t" style="left:1825.93px;top:588.41px;font-size:14.1px;line-height:18px;color:#1f2430;letter-spacing:0.200px;-webkit-text-stroke:0.15px #1f2430;">(1,600)</div>
<div class="t" style="left:1944.94px;top:588.41px;font-size:14.1px;line-height:18px;color:#1f2430;letter-spacing:0.200px;-webkit-text-stroke:0.15px #1f2430;">(1,589)</div>
<div class="t" style="left:2063.95px;top:588.41px;font-size:14.1px;line-height:18px;color:#1f2430;letter-spacing:0.200px;-webkit-text-stroke:0.15px #1f2430;">(1,578)</div>
<div class="t" style="left:2182.96px;top:588.41px;font-size:14.1px;line-height:18px;color:#1f2430;letter-spacing:0.200px;-webkit-text-stroke:0.15px #1f2430;">(1,567)</div>
<div class="t" style="left:2301.97px;top:588.41px;font-size:14.1px;line-height:18px;color:#1f2430;letter-spacing:0.200px;-webkit-text-stroke:0.15px #1f2430;">(1,556)</div>
<div class="t" style="left:2420.98px;top:588.41px;font-size:14.1px;line-height:18px;color:#1f2430;letter-spacing:0.200px;-webkit-text-stroke:0.15px #1f2430;">(1,534)</div>
<div class="t" style="left:2539.99px;top:588.41px;font-size:14.1px;line-height:18px;color:#1f2430;letter-spacing:0.200px;-webkit-text-stroke:0.15px #1f2430;">(1,512)</div>
<div class="t" style="left:2659.00px;top:588.41px;font-size:14.1px;line-height:18px;color:#1f2430;letter-spacing:0.200px;-webkit-text-stroke:0.15px #1f2430;">(1,491)</div>
<div class="t" style="left:2778.01px;top:588.41px;font-size:14.1px;line-height:18px;color:#1f2430;letter-spacing:0.200px;-webkit-text-stroke:0.15px #1f2430;">(1,469)</div>
<div class="t" style="left:909.96px;top:608.51px;font-size:14.1px;line-height:18px;color:#1f2430;-webkit-text-stroke:0.15px #1f2430;">-</div>
<div class="t" style="left:1028.97px;top:608.51px;font-size:14.1px;line-height:18px;color:#1f2430;-webkit-text-stroke:0.15px #1f2430;">-</div>
<div class="t" style="left:1147.98px;top:608.51px;font-size:14.1px;line-height:18px;color:#1f2430;-webkit-text-stroke:0.15px #1f2430;">-</div>
<div class="t" style="left:1266.99px;top:608.51px;font-size:14.1px;line-height:18px;color:#1f2430;-webkit-text-stroke:0.15px #1f2430;">-</div>
<div class="t" style="left:1386.00px;top:608.51px;font-size:14.1px;line-height:18px;color:#1f2430;-webkit-text-stroke:0.15px #1f2430;">-</div>
<div class="t" style="left:1505.01px;top:608.51px;font-size:14.1px;line-height:18px;color:#1f2430;-webkit-text-stroke:0.15px #1f2430;">-</div>
<div class="t" style="left:1624.02px;top:608.51px;font-size:14.1px;line-height:18px;color:#1f2430;-webkit-text-stroke:0.15px #1f2430;">-</div>
<div class="t" style="left:1743.03px;top:608.51px;font-size:14.1px;line-height:18px;color:#1f2430;-webkit-text-stroke:0.15px #1f2430;">-</div>
<div class="t" style="left:1862.04px;top:608.51px;font-size:14.1px;line-height:18px;color:#1f2430;-webkit-text-stroke:0.15px #1f2430;">-</div>
<div class="t" style="left:1981.05px;top:608.51px;font-size:14.1px;line-height:18px;color:#1f2430;-webkit-text-stroke:0.15px #1f2430;">-</div>
<div class="t" style="left:2100.06px;top:608.51px;font-size:14.1px;line-height:18px;color:#1f2430;-webkit-text-stroke:0.15px #1f2430;">-</div>
<div class="t" style="left:2219.07px;top:608.51px;font-size:14.1px;line-height:18px;color:#1f2430;-webkit-text-stroke:0.15px #1f2430;">-</div>
<div class="t" style="left:2314.12px;top:608.51px;font-size:14.1px;line-height:18px;color:#1f2430;letter-spacing:0.200px;-webkit-text-stroke:0.15px #1f2430;">(492)</div>
<div class="t" style="left:2433.13px;top:608.51px;font-size:14.1px;line-height:18px;color:#1f2430;letter-spacing:0.200px;-webkit-text-stroke:0.15px #1f2430;">(498)</div>
<div class="t" style="left:2552.14px;top:608.51px;font-size:14.1px;line-height:18px;color:#1f2430;letter-spacing:0.200px;-webkit-text-stroke:0.15px #1f2430;">(503)</div>
<div class="t" style="left:2671.15px;top:608.51px;font-size:14.1px;line-height:18px;color:#1f2430;letter-spacing:0.200px;-webkit-text-stroke:0.15px #1f2430;">(509)</div>
<div class="t" style="left:2790.16px;top:608.51px;font-size:14.1px;line-height:18px;color:#1f2430;letter-spacing:0.200px;-webkit-text-stroke:0.15px #1f2430;">(514)</div>
<div class="t" style="left:861.11px;top:625.92px;font-size:18.0px;line-height:22px;color:#fff;font-family:'Liberation Serif';font-weight:700;letter-spacing:0.850px;-webkit-text-stroke:0.35px #fff;">(5,967)</div>
<div class="t" style="left:980.12px;top:625.92px;font-size:18.0px;line-height:22px;color:#fff;font-family:'Liberation Serif';font-weight:700;letter-spacing:0.850px;-webkit-text-stroke:0.35px #fff;">(7,391)</div>
<div class="t" style="left:1099.13px;top:625.92px;font-size:18.0px;line-height:22px;color:#fff;font-family:'Liberation Serif';font-weight:700;letter-spacing:0.850px;-webkit-text-stroke:0.35px #fff;">(8,399)</div>
<div class="t" style="left:1218.14px;top:625.92px;font-size:18.0px;line-height:22px;color:#fff;font-family:'Liberation Serif';font-weight:700;letter-spacing:0.850px;-webkit-text-stroke:0.35px #fff;">(8,164)</div>
<div class="t" style="left:1337.15px;top:625.92px;font-size:18.0px;line-height:22px;color:#fff;font-family:'Liberation Serif';font-weight:700;letter-spacing:0.850px;-webkit-text-stroke:0.35px #fff;">(8,260)</div>
<div class="t" style="left:1456.16px;top:625.92px;font-size:18.0px;line-height:22px;color:#fff;font-family:'Liberation Serif';font-weight:700;letter-spacing:0.850px;-webkit-text-stroke:0.35px #fff;">(8,142)</div>
<div class="t" style="left:1575.17px;top:625.92px;font-size:18.0px;line-height:22px;color:#fff;font-family:'Liberation Serif';font-weight:700;letter-spacing:0.850px;-webkit-text-stroke:0.35px #fff;">(8,237)</div>
<div class="t" style="left:1694.18px;top:625.92px;font-size:18.0px;line-height:22px;color:#fff;font-family:'Liberation Serif';font-weight:700;letter-spacing:0.850px;-webkit-text-stroke:0.35px #fff;">(8,173)</div>
<div class="t" style="left:1813.19px;top:625.92px;font-size:18.0px;line-height:22px;color:#fff;font-family:'Liberation Serif';font-weight:700;letter-spacing:0.850px;-webkit-text-stroke:0.35px #fff;">(8,109)</div>
<div class="t" style="left:1932.20px;top:625.92px;font-size:18.0px;line-height:22px;color:#fff;font-family:'Liberation Serif';font-weight:700;letter-spacing:0.850px;-webkit-text-stroke:0.35px #fff;">(8,204)</div>
<div class="t" style="left:2051.21px;top:625.92px;font-size:18.0px;line-height:22px;color:#fff;font-family:'Liberation Serif';font-weight:700;letter-spacing:0.850px;-webkit-text-stroke:0.35px #fff;">(8,087)</div>
<div class="t" style="left:2170.22px;top:625.92px;font-size:18.0px;line-height:22px;color:#fff;font-family:'Liberation Serif';font-weight:700;letter-spacing:0.850px;-webkit-text-stroke:0.35px #fff;">(8,182)</div>
<div class="t" style="left:2289.23px;top:625.92px;font-size:18.0px;line-height:22px;color:#fff;font-family:'Liberation Serif';font-weight:700;letter-spacing:0.850px;-webkit-text-stroke:0.35px #fff;">(4,263)</div>
<div class="t" style="left:2415.24px;top:625.92px;font-size:18.0px;line-height:22px;color:#fff;font-family:'Liberation Serif';font-weight:700;letter-spacing:0.850px;-webkit-text-stroke:0.35px #fff;">1,548</div>
<div class="t" style="left:2534.25px;top:625.92px;font-size:18.0px;line-height:22px;color:#fff;font-family:'Liberation Serif';font-weight:700;letter-spacing:0.850px;-webkit-text-stroke:0.35px #fff;">2,572</div>
<div class="t" style="left:2653.26px;top:625.92px;font-size:18.0px;line-height:22px;color:#fff;font-family:'Liberation Serif';font-weight:700;letter-spacing:0.850px;-webkit-text-stroke:0.35px #fff;">1,928</div>
<div class="t" style="left:2772.27px;top:625.92px;font-size:18.0px;line-height:22px;color:#fff;font-family:'Liberation Serif';font-weight:700;letter-spacing:0.850px;-webkit-text-stroke:0.35px #fff;">2,257</div>
<div class="t" style="left:865.81px;top:692.01px;font-size:14.1px;line-height:18px;color:#1f2430;letter-spacing:0.200px;-webkit-text-stroke:0.15px #1f2430;">(33,000)</div>
<div class="t" style="left:984.82px;top:692.01px;font-size:14.1px;line-height:18px;color:#1f2430;letter-spacing:0.200px;-webkit-text-stroke:0.15px #1f2430;">(12,500)</div>
<div class="t" style="left:1103.83px;top:692.01px;font-size:14.1px;line-height:18px;color:#1f2430;letter-spacing:0.200px;-webkit-text-stroke:0.15px #1f2430;">(21,500)</div>
<div class="t" style="left:1266.99px;top:692.01px;font-size:14.1px;line-height:18px;color:#1f2430;-webkit-text-stroke:0.15px #1f2430;">-</div>
<div class="t" style="left:1386.00px;top:692.01px;font-size:14.1px;line-height:18px;color:#1f2430;-webkit-text-stroke:0.15px #1f2430;">-</div>
<div class="t" style="left:1505.01px;top:692.01px;font-size:14.1px;line-height:18px;color:#1f2430;-webkit-text-stroke:0.15px #1f2430;">-</div>
<div class="t" style="left:1624.02px;top:692.01px;font-size:14.1px;line-height:18px;color:#1f2430;-webkit-text-stroke:0.15px #1f2430;">-</div>
<div class="t" style="left:1743.03px;top:692.01px;font-size:14.1px;line-height:18px;color:#1f2430;-webkit-text-stroke:0.15px #1f2430;">-</div>
<div class="t" style="left:1862.04px;top:692.01px;font-size:14.1px;line-height:18px;color:#1f2430;-webkit-text-stroke:0.15px #1f2430;">-</div>
<div class="t" style="left:1981.05px;top:692.01px;font-size:14.1px;line-height:18px;color:#1f2430;-webkit-text-stroke:0.15px #1f2430;">-</div>
<div class="t" style="left:2100.06px;top:692.01px;font-size:14.1px;line-height:18px;color:#1f2430;-webkit-text-stroke:0.15px #1f2430;">-</div>
<div class="t" style="left:2219.07px;top:692.01px;font-size:14.1px;line-height:18px;color:#1f2430;-webkit-text-stroke:0.15px #1f2430;">-</div>
<div class="t" style="left:2338.08px;top:692.01px;font-size:14.1px;line-height:18px;color:#1f2430;-webkit-text-stroke:0.15px #1f2430;">-</div>
<div class="t" style="left:2457.09px;top:692.01px;font-size:14.1px;line-height:18px;color:#1f2430;-webkit-text-stroke:0.15px #1f2430;">-</div>
<div class="t" style="left:2576.10px;top:692.01px;font-size:14.1px;line-height:18px;color:#1f2430;-webkit-text-stroke:0.15px #1f2430;">-</div>
<div class="t" style="left:2695.11px;top:692.01px;font-size:14.1px;line-height:18px;color:#1f2430;-webkit-text-stroke:0.15px #1f2430;">-</div>
<div class="t" style="left:2814.12px;top:692.01px;font-size:14.1px;line-height:18px;color:#1f2430;-webkit-text-stroke:0.15px #1f2430;">-</div>
<div class="t" style="left:851.26px;top:714.12px;font-size:18.0px;line-height:22px;color:#fff;font-family:'Liberation Serif';font-weight:700;letter-spacing:0.850px;-webkit-text-stroke:0.35px #fff;">(33,000)</div>
<div class="t" style="left:970.27px;top:714.12px;font-size:18.0px;line-height:22px;color:#fff;font-family:'Liberation Serif';font-weight:700;letter-spacing:0.850px;-webkit-text-stroke:0.35px #fff;">(12,500)</div>
<div class="t" style="left:1089.28px;top:714.12px;font-size:18.0px;line-height:22px;color:#fff;font-family:'Liberation Serif';font-weight:700;letter-spacing:0.850px;-webkit-text-stroke:0.35px #fff;">(21,500)</div>
<div class="t" style="left:1262.34px;top:714.12px;font-size:18.0px;line-height:22px;color:#fff;font-family:'Liberation Serif';font-weight:700;-webkit-text-stroke:0.35px #fff;">-</div>
<div class="t" style="left:1381.35px;top:714.12px;font-size:18.0px;line-height:22px;color:#fff;font-family:'Liberation Serif';font-weight:700;-webkit-text-stroke:0.35px #fff;">-</div>
<div class="t" style="left:1500.36px;top:714.12px;font-size:18.0px;line-height:22px;color:#fff;font-family:'Liberation Serif';font-weight:700;-webkit-text-stroke:0.35px #fff;">-</div>
<div class="t" style="left:1619.37px;top:714.12px;font-size:18.0px;line-height:22px;color:#fff;font-family:'Liberation Serif';font-weight:700;-webkit-text-stroke:0.35px #fff;">-</div>
<div class="t" style="left:1738.38px;top:714.12px;font-size:18.0px;line-height:22px;color:#fff;font-family:'Liberation Serif';font-weight:700;-webkit-text-stroke:0.35px #fff;">-</div>
<div class="t" style="left:1857.39px;top:714.12px;font-size:18.0px;line-height:22px;color:#fff;font-family:'Liberation Serif';font-weight:700;-webkit-text-stroke:0.35px #fff;">-</div>
<div class="t" style="left:1976.40px;top:714.12px;font-size:18.0px;line-height:22px;color:#fff;font-family:'Liberation Serif';font-weight:700;-webkit-text-stroke:0.35px #fff;">-</div>
<div class="t" style="left:2095.41px;top:714.12px;font-size:18.0px;line-height:22px;color:#fff;font-family:'Liberation Serif';font-weight:700;-webkit-text-stroke:0.35px #fff;">-</div>
<div class="t" style="left:2214.42px;top:714.12px;font-size:18.0px;line-height:22px;color:#fff;font-family:'Liberation Serif';font-weight:700;-webkit-text-stroke:0.35px #fff;">-</div>
<div class="t" style="left:2333.43px;top:714.12px;font-size:18.0px;line-height:22px;color:#fff;font-family:'Liberation Serif';font-weight:700;-webkit-text-stroke:0.35px #fff;">-</div>
<div class="t" style="left:2452.44px;top:714.12px;font-size:18.0px;line-height:22px;color:#fff;font-family:'Liberation Serif';font-weight:700;-webkit-text-stroke:0.35px #fff;">-</div>
<div class="t" style="left:2571.45px;top:714.12px;font-size:18.0px;line-height:22px;color:#fff;font-family:'Liberation Serif';font-weight:700;-webkit-text-stroke:0.35px #fff;">-</div>
<div class="t" style="left:2690.46px;top:714.12px;font-size:18.0px;line-height:22px;color:#fff;font-family:'Liberation Serif';font-weight:700;-webkit-text-stroke:0.35px #fff;">-</div>
<div class="t" style="left:2809.47px;top:714.12px;font-size:18.0px;line-height:22px;color:#fff;font-family:'Liberation Serif';font-weight:700;-webkit-text-stroke:0.35px #fff;">-</div>
<div class="t" style="left:862.66px;top:780.11px;font-size:14.1px;line-height:18px;color:#1f2430;letter-spacing:0.200px;-webkit-text-stroke:0.15px #1f2430;">200,000</div>
<div class="t" style="left:1028.97px;top:780.11px;font-size:14.1px;line-height:18px;color:#1f2430;-webkit-text-stroke:0.15px #1f2430;">-</div>
<div class="t" style="left:1100.68px;top:780.11px;font-size:14.1px;line-height:18px;color:#1f2430;letter-spacing:0.200px;-webkit-text-stroke:0.15px #1f2430;">100,000</div>
<div class="t" style="left:1266.99px;top:780.11px;font-size:14.1px;line-height:18px;color:#1f2430;-webkit-text-stroke:0.15px #1f2430;">-</div>
<div class="t" style="left:1386.00px;top:780.11px;font-size:14.1px;line-height:18px;color:#1f2430;-webkit-text-stroke:0.15px #1f2430;">-</div>
<div class="t" style="left:1505.01px;top:780.11px;font-size:14.1px;line-height:18px;color:#1f2430;-webkit-text-stroke:0.15px #1f2430;">-</div>
<div class="t" style="left:1624.02px;top:780.11px;font-size:14.1px;line-height:18px;color:#1f2430;-webkit-text-stroke:0.15px #1f2430;">-</div>
<div class="t" style="left:1743.03px;top:780.11px;font-size:14.1px;line-height:18px;color:#1f2430;-webkit-text-stroke:0.15px #1f2430;">-</div>
<div class="t" style="left:1862.04px;top:780.11px;font-size:14.1px;line-height:18px;color:#1f2430;-webkit-text-stroke:0.15px #1f2430;">-</div>
<div class="t" style="left:1981.05px;top:780.11px;font-size:14.1px;line-height:18px;color:#1f2430;-webkit-text-stroke:0.15px #1f2430;">-</div>
<div class="t" style="left:2100.06px;top:780.11px;font-size:14.1px;line-height:18px;color:#1f2430;-webkit-text-stroke:0.15px #1f2430;">-</div>
<div class="t" style="left:2219.07px;top:780.11px;font-size:14.1px;line-height:18px;color:#1f2430;-webkit-text-stroke:0.15px #1f2430;">-</div>
<div class="t" style="left:2338.08px;top:780.11px;font-size:14.1px;line-height:18px;color:#1f2430;-webkit-text-stroke:0.15px #1f2430;">-</div>
<div class="t" style="left:2457.09px;top:780.11px;font-size:14.1px;line-height:18px;color:#1f2430;-webkit-text-stroke:0.15px #1f2430;">-</div>
<div class="t" style="left:2576.10px;top:780.11px;font-size:14.1px;line-height:18px;color:#1f2430;-webkit-text-stroke:0.15px #1f2430;">-</div>
<div class="t" style="left:2695.11px;top:780.11px;font-size:14.1px;line-height:18px;color:#1f2430;-webkit-text-stroke:0.15px #1f2430;">-</div>
<div class="t" style="left:2814.12px;top:780.11px;font-size:14.1px;line-height:18px;color:#1f2430;-webkit-text-stroke:0.15px #1f2430;">-</div>
<div class="t" style="left:909.96px;top:800.41px;font-size:14.1px;line-height:18px;color:#1f2430;-webkit-text-stroke:0.15px #1f2430;">-</div>
<div class="t" style="left:1028.97px;top:800.41px;font-size:14.1px;line-height:18px;color:#1f2430;-webkit-text-stroke:0.15px #1f2430;">-</div>
<div class="t" style="left:1111.87px;top:800.41px;font-size:14.1px;line-height:18px;color:#1f2430;letter-spacing:0.200px;-webkit-text-stroke:0.15px #1f2430;">(1,667)</div>
<div class="t" style="left:1230.88px;top:800.41px;font-size:14.1px;line-height:18px;color:#1f2430;letter-spacing:0.200px;-webkit-text-stroke:0.15px #1f2430;">(1,667)</div>
<div class="t" style="left:1349.89px;top:800.41px;font-size:14.1px;line-height:18px;color:#1f2430;letter-spacing:0.200px;-webkit-text-stroke:0.15px #1f2430;">(1,667)</div>
<div class="t" style="left:1468.90px;top:800.41px;font-size:14.1px;line-height:18px;color:#1f2430;letter-spacing:0.200px;-webkit-text-stroke:0.15px #1f2430;">(1,667)</div>
<div class="t" style="left:1587.91px;top:800.41px;font-size:14.1px;line-height:18px;color:#1f2430;letter-spacing:0.200px;-webkit-text-stroke:0.15px #1f2430;">(1,667)</div>
<div class="t" style="left:1706.92px;top:800.41px;font-size:14.1px;line-height:18px;color:#1f2430;letter-spacing:0.200px;-webkit-text-stroke:0.15px #1f2430;">(1,667)</div>
<div class="t" style="left:1825.93px;top:800.41px;font-size:14.1px;line-height:18px;color:#1f2430;letter-spacing:0.200px;-webkit-text-stroke:0.15px #1f2430;">(1,667)</div>
<div class="t" style="left:1944.94px;top:800.41px;font-size:14.1px;line-height:18px;color:#1f2430;letter-spacing:0.200px;-webkit-text-stroke:0.15px #1f2430;">(1,667)</div>
<div class="t" style="left:2063.95px;top:800.41px;font-size:14.1px;line-height:18px;color:#1f2430;letter-spacing:0.200px;-webkit-text-stroke:0.15px #1f2430;">(1,667)</div>
<div class="t" style="left:2182.96px;top:800.41px;font-size:14.1px;line-height:18px;color:#1f2430;letter-spacing:0.200px;-webkit-text-stroke:0.15px #1f2430;">(1,667)</div>
<div class="t" style="left:2301.97px;top:800.41px;font-size:14.1px;line-height:18px;color:#1f2430;letter-spacing:0.200px;-webkit-text-stroke:0.15px #1f2430;">(3,770)</div>
<div class="t" style="left:2420.98px;top:800.41px;font-size:14.1px;line-height:18px;color:#1f2430;letter-spacing:0.200px;-webkit-text-stroke:0.15px #1f2430;">(3,780)</div>
<div class="t" style="left:2539.99px;top:800.41px;font-size:14.1px;line-height:18px;color:#1f2430;letter-spacing:0.200px;-webkit-text-stroke:0.15px #1f2430;">(3,791)</div>
<div class="t" style="left:2659.00px;top:800.41px;font-size:14.1px;line-height:18px;color:#1f2430;letter-spacing:0.200px;-webkit-text-stroke:0.15px #1f2430;">(3,801)</div>
<div class="t" style="left:2778.01px;top:800.41px;font-size:14.1px;line-height:18px;color:#1f2430;letter-spacing:0.200px;-webkit-text-stroke:0.15px #1f2430;">(3,812)</div>
<div class="t" style="left:862.66px;top:819.91px;font-size:14.1px;line-height:18px;color:#1f2430;letter-spacing:0.200px;-webkit-text-stroke:0.15px #1f2430;">700,000</div>
<div class="t" style="left:1028.97px;top:819.91px;font-size:14.1px;line-height:18px;color:#1f2430;-webkit-text-stroke:0.15px #1f2430;">-</div>
<div class="t" style="left:1147.98px;top:819.91px;font-size:14.1px;line-height:18px;color:#1f2430;-webkit-text-stroke:0.15px #1f2430;">-</div>
<div class="t" style="left:1266.99px;top:819.91px;font-size:14.1px;line-height:18px;color:#1f2430;-webkit-text-stroke:0.15px #1f2430;">-</div>
<div class="t" style="left:1386.00px;top:819.91px;font-size:14.1px;line-height:18px;color:#1f2430;-webkit-text-stroke:0.15px #1f2430;">-</div>
<div class="t" style="left:1505.01px;top:819.91px;font-size:14.1px;line-height:18px;color:#1f2430;-webkit-text-stroke:0.15px #1f2430;">-</div>
<div class="t" style="left:1624.02px;top:819.91px;font-size:14.1px;line-height:18px;color:#1f2430;-webkit-text-stroke:0.15px #1f2430;">-</div>
<div class="t" style="left:1743.03px;top:819.91px;font-size:14.1px;line-height:18px;color:#1f2430;-webkit-text-stroke:0.15px #1f2430;">-</div>
<div class="t" style="left:1862.04px;top:819.91px;font-size:14.1px;line-height:18px;color:#1f2430;-webkit-text-stroke:0.15px #1f2430;">-</div>
<div class="t" style="left:1981.05px;top:819.91px;font-size:14.1px;line-height:18px;color:#1f2430;-webkit-text-stroke:0.15px #1f2430;">-</div>
<div class="t" style="left:2100.06px;top:819.91px;font-size:14.1px;line-height:18px;color:#1f2430;-webkit-text-stroke:0.15px #1f2430;">-</div>
<div class="t" style="left:2219.07px;top:819.91px;font-size:14.1px;line-height:18px;color:#1f2430;-webkit-text-stroke:0.15px #1f2430;">-</div>
<div class="t" style="left:2338.08px;top:819.91px;font-size:14.1px;line-height:18px;color:#1f2430;-webkit-text-stroke:0.15px #1f2430;">-</div>
<div class="t" style="left:2457.09px;top:819.91px;font-size:14.1px;line-height:18px;color:#1f2430;-webkit-text-stroke:0.15px #1f2430;">-</div>
<div class="t" style="left:2576.10px;top:819.91px;font-size:14.1px;line-height:18px;color:#1f2430;-webkit-text-stroke:0.15px #1f2430;">-</div>
<div class="t" style="left:2695.11px;top:819.91px;font-size:14.1px;line-height:18px;color:#1f2430;-webkit-text-stroke:0.15px #1f2430;">-</div>
<div class="t" style="left:2814.12px;top:819.91px;font-size:14.1px;line-height:18px;color:#1f2430;-webkit-text-stroke:0.15px #1f2430;">-</div>
<div class="t" style="left:909.96px;top:840.21px;font-size:14.1px;line-height:18px;color:#1f2430;-webkit-text-stroke:0.15px #1f2430;">-</div>
<div class="t" style="left:1028.97px;top:840.21px;font-size:14.1px;line-height:18px;color:#1f2430;-webkit-text-stroke:0.15px #1f2430;">-</div>
<div class="t" style="left:1147.98px;top:840.21px;font-size:14.1px;line-height:18px;color:#1f2430;-webkit-text-stroke:0.15px #1f2430;">-</div>
<div class="t" style="left:1266.99px;top:840.21px;font-size:14.1px;line-height:18px;color:#1f2430;-webkit-text-stroke:0.15px #1f2430;">-</div>
<div class="t" style="left:1386.00px;top:840.21px;font-size:14.1px;line-height:18px;color:#1f2430;-webkit-text-stroke:0.15px #1f2430;">-</div>
<div class="t" style="left:1505.01px;top:840.21px;font-size:14.1px;line-height:18px;color:#1f2430;-webkit-text-stroke:0.15px #1f2430;">-</div>
<div class="t" style="left:1624.02px;top:840.21px;font-size:14.1px;line-height:18px;color:#1f2430;-webkit-text-stroke:0.15px #1f2430;">-</div>
<div class="t" style="left:1743.03px;top:840.21px;font-size:14.1px;line-height:18px;color:#1f2430;-webkit-text-stroke:0.15px #1f2430;">-</div>
<div class="t" style="left:1862.04px;top:840.21px;font-size:14.1px;line-height:18px;color:#1f2430;-webkit-text-stroke:0.15px #1f2430;">-</div>
<div class="t" style="left:1981.05px;top:840.21px;font-size:14.1px;line-height:18px;color:#1f2430;-webkit-text-stroke:0.15px #1f2430;">-</div>
<div class="t" style="left:2100.06px;top:840.21px;font-size:14.1px;line-height:18px;color:#1f2430;-webkit-text-stroke:0.15px #1f2430;">-</div>
<div class="t" style="left:2219.07px;top:840.21px;font-size:14.1px;line-height:18px;color:#1f2430;-webkit-text-stroke:0.15px #1f2430;">-</div>
<div class="t" style="left:2338.08px;top:840.21px;font-size:14.1px;line-height:18px;color:#1f2430;-webkit-text-stroke:0.15px #1f2430;">-</div>
<div class="t" style="left:2457.09px;top:840.21px;font-size:14.1px;line-height:18px;color:#1f2430;-webkit-text-stroke:0.15px #1f2430;">-</div>
<div class="t" style="left:2576.10px;top:840.21px;font-size:14.1px;line-height:18px;color:#1f2430;-webkit-text-stroke:0.15px #1f2430;">-</div>
<div class="t" style="left:2695.11px;top:840.21px;font-size:14.1px;line-height:18px;color:#1f2430;-webkit-text-stroke:0.15px #1f2430;">-</div>
<div class="t" style="left:2814.12px;top:840.21px;font-size:14.1px;line-height:18px;color:#1f2430;-webkit-text-stroke:0.15px #1f2430;">-</div>
<div class="t" style="left:909.96px;top:860.51px;font-size:14.1px;line-height:18px;color:#1f2430;-webkit-text-stroke:0.15px #1f2430;">-</div>
<div class="t" style="left:1028.97px;top:860.51px;font-size:14.1px;line-height:18px;color:#1f2430;-webkit-text-stroke:0.15px #1f2430;">-</div>
<div class="t" style="left:1147.98px;top:860.51px;font-size:14.1px;line-height:18px;color:#1f2430;-webkit-text-stroke:0.15px #1f2430;">-</div>
<div class="t" style="left:1266.99px;top:860.51px;font-size:14.1px;line-height:18px;color:#1f2430;-webkit-text-stroke:0.15px #1f2430;">-</div>
<div class="t" style="left:1386.00px;top:860.51px;font-size:14.1px;line-height:18px;color:#1f2430;-webkit-text-stroke:0.15px #1f2430;">-</div>
<div class="t" style="left:1505.01px;top:860.51px;font-size:14.1px;line-height:18px;color:#1f2430;-webkit-text-stroke:0.15px #1f2430;">-</div>
<div class="t" style="left:1624.02px;top:860.51px;font-size:14.1px;line-height:18px;color:#1f2430;-webkit-text-stroke:0.15px #1f2430;">-</div>
<div class="t" style="left:1743.03px;top:860.51px;font-size:14.1px;line-height:18px;color:#1f2430;-webkit-text-stroke:0.15px #1f2430;">-</div>
<div class="t" style="left:1862.04px;top:860.51px;font-size:14.1px;line-height:18px;color:#1f2430;-webkit-text-stroke:0.15px #1f2430;">-</div>
<div class="t" style="left:1981.05px;top:860.51px;font-size:14.1px;line-height:18px;color:#1f2430;-webkit-text-stroke:0.15px #1f2430;">-</div>
<div class="t" style="left:2100.06px;top:860.51px;font-size:14.1px;line-height:18px;color:#1f2430;-webkit-text-stroke:0.15px #1f2430;">-</div>
<div class="t" style="left:2219.07px;top:860.51px;font-size:14.1px;line-height:18px;color:#1f2430;-webkit-text-stroke:0.15px #1f2430;">-</div>
<div class="t" style="left:2338.08px;top:860.51px;font-size:14.1px;line-height:18px;color:#1f2430;-webkit-text-stroke:0.15px #1f2430;">-</div>
<div class="t" style="left:2457.09px;top:860.51px;font-size:14.1px;line-height:18px;color:#1f2430;-webkit-text-stroke:0.15px #1f2430;">-</div>
<div class="t" style="left:2576.10px;top:860.51px;font-size:14.1px;line-height:18px;color:#1f2430;-webkit-text-stroke:0.15px #1f2430;">-</div>
<div class="t" style="left:2695.11px;top:860.51px;font-size:14.1px;line-height:18px;color:#1f2430;-webkit-text-stroke:0.15px #1f2430;">-</div>
<div class="t" style="left:2814.12px;top:860.51px;font-size:14.1px;line-height:18px;color:#1f2430;-webkit-text-stroke:0.15px #1f2430;">-</div>
<div class="t" style="left:848.41px;top:878.62px;font-size:18.0px;line-height:22px;color:#fff;font-family:'Liberation Serif';font-weight:700;letter-spacing:0.850px;-webkit-text-stroke:0.35px #fff;">900,000</div>
<div class="t" style="left:1024.32px;top:878.62px;font-size:18.0px;line-height:22px;color:#fff;font-family:'Liberation Serif';font-weight:700;-webkit-text-stroke:0.35px #fff;">-</div>
<div class="t" style="left:1096.28px;top:878.62px;font-size:18.0px;line-height:22px;color:#fff;font-family:'Liberation Serif';font-weight:700;letter-spacing:0.850px;-webkit-text-stroke:0.35px #fff;">98,333</div>
<div class="t" style="left:1218.14px;top:878.62px;font-size:18.0px;line-height:22px;color:#fff;font-family:'Liberation Serif';font-weight:700;letter-spacing:0.850px;-webkit-text-stroke:0.35px #fff;">(1,667)</div>
<div class="t" style="left:1337.15px;top:878.62px;font-size:18.0px;line-height:22px;color:#fff;font-family:'Liberation Serif';font-weight:700;letter-spacing:0.850px;-webkit-text-stroke:0.35px #fff;">(1,667)</div>
<div class="t" style="left:1456.16px;top:878.62px;font-size:18.0px;line-height:22px;color:#fff;font-family:'Liberation Serif';font-weight:700;letter-spacing:0.850px;-webkit-text-stroke:0.35px #fff;">(1,667)</div>
<div class="t" style="left:1575.17px;top:878.62px;font-size:18.0px;line-height:22px;color:#fff;font-family:'Liberation Serif';font-weight:700;letter-spacing:0.850px;-webkit-text-stroke:0.35px #fff;">(1,667)</div>
<div class="t" style="left:1694.18px;top:878.62px;font-size:18.0px;line-height:22px;color:#fff;font-family:'Liberation Serif';font-weight:700;letter-spacing:0.850px;-webkit-text-stroke:0.35px #fff;">(1,667)</div>
<div class="t" style="left:1813.19px;top:878.62px;font-size:18.0px;line-height:22px;color:#fff;font-family:'Liberation Serif';font-weight:700;letter-spacing:0.850px;-webkit-text-stroke:0.35px #fff;">(1,667)</div>
<div class="t" style="left:1932.20px;top:878.62px;font-size:18.0px;line-height:22px;color:#fff;font-family:'Liberation Serif';font-weight:700;letter-spacing:0.850px;-webkit-text-stroke:0.35px #fff;">(1,667)</div>
<div class="t" style="left:2051.21px;top:878.62px;font-size:18.0px;line-height:22px;color:#fff;font-family:'Liberation Serif';font-weight:700;letter-spacing:0.850px;-webkit-text-stroke:0.35px #fff;">(1,667)</div>
<div class="t" style="left:2170.22px;top:878.62px;font-size:18.0px;line-height:22px;color:#fff;font-family:'Liberation Serif';font-weight:700;letter-spacing:0.850px;-webkit-text-stroke:0.35px #fff;">(1,667)</div>
<div class="t" style="left:2289.23px;top:878.62px;font-size:18.0px;line-height:22px;color:#fff;font-family:'Liberation Serif';font-weight:700;letter-spacing:0.850px;-webkit-text-stroke:0.35px #fff;">(3,770)</div>
<div class="t" style="left:2408.24px;top:878.62px;font-size:18.0px;line-height:22px;color:#fff;font-family:'Liberation Serif';font-weight:700;letter-spacing:0.850px;-webkit-text-stroke:0.35px #fff;">(3,780)</div>
<div class="t" style="left:2527.25px;top:878.62px;font-size:18.0px;line-height:22px;color:#fff;font-family:'Liberation Serif';font-weight:700;letter-spacing:0.850px;-webkit-text-stroke:0.35px #fff;">(3,791)</div>
<div class="t" style="left:2646.26px;top:878.62px;font-size:18.0px;line-height:22px;color:#fff;font-family:'Liberation Serif';font-weight:700;letter-spacing:0.850px;-webkit-text-stroke:0.35px #fff;">(3,801)</div>
<div class="t" style="left:2765.27px;top:878.62px;font-size:18.0px;line-height:22px;color:#fff;font-family:'Liberation Serif';font-weight:700;letter-spacing:0.850px;-webkit-text-stroke:0.35px #fff;">(3,812)</div>
<div class="t" style="left:848.41px;top:915.12px;font-size:18.0px;line-height:22px;color:#fff;font-family:'Liberation Serif';font-weight:700;letter-spacing:0.850px;-webkit-text-stroke:0.35px #fff;">861,033</div>
<div class="t" style="left:970.27px;top:915.12px;font-size:18.0px;line-height:22px;color:#fff;font-family:'Liberation Serif';font-weight:700;letter-spacing:0.850px;-webkit-text-stroke:0.35px #fff;">(19,891)</div>
<div class="t" style="left:1096.28px;top:915.12px;font-size:18.0px;line-height:22px;color:#fff;font-family:'Liberation Serif';font-weight:700;letter-spacing:0.850px;-webkit-text-stroke:0.35px #fff;">68,434</div>
<div class="t" style="left:1218.14px;top:915.12px;font-size:18.0px;line-height:22px;color:#fff;font-family:'Liberation Serif';font-weight:700;letter-spacing:0.850px;-webkit-text-stroke:0.35px #fff;">(9,831)</div>
<div class="t" style="left:1337.15px;top:915.12px;font-size:18.0px;line-height:22px;color:#fff;font-family:'Liberation Serif';font-weight:700;letter-spacing:0.850px;-webkit-text-stroke:0.35px #fff;">(9,926)</div>
<div class="t" style="left:1456.16px;top:915.12px;font-size:18.0px;line-height:22px;color:#fff;font-family:'Liberation Serif';font-weight:700;letter-spacing:0.850px;-webkit-text-stroke:0.35px #fff;">(9,809)</div>
<div class="t" style="left:1575.17px;top:915.12px;font-size:18.0px;line-height:22px;color:#fff;font-family:'Liberation Serif';font-weight:700;letter-spacing:0.850px;-webkit-text-stroke:0.35px #fff;">(9,904)</div>
<div class="t" style="left:1694.18px;top:915.12px;font-size:18.0px;line-height:22px;color:#fff;font-family:'Liberation Serif';font-weight:700;letter-spacing:0.850px;-webkit-text-stroke:0.35px #fff;">(9,840)</div>
<div class="t" style="left:1813.19px;top:915.12px;font-size:18.0px;line-height:22px;color:#fff;font-family:'Liberation Serif';font-weight:700;letter-spacing:0.850px;-webkit-text-stroke:0.35px #fff;">(9,775)</div>
<div class="t" style="left:1932.20px;top:915.12px;font-size:18.0px;line-height:22px;color:#fff;font-family:'Liberation Serif';font-weight:700;letter-spacing:0.850px;-webkit-text-stroke:0.35px #fff;">(9,871)</div>
<div class="t" style="left:2051.21px;top:915.12px;font-size:18.0px;line-height:22px;color:#fff;font-family:'Liberation Serif';font-weight:700;letter-spacing:0.850px;-webkit-text-stroke:0.35px #fff;">(9,753)</div>
<div class="t" style="left:2170.22px;top:915.12px;font-size:18.0px;line-height:22px;color:#fff;font-family:'Liberation Serif';font-weight:700;letter-spacing:0.850px;-webkit-text-stroke:0.35px #fff;">(9,848)</div>
<div class="t" style="left:2289.23px;top:915.12px;font-size:18.0px;line-height:22px;color:#fff;font-family:'Liberation Serif';font-weight:700;letter-spacing:0.850px;-webkit-text-stroke:0.35px #fff;">(8,032)</div>
<div class="t" style="left:2408.24px;top:915.12px;font-size:18.0px;line-height:22px;color:#fff;font-family:'Liberation Serif';font-weight:700;letter-spacing:0.850px;-webkit-text-stroke:0.35px #fff;">(2,232)</div>
<div class="t" style="left:2527.25px;top:915.12px;font-size:18.0px;line-height:22px;color:#fff;font-family:'Liberation Serif';font-weight:700;letter-spacing:0.850px;-webkit-text-stroke:0.35px #fff;">(1,219)</div>
<div class="t" style="left:2646.26px;top:915.12px;font-size:18.0px;line-height:22px;color:#fff;font-family:'Liberation Serif';font-weight:700;letter-spacing:0.850px;-webkit-text-stroke:0.35px #fff;">(1,874)</div>
<div class="t" style="left:2765.27px;top:915.12px;font-size:18.0px;line-height:22px;color:#fff;font-family:'Liberation Serif';font-weight:700;letter-spacing:0.850px;-webkit-text-stroke:0.35px #fff;">(1,554)</div>
<div class="t" style="left:866.39px;top:1031.89px;font-size:15.6px;line-height:20px;color:#1f2430;letter-spacing:0.400px;-webkit-text-stroke:0.15px #1f2430;">(7,562)</div>
<div class="t" style="left:985.40px;top:1031.89px;font-size:15.6px;line-height:20px;color:#1f2430;letter-spacing:0.400px;-webkit-text-stroke:0.15px #1f2430;">(7,562)</div>
<div class="t" style="left:1104.41px;top:1031.89px;font-size:15.6px;line-height:20px;color:#1f2430;letter-spacing:0.400px;-webkit-text-stroke:0.15px #1f2430;">(8,229)</div>
<div class="t" style="left:1223.42px;top:1031.89px;font-size:15.6px;line-height:20px;color:#1f2430;letter-spacing:0.400px;-webkit-text-stroke:0.15px #1f2430;">(8,218)</div>
<div class="t" style="left:1342.43px;top:1031.89px;font-size:15.6px;line-height:20px;color:#1f2430;letter-spacing:0.400px;-webkit-text-stroke:0.15px #1f2430;">(8,206)</div>
<div class="t" style="left:1461.44px;top:1031.89px;font-size:15.6px;line-height:20px;color:#1f2430;letter-spacing:0.400px;-webkit-text-stroke:0.15px #1f2430;">(8,195)</div>
<div class="t" style="left:1580.45px;top:1031.89px;font-size:15.6px;line-height:20px;color:#1f2430;letter-spacing:0.400px;-webkit-text-stroke:0.15px #1f2430;">(8,184)</div>
<div class="t" style="left:1699.46px;top:1031.89px;font-size:15.6px;line-height:20px;color:#1f2430;letter-spacing:0.400px;-webkit-text-stroke:0.15px #1f2430;">(8,173)</div>
<div class="t" style="left:1818.47px;top:1031.89px;font-size:15.6px;line-height:20px;color:#1f2430;letter-spacing:0.400px;-webkit-text-stroke:0.15px #1f2430;">(8,162)</div>
<div class="t" style="left:1937.48px;top:1031.89px;font-size:15.6px;line-height:20px;color:#1f2430;letter-spacing:0.400px;-webkit-text-stroke:0.15px #1f2430;">(8,151)</div>
<div class="t" style="left:2056.49px;top:1031.89px;font-size:15.6px;line-height:20px;color:#1f2430;letter-spacing:0.400px;-webkit-text-stroke:0.15px #1f2430;">(8,140)</div>
<div class="t" style="left:2175.50px;top:1031.89px;font-size:15.6px;line-height:20px;color:#1f2430;letter-spacing:0.400px;-webkit-text-stroke:0.15px #1f2430;">(8,129)</div>
<div class="t" style="left:2299.50px;top:1031.89px;font-size:15.6px;line-height:20px;color:#1f2430;letter-spacing:0.400px;-webkit-text-stroke:0.15px #1f2430;">2,036</div>
<div class="t" style="left:2418.51px;top:1031.89px;font-size:15.6px;line-height:20px;color:#1f2430;letter-spacing:0.400px;-webkit-text-stroke:0.15px #1f2430;">2,052</div>
<div class="t" style="left:2537.52px;top:1031.89px;font-size:15.6px;line-height:20px;color:#1f2430;letter-spacing:0.400px;-webkit-text-stroke:0.15px #1f2430;">2,068</div>
<div class="t" style="left:2656.53px;top:1031.89px;font-size:15.6px;line-height:20px;color:#1f2430;letter-spacing:0.400px;-webkit-text-stroke:0.15px #1f2430;">2,084</div>
<div class="t" style="left:2775.54px;top:1031.89px;font-size:15.6px;line-height:20px;color:#1f2430;letter-spacing:0.400px;-webkit-text-stroke:0.15px #1f2430;">2,101</div>
<div class="t" style="left:871.38px;top:1051.79px;font-size:15.6px;line-height:20px;color:#1f2430;letter-spacing:0.400px;-webkit-text-stroke:0.15px #1f2430;">1,595</div>
<div class="t" style="left:1004.19px;top:1051.79px;font-size:15.6px;line-height:20px;color:#1f2430;letter-spacing:0.400px;-webkit-text-stroke:0.15px #1f2430;">171</div>
<div class="t" style="left:1118.22px;top:1051.79px;font-size:15.6px;line-height:20px;color:#1f2430;letter-spacing:0.400px;-webkit-text-stroke:0.15px #1f2430;">(171)</div>
<div class="t" style="left:1251.28px;top:1051.79px;font-size:15.6px;line-height:20px;color:#1f2430;letter-spacing:0.400px;-webkit-text-stroke:0.15px #1f2430;">53</div>
<div class="t" style="left:1365.32px;top:1051.79px;font-size:15.6px;line-height:20px;color:#1f2430;letter-spacing:0.400px;-webkit-text-stroke:0.15px #1f2430;">(53)</div>
<div class="t" style="left:1489.30px;top:1051.79px;font-size:15.6px;line-height:20px;color:#1f2430;letter-spacing:0.400px;-webkit-text-stroke:0.15px #1f2430;">53</div>
<div class="t" style="left:1603.34px;top:1051.79px;font-size:15.6px;line-height:20px;color:#1f2430;letter-spacing:0.400px;-webkit-text-stroke:0.15px #1f2430;">(53)</div>
<div class="t" style="left:1740.48px;top:1051.79px;font-size:15.6px;line-height:20px;color:#1f2430;-webkit-text-stroke:0.15px #1f2430;">-</div>
<div class="t" style="left:1846.33px;top:1051.79px;font-size:15.6px;line-height:20px;color:#1f2430;letter-spacing:0.400px;-webkit-text-stroke:0.15px #1f2430;">53</div>
<div class="t" style="left:1960.37px;top:1051.79px;font-size:15.6px;line-height:20px;color:#1f2430;letter-spacing:0.400px;-webkit-text-stroke:0.15px #1f2430;">(53)</div>
<div class="t" style="left:2084.35px;top:1051.79px;font-size:15.6px;line-height:20px;color:#1f2430;letter-spacing:0.400px;-webkit-text-stroke:0.15px #1f2430;">53</div>
<div class="t" style="left:2198.39px;top:1051.79px;font-size:15.6px;line-height:20px;color:#1f2430;letter-spacing:0.400px;-webkit-text-stroke:0.15px #1f2430;">(53)</div>
<div class="t" style="left:2294.51px;top:1051.79px;font-size:15.6px;line-height:20px;color:#1f2430;letter-spacing:0.400px;-webkit-text-stroke:0.15px #1f2430;">(6,298)</div>
<div class="t" style="left:2427.33px;top:1051.79px;font-size:15.6px;line-height:20px;color:#1f2430;letter-spacing:0.400px;-webkit-text-stroke:0.15px #1f2430;">(504)</div>
<div class="t" style="left:2551.32px;top:1051.79px;font-size:15.6px;line-height:20px;color:#1f2430;letter-spacing:0.400px;-webkit-text-stroke:0.15px #1f2430;">504</div>
<div class="t" style="left:2665.35px;top:1051.79px;font-size:15.6px;line-height:20px;color:#1f2430;letter-spacing:0.400px;-webkit-text-stroke:0.15px #1f2430;">(157)</div>
<div class="t" style="left:2789.34px;top:1051.79px;font-size:15.6px;line-height:20px;color:#1f2430;letter-spacing:0.400px;-webkit-text-stroke:0.15px #1f2430;">157</div>
<div class="t" style="left:861.11px;top:1071.02px;font-size:18.0px;line-height:22px;color:#fff;font-family:'Liberation Serif';font-weight:700;letter-spacing:0.850px;-webkit-text-stroke:0.35px #fff;">(5,967)</div>
<div class="t" style="left:980.12px;top:1071.02px;font-size:18.0px;line-height:22px;color:#fff;font-family:'Liberation Serif';font-weight:700;letter-spacing:0.850px;-webkit-text-stroke:0.35px #fff;">(7,391)</div>
<div class="t" style="left:1099.13px;top:1071.02px;font-size:18.0px;line-height:22px;color:#fff;font-family:'Liberation Serif';font-weight:700;letter-spacing:0.850px;-webkit-text-stroke:0.35px #fff;">(8,399)</div>
<div class="t" style="left:1218.14px;top:1071.02px;font-size:18.0px;line-height:22px;color:#fff;font-family:'Liberation Serif';font-weight:700;letter-spacing:0.850px;-webkit-text-stroke:0.35px #fff;">(8,164)</div>
<div class="t" style="left:1337.15px;top:1071.02px;font-size:18.0px;line-height:22px;color:#fff;font-family:'Liberation Serif';font-weight:700;letter-spacing:0.850px;-webkit-text-stroke:0.35px #fff;">(8,260)</div>
<div class="t" style="left:1456.16px;top:1071.02px;font-size:18.0px;line-height:22px;color:#fff;font-family:'Liberation Serif';font-weight:700;letter-spacing:0.850px;-webkit-text-stroke:0.35px #fff;">(8,142)</div>
<div class="t" style="left:1575.17px;top:1071.02px;font-size:18.0px;line-height:22px;color:#fff;font-family:'Liberation Serif';font-weight:700;letter-spacing:0.850px;-webkit-text-stroke:0.35px #fff;">(8,237)</div>
<div class="t" style="left:1694.18px;top:1071.02px;font-size:18.0px;line-height:22px;color:#fff;font-family:'Liberation Serif';font-weight:700;letter-spacing:0.850px;-webkit-text-stroke:0.35px #fff;">(8,173)</div>
<div class="t" style="left:1813.19px;top:1071.02px;font-size:18.0px;line-height:22px;color:#fff;font-family:'Liberation Serif';font-weight:700;letter-spacing:0.850px;-webkit-text-stroke:0.35px #fff;">(8,109)</div>
<div class="t" style="left:1932.20px;top:1071.02px;font-size:18.0px;line-height:22px;color:#fff;font-family:'Liberation Serif';font-weight:700;letter-spacing:0.850px;-webkit-text-stroke:0.35px #fff;">(8,204)</div>
<div class="t" style="left:2051.21px;top:1071.02px;font-size:18.0px;line-height:22px;color:#fff;font-family:'Liberation Serif';font-weight:700;letter-spacing:0.850px;-webkit-text-stroke:0.35px #fff;">(8,087)</div>
<div class="t" style="left:2170.22px;top:1071.02px;font-size:18.0px;line-height:22px;color:#fff;font-family:'Liberation Serif';font-weight:700;letter-spacing:0.850px;-webkit-text-stroke:0.35px #fff;">(8,182)</div>
<div class="t" style="left:2289.23px;top:1071.02px;font-size:18.0px;line-height:22px;color:#fff;font-family:'Liberation Serif';font-weight:700;letter-spacing:0.850px;-webkit-text-stroke:0.35px #fff;">(4,263)</div>
<div class="t" style="left:2415.24px;top:1071.02px;font-size:18.0px;line-height:22px;color:#fff;font-family:'Liberation Serif';font-weight:700;letter-spacing:0.850px;-webkit-text-stroke:0.35px #fff;">1,548</div>
<div class="t" style="left:2534.25px;top:1071.02px;font-size:18.0px;line-height:22px;color:#fff;font-family:'Liberation Serif';font-weight:700;letter-spacing:0.850px;-webkit-text-stroke:0.35px #fff;">2,572</div>
<div class="t" style="left:2653.26px;top:1071.02px;font-size:18.0px;line-height:22px;color:#fff;font-family:'Liberation Serif';font-weight:700;letter-spacing:0.850px;-webkit-text-stroke:0.35px #fff;">1,928</div>
<div class="t" style="left:2772.27px;top:1071.02px;font-size:18.0px;line-height:22px;color:#fff;font-family:'Liberation Serif';font-weight:700;letter-spacing:0.850px;-webkit-text-stroke:0.35px #fff;">2,257</div>
<div class="t" style="left:857.32px;top:1138.29px;font-size:15.6px;line-height:20px;color:#1f2430;letter-spacing:0.400px;-webkit-text-stroke:0.15px #1f2430;">(33,000)</div>
<div class="t" style="left:976.33px;top:1138.29px;font-size:15.6px;line-height:20px;color:#1f2430;letter-spacing:0.400px;-webkit-text-stroke:0.15px #1f2430;">(12,500)</div>
<div class="t" style="left:1095.34px;top:1138.29px;font-size:15.6px;line-height:20px;color:#1f2430;letter-spacing:0.400px;-webkit-text-stroke:0.15px #1f2430;">(21,500)</div>
<div class="t" style="left:1264.44px;top:1138.29px;font-size:15.6px;line-height:20px;color:#1f2430;-webkit-text-stroke:0.15px #1f2430;">-</div>
<div class="t" style="left:1383.45px;top:1138.29px;font-size:15.6px;line-height:20px;color:#1f2430;-webkit-text-stroke:0.15px #1f2430;">-</div>
<div class="t" style="left:1502.46px;top:1138.29px;font-size:15.6px;line-height:20px;color:#1f2430;-webkit-text-stroke:0.15px #1f2430;">-</div>
<div class="t" style="left:1621.47px;top:1138.29px;font-size:15.6px;line-height:20px;color:#1f2430;-webkit-text-stroke:0.15px #1f2430;">-</div>
<div class="t" style="left:1740.48px;top:1138.29px;font-size:15.6px;line-height:20px;color:#1f2430;-webkit-text-stroke:0.15px #1f2430;">-</div>
<div class="t" style="left:1859.49px;top:1138.29px;font-size:15.6px;line-height:20px;color:#1f2430;-webkit-text-stroke:0.15px #1f2430;">-</div>
<div class="t" style="left:1978.50px;top:1138.29px;font-size:15.6px;line-height:20px;color:#1f2430;-webkit-text-stroke:0.15px #1f2430;">-</div>
<div class="t" style="left:2097.51px;top:1138.29px;font-size:15.6px;line-height:20px;color:#1f2430;-webkit-text-stroke:0.15px #1f2430;">-</div>
<div class="t" style="left:2216.52px;top:1138.29px;font-size:15.6px;line-height:20px;color:#1f2430;-webkit-text-stroke:0.15px #1f2430;">-</div>
<div class="t" style="left:2335.53px;top:1138.29px;font-size:15.6px;line-height:20px;color:#1f2430;-webkit-text-stroke:0.15px #1f2430;">-</div>
<div class="t" style="left:2454.54px;top:1138.29px;font-size:15.6px;line-height:20px;color:#1f2430;-webkit-text-stroke:0.15px #1f2430;">-</div>
<div class="t" style="left:2573.55px;top:1138.29px;font-size:15.6px;line-height:20px;color:#1f2430;-webkit-text-stroke:0.15px #1f2430;">-</div>
<div class="t" style="left:2692.56px;top:1138.29px;font-size:15.6px;line-height:20px;color:#1f2430;-webkit-text-stroke:0.15px #1f2430;">-</div>
<div class="t" style="left:2811.57px;top:1138.29px;font-size:15.6px;line-height:20px;color:#1f2430;-webkit-text-stroke:0.15px #1f2430;">-</div>
<div class="t" style="left:851.26px;top:1157.12px;font-size:18.0px;line-height:22px;color:#fff;font-family:'Liberation Serif';font-weight:700;letter-spacing:0.850px;-webkit-text-stroke:0.35px #fff;">(33,000)</div>
<div class="t" style="left:970.27px;top:1157.12px;font-size:18.0px;line-height:22px;color:#fff;font-family:'Liberation Serif';font-weight:700;letter-spacing:0.850px;-webkit-text-stroke:0.35px #fff;">(12,500)</div>
<div class="t" style="left:1089.28px;top:1157.12px;font-size:18.0px;line-height:22px;color:#fff;font-family:'Liberation Serif';font-weight:700;letter-spacing:0.850px;-webkit-text-stroke:0.35px #fff;">(21,500)</div>
<div class="t" style="left:1262.34px;top:1157.12px;font-size:18.0px;line-height:22px;color:#fff;font-family:'Liberation Serif';font-weight:700;-webkit-text-stroke:0.35px #fff;">-</div>
<div class="t" style="left:1381.35px;top:1157.12px;font-size:18.0px;line-height:22px;color:#fff;font-family:'Liberation Serif';font-weight:700;-webkit-text-stroke:0.35px #fff;">-</div>
<div class="t" style="left:1500.36px;top:1157.12px;font-size:18.0px;line-height:22px;color:#fff;font-family:'Liberation Serif';font-weight:700;-webkit-text-stroke:0.35px #fff;">-</div>
<div class="t" style="left:1619.37px;top:1157.12px;font-size:18.0px;line-height:22px;color:#fff;font-family:'Liberation Serif';font-weight:700;-webkit-text-stroke:0.35px #fff;">-</div>
<div class="t" style="left:1738.38px;top:1157.12px;font-size:18.0px;line-height:22px;color:#fff;font-family:'Liberation Serif';font-weight:700;-webkit-text-stroke:0.35px #fff;">-</div>
<div class="t" style="left:1857.39px;top:1157.12px;font-size:18.0px;line-height:22px;color:#fff;font-family:'Liberation Serif';font-weight:700;-webkit-text-stroke:0.35px #fff;">-</div>
<div class="t" style="left:1976.40px;top:1157.12px;font-size:18.0px;line-height:22px;color:#fff;font-family:'Liberation Serif';font-weight:700;-webkit-text-stroke:0.35px #fff;">-</div>
<div class="t" style="left:2095.41px;top:1157.12px;font-size:18.0px;line-height:22px;color:#fff;font-family:'Liberation Serif';font-weight:700;-webkit-text-stroke:0.35px #fff;">-</div>
<div class="t" style="left:2214.42px;top:1157.12px;font-size:18.0px;line-height:22px;color:#fff;font-family:'Liberation Serif';font-weight:700;-webkit-text-stroke:0.35px #fff;">-</div>
<div class="t" style="left:2333.43px;top:1157.12px;font-size:18.0px;line-height:22px;color:#fff;font-family:'Liberation Serif';font-weight:700;-webkit-text-stroke:0.35px #fff;">-</div>
<div class="t" style="left:2452.44px;top:1157.12px;font-size:18.0px;line-height:22px;color:#fff;font-family:'Liberation Serif';font-weight:700;-webkit-text-stroke:0.35px #fff;">-</div>
<div class="t" style="left:2571.45px;top:1157.12px;font-size:18.0px;line-height:22px;color:#fff;font-family:'Liberation Serif';font-weight:700;-webkit-text-stroke:0.35px #fff;">-</div>
<div class="t" style="left:2690.46px;top:1157.12px;font-size:18.0px;line-height:22px;color:#fff;font-family:'Liberation Serif';font-weight:700;-webkit-text-stroke:0.35px #fff;">-</div>
<div class="t" style="left:2809.47px;top:1157.12px;font-size:18.0px;line-height:22px;color:#fff;font-family:'Liberation Serif';font-weight:700;-webkit-text-stroke:0.35px #fff;">-</div>
<div class="t" style="left:853.24px;top:1224.39px;font-size:15.6px;line-height:20px;color:#1f2430;letter-spacing:0.400px;-webkit-text-stroke:0.15px #1f2430;">700,000</div>
<div class="t" style="left:1026.42px;top:1224.39px;font-size:15.6px;line-height:20px;color:#1f2430;-webkit-text-stroke:0.15px #1f2430;">-</div>
<div class="t" style="left:1145.43px;top:1224.39px;font-size:15.6px;line-height:20px;color:#1f2430;-webkit-text-stroke:0.15px #1f2430;">-</div>
<div class="t" style="left:1264.44px;top:1224.39px;font-size:15.6px;line-height:20px;color:#1f2430;-webkit-text-stroke:0.15px #1f2430;">-</div>
<div class="t" style="left:1383.45px;top:1224.39px;font-size:15.6px;line-height:20px;color:#1f2430;-webkit-text-stroke:0.15px #1f2430;">-</div>
<div class="t" style="left:1502.46px;top:1224.39px;font-size:15.6px;line-height:20px;color:#1f2430;-webkit-text-stroke:0.15px #1f2430;">-</div>
<div class="t" style="left:1621.47px;top:1224.39px;font-size:15.6px;line-height:20px;color:#1f2430;-webkit-text-stroke:0.15px #1f2430;">-</div>
<div class="t" style="left:1740.48px;top:1224.39px;font-size:15.6px;line-height:20px;color:#1f2430;-webkit-text-stroke:0.15px #1f2430;">-</div>
<div class="t" style="left:1859.49px;top:1224.39px;font-size:15.6px;line-height:20px;color:#1f2430;-webkit-text-stroke:0.15px #1f2430;">-</div>
<div class="t" style="left:1978.50px;top:1224.39px;font-size:15.6px;line-height:20px;color:#1f2430;-webkit-text-stroke:0.15px #1f2430;">-</div>
<div class="t" style="left:2097.51px;top:1224.39px;font-size:15.6px;line-height:20px;color:#1f2430;-webkit-text-stroke:0.15px #1f2430;">-</div>
<div class="t" style="left:2216.52px;top:1224.39px;font-size:15.6px;line-height:20px;color:#1f2430;-webkit-text-stroke:0.15px #1f2430;">-</div>
<div class="t" style="left:2335.53px;top:1224.39px;font-size:15.6px;line-height:20px;color:#1f2430;-webkit-text-stroke:0.15px #1f2430;">-</div>
<div class="t" style="left:2454.54px;top:1224.39px;font-size:15.6px;line-height:20px;color:#1f2430;-webkit-text-stroke:0.15px #1f2430;">-</div>
<div class="t" style="left:2573.55px;top:1224.39px;font-size:15.6px;line-height:20px;color:#1f2430;-webkit-text-stroke:0.15px #1f2430;">-</div>
<div class="t" style="left:2692.56px;top:1224.39px;font-size:15.6px;line-height:20px;color:#1f2430;-webkit-text-stroke:0.15px #1f2430;">-</div>
<div class="t" style="left:2811.57px;top:1224.39px;font-size:15.6px;line-height:20px;color:#1f2430;-webkit-text-stroke:0.15px #1f2430;">-</div>
<div class="t" style="left:853.24px;top:1244.19px;font-size:15.6px;line-height:20px;color:#1f2430;letter-spacing:0.400px;-webkit-text-stroke:0.15px #1f2430;">200,000</div>
<div class="t" style="left:1026.42px;top:1244.19px;font-size:15.6px;line-height:20px;color:#1f2430;-webkit-text-stroke:0.15px #1f2430;">-</div>
<div class="t" style="left:1100.33px;top:1244.19px;font-size:15.6px;line-height:20px;color:#1f2430;letter-spacing:0.400px;-webkit-text-stroke:0.15px #1f2430;">98,333</div>
<div class="t" style="left:1223.42px;top:1244.19px;font-size:15.6px;line-height:20px;color:#1f2430;letter-spacing:0.400px;-webkit-text-stroke:0.15px #1f2430;">(1,667)</div>
<div class="t" style="left:1342.43px;top:1244.19px;font-size:15.6px;line-height:20px;color:#1f2430;letter-spacing:0.400px;-webkit-text-stroke:0.15px #1f2430;">(1,667)</div>
<div class="t" style="left:1461.44px;top:1244.19px;font-size:15.6px;line-height:20px;color:#1f2430;letter-spacing:0.400px;-webkit-text-stroke:0.15px #1f2430;">(1,667)</div>
<div class="t" style="left:1580.45px;top:1244.19px;font-size:15.6px;line-height:20px;color:#1f2430;letter-spacing:0.400px;-webkit-text-stroke:0.15px #1f2430;">(1,667)</div>
<div class="t" style="left:1699.46px;top:1244.19px;font-size:15.6px;line-height:20px;color:#1f2430;letter-spacing:0.400px;-webkit-text-stroke:0.15px #1f2430;">(1,667)</div>
<div class="t" style="left:1818.47px;top:1244.19px;font-size:15.6px;line-height:20px;color:#1f2430;letter-spacing:0.400px;-webkit-text-stroke:0.15px #1f2430;">(1,667)</div>
<div class="t" style="left:1937.48px;top:1244.19px;font-size:15.6px;line-height:20px;color:#1f2430;letter-spacing:0.400px;-webkit-text-stroke:0.15px #1f2430;">(1,667)</div>
<div class="t" style="left:2056.49px;top:1244.19px;font-size:15.6px;line-height:20px;color:#1f2430;letter-spacing:0.400px;-webkit-text-stroke:0.15px #1f2430;">(1,667)</div>
<div class="t" style="left:2175.50px;top:1244.19px;font-size:15.6px;line-height:20px;color:#1f2430;letter-spacing:0.400px;-webkit-text-stroke:0.15px #1f2430;">(1,667)</div>
<div class="t" style="left:2294.51px;top:1244.19px;font-size:15.6px;line-height:20px;color:#1f2430;letter-spacing:0.400px;-webkit-text-stroke:0.15px #1f2430;">(3,770)</div>
<div class="t" style="left:2413.52px;top:1244.19px;font-size:15.6px;line-height:20px;color:#1f2430;letter-spacing:0.400px;-webkit-text-stroke:0.15px #1f2430;">(3,780)</div>
<div class="t" style="left:2532.53px;top:1244.19px;font-size:15.6px;line-height:20px;color:#1f2430;letter-spacing:0.400px;-webkit-text-stroke:0.15px #1f2430;">(3,791)</div>
<div class="t" style="left:2651.54px;top:1244.19px;font-size:15.6px;line-height:20px;color:#1f2430;letter-spacing:0.400px;-webkit-text-stroke:0.15px #1f2430;">(3,801)</div>
<div class="t" style="left:2770.55px;top:1244.19px;font-size:15.6px;line-height:20px;color:#1f2430;letter-spacing:0.400px;-webkit-text-stroke:0.15px #1f2430;">(3,812)</div>
<div class="t" style="left:907.41px;top:1264.09px;font-size:15.6px;line-height:20px;color:#1f2430;-webkit-text-stroke:0.15px #1f2430;">-</div>
<div class="t" style="left:1026.42px;top:1264.09px;font-size:15.6px;line-height:20px;color:#1f2430;-webkit-text-stroke:0.15px #1f2430;">-</div>
<div class="t" style="left:1145.43px;top:1264.09px;font-size:15.6px;line-height:20px;color:#1f2430;-webkit-text-stroke:0.15px #1f2430;">-</div>
<div class="t" style="left:1264.44px;top:1264.09px;font-size:15.6px;line-height:20px;color:#1f2430;-webkit-text-stroke:0.15px #1f2430;">-</div>
<div class="t" style="left:1383.45px;top:1264.09px;font-size:15.6px;line-height:20px;color:#1f2430;-webkit-text-stroke:0.15px #1f2430;">-</div>
<div class="t" style="left:1502.46px;top:1264.09px;font-size:15.6px;line-height:20px;color:#1f2430;-webkit-text-stroke:0.15px #1f2430;">-</div>
<div class="t" style="left:1621.47px;top:1264.09px;font-size:15.6px;line-height:20px;color:#1f2430;-webkit-text-stroke:0.15px #1f2430;">-</div>
<div class="t" style="left:1740.48px;top:1264.09px;font-size:15.6px;line-height:20px;color:#1f2430;-webkit-text-stroke:0.15px #1f2430;">-</div>
<div class="t" style="left:1859.49px;top:1264.09px;font-size:15.6px;line-height:20px;color:#1f2430;-webkit-text-stroke:0.15px #1f2430;">-</div>
<div class="t" style="left:1978.50px;top:1264.09px;font-size:15.6px;line-height:20px;color:#1f2430;-webkit-text-stroke:0.15px #1f2430;">-</div>
<div class="t" style="left:2097.51px;top:1264.09px;font-size:15.6px;line-height:20px;color:#1f2430;-webkit-text-stroke:0.15px #1f2430;">-</div>
<div class="t" style="left:2216.52px;top:1264.09px;font-size:15.6px;line-height:20px;color:#1f2430;-webkit-text-stroke:0.15px #1f2430;">-</div>
<div class="t" style="left:2335.53px;top:1264.09px;font-size:15.6px;line-height:20px;color:#1f2430;-webkit-text-stroke:0.15px #1f2430;">-</div>
<div class="t" style="left:2454.54px;top:1264.09px;font-size:15.6px;line-height:20px;color:#1f2430;-webkit-text-stroke:0.15px #1f2430;">-</div>
<div class="t" style="left:2573.55px;top:1264.09px;font-size:15.6px;line-height:20px;color:#1f2430;-webkit-text-stroke:0.15px #1f2430;">-</div>
<div class="t" style="left:2692.56px;top:1264.09px;font-size:15.6px;line-height:20px;color:#1f2430;-webkit-text-stroke:0.15px #1f2430;">-</div>
<div class="t" style="left:2811.57px;top:1264.09px;font-size:15.6px;line-height:20px;color:#1f2430;-webkit-text-stroke:0.15px #1f2430;">-</div>
<div class="t" style="left:848.41px;top:1282.92px;font-size:18.0px;line-height:22px;color:#fff;font-family:'Liberation Serif';font-weight:700;letter-spacing:0.850px;-webkit-text-stroke:0.35px #fff;">900,000</div>
<div class="t" style="left:1024.32px;top:1282.92px;font-size:18.0px;line-height:22px;color:#fff;font-family:'Liberation Serif';font-weight:700;-webkit-text-stroke:0.35px #fff;">-</div>
<div class="t" style="left:1096.28px;top:1282.92px;font-size:18.0px;line-height:22px;color:#fff;font-family:'Liberation Serif';font-weight:700;letter-spacing:0.850px;-webkit-text-stroke:0.35px #fff;">98,333</div>
<div class="t" style="left:1218.14px;top:1282.92px;font-size:18.0px;line-height:22px;color:#fff;font-family:'Liberation Serif';font-weight:700;letter-spacing:0.850px;-webkit-text-stroke:0.35px #fff;">(1,667)</div>
<div class="t" style="left:1337.15px;top:1282.92px;font-size:18.0px;line-height:22px;color:#fff;font-family:'Liberation Serif';font-weight:700;letter-spacing:0.850px;-webkit-text-stroke:0.35px #fff;">(1,667)</div>
<div class="t" style="left:1456.16px;top:1282.92px;font-size:18.0px;line-height:22px;color:#fff;font-family:'Liberation Serif';font-weight:700;letter-spacing:0.850px;-webkit-text-stroke:0.35px #fff;">(1,667)</div>
<div class="t" style="left:1575.17px;top:1282.92px;font-size:18.0px;line-height:22px;color:#fff;font-family:'Liberation Serif';font-weight:700;letter-spacing:0.850px;-webkit-text-stroke:0.35px #fff;">(1,667)</div>
<div class="t" style="left:1694.18px;top:1282.92px;font-size:18.0px;line-height:22px;color:#fff;font-family:'Liberation Serif';font-weight:700;letter-spacing:0.850px;-webkit-text-stroke:0.35px #fff;">(1,667)</div>
<div class="t" style="left:1813.19px;top:1282.92px;font-size:18.0px;line-height:22px;color:#fff;font-family:'Liberation Serif';font-weight:700;letter-spacing:0.850px;-webkit-text-stroke:0.35px #fff;">(1,667)</div>
<div class="t" style="left:1932.20px;top:1282.92px;font-size:18.0px;line-height:22px;color:#fff;font-family:'Liberation Serif';font-weight:700;letter-spacing:0.850px;-webkit-text-stroke:0.35px #fff;">(1,667)</div>
<div class="t" style="left:2051.21px;top:1282.92px;font-size:18.0px;line-height:22px;color:#fff;font-family:'Liberation Serif';font-weight:700;letter-spacing:0.850px;-webkit-text-stroke:0.35px #fff;">(1,667)</div>
<div class="t" style="left:2170.22px;top:1282.92px;font-size:18.0px;line-height:22px;color:#fff;font-family:'Liberation Serif';font-weight:700;letter-spacing:0.850px;-webkit-text-stroke:0.35px #fff;">(1,667)</div>
<div class="t" style="left:2289.23px;top:1282.92px;font-size:18.0px;line-height:22px;color:#fff;font-family:'Liberation Serif';font-weight:700;letter-spacing:0.850px;-webkit-text-stroke:0.35px #fff;">(3,770)</div>
<div class="t" style="left:2408.24px;top:1282.92px;font-size:18.0px;line-height:22px;color:#fff;font-family:'Liberation Serif';font-weight:700;letter-spacing:0.850px;-webkit-text-stroke:0.35px #fff;">(3,780)</div>
<div class="t" style="left:2527.25px;top:1282.92px;font-size:18.0px;line-height:22px;color:#fff;font-family:'Liberation Serif';font-weight:700;letter-spacing:0.850px;-webkit-text-stroke:0.35px #fff;">(3,791)</div>
<div class="t" style="left:2646.26px;top:1282.92px;font-size:18.0px;line-height:22px;color:#fff;font-family:'Liberation Serif';font-weight:700;letter-spacing:0.850px;-webkit-text-stroke:0.35px #fff;">(3,801)</div>
<div class="t" style="left:2765.27px;top:1282.92px;font-size:18.0px;line-height:22px;color:#fff;font-family:'Liberation Serif';font-weight:700;letter-spacing:0.850px;-webkit-text-stroke:0.35px #fff;">(3,812)</div>
<div class="t" style="left:907.41px;top:1351.39px;font-size:15.6px;line-height:20px;color:#1f2430;-webkit-text-stroke:0.15px #1f2430;">-</div>
<div class="t" style="left:972.25px;top:1351.39px;font-size:15.6px;line-height:20px;color:#1f2430;letter-spacing:0.400px;-webkit-text-stroke:0.15px #1f2430;">861,033</div>
<div class="t" style="left:1091.25px;top:1351.39px;font-size:15.6px;line-height:20px;color:#1f2430;letter-spacing:0.400px;-webkit-text-stroke:0.15px #1f2430;">841,141</div>
<div class="t" style="left:1210.26px;top:1351.39px;font-size:15.6px;line-height:20px;color:#1f2430;letter-spacing:0.400px;-webkit-text-stroke:0.15px #1f2430;">909,575</div>
<div class="t" style="left:1329.27px;top:1351.39px;font-size:15.6px;line-height:20px;color:#1f2430;letter-spacing:0.400px;-webkit-text-stroke:0.15px #1f2430;">899,744</div>
<div class="t" style="left:1448.28px;top:1351.39px;font-size:15.6px;line-height:20px;color:#1f2430;letter-spacing:0.400px;-webkit-text-stroke:0.15px #1f2430;">889,818</div>
<div class="t" style="left:1567.30px;top:1351.39px;font-size:15.6px;line-height:20px;color:#1f2430;letter-spacing:0.400px;-webkit-text-stroke:0.15px #1f2430;">880,009</div>
<div class="t" style="left:1686.30px;top:1351.39px;font-size:15.6px;line-height:20px;color:#1f2430;letter-spacing:0.400px;-webkit-text-stroke:0.15px #1f2430;">870,105</div>
<div class="t" style="left:1805.32px;top:1351.39px;font-size:15.6px;line-height:20px;color:#1f2430;letter-spacing:0.400px;-webkit-text-stroke:0.15px #1f2430;">860,265</div>
<div class="t" style="left:1924.33px;top:1351.39px;font-size:15.6px;line-height:20px;color:#1f2430;letter-spacing:0.400px;-webkit-text-stroke:0.15px #1f2430;">850,490</div>
<div class="t" style="left:2043.34px;top:1351.39px;font-size:15.6px;line-height:20px;color:#1f2430;letter-spacing:0.400px;-webkit-text-stroke:0.15px #1f2430;">840,619</div>
<div class="t" style="left:2162.35px;top:1351.39px;font-size:15.6px;line-height:20px;color:#1f2430;letter-spacing:0.400px;-webkit-text-stroke:0.15px #1f2430;">830,866</div>
<div class="t" style="left:2281.36px;top:1351.39px;font-size:15.6px;line-height:20px;color:#1f2430;letter-spacing:0.400px;-webkit-text-stroke:0.15px #1f2430;">821,017</div>
<div class="t" style="left:2400.37px;top:1351.39px;font-size:15.6px;line-height:20px;color:#1f2430;letter-spacing:0.400px;-webkit-text-stroke:0.15px #1f2430;">812,985</div>
<div class="t" style="left:2519.38px;top:1351.39px;font-size:15.6px;line-height:20px;color:#1f2430;letter-spacing:0.400px;-webkit-text-stroke:0.15px #1f2430;">810,753</div>
<div class="t" style="left:2638.39px;top:1351.39px;font-size:15.6px;line-height:20px;color:#1f2430;letter-spacing:0.400px;-webkit-text-stroke:0.15px #1f2430;">809,535</div>
<div class="t" style="left:2757.40px;top:1351.39px;font-size:15.6px;line-height:20px;color:#1f2430;letter-spacing:0.400px;-webkit-text-stroke:0.15px #1f2430;">807,661</div>
<div class="t" style="left:853.24px;top:1374.49px;font-size:15.6px;line-height:20px;color:#1f2430;letter-spacing:0.400px;-webkit-text-stroke:0.15px #1f2430;">861,033</div>
<div class="t" style="left:976.33px;top:1374.49px;font-size:15.6px;line-height:20px;color:#1f2430;letter-spacing:0.400px;-webkit-text-stroke:0.15px #1f2430;">(19,891)</div>
<div class="t" style="left:1100.33px;top:1374.49px;font-size:15.6px;line-height:20px;color:#1f2430;letter-spacing:0.400px;-webkit-text-stroke:0.15px #1f2430;">68,434</div>
<div class="t" style="left:1223.42px;top:1374.49px;font-size:15.6px;line-height:20px;color:#1f2430;letter-spacing:0.400px;-webkit-text-stroke:0.15px #1f2430;">(9,831)</div>
<div class="t" style="left:1342.43px;top:1374.49px;font-size:15.6px;line-height:20px;color:#1f2430;letter-spacing:0.400px;-webkit-text-stroke:0.15px #1f2430;">(9,926)</div>
<div class="t" style="left:1461.44px;top:1374.49px;font-size:15.6px;line-height:20px;color:#1f2430;letter-spacing:0.400px;-webkit-text-stroke:0.15px #1f2430;">(9,809)</div>
<div class="t" style="left:1580.45px;top:1374.49px;font-size:15.6px;line-height:20px;color:#1f2430;letter-spacing:0.400px;-webkit-text-stroke:0.15px #1f2430;">(9,904)</div>
<div class="t" style="left:1699.46px;top:1374.49px;font-size:15.6px;line-height:20px;color:#1f2430;letter-spacing:0.400px;-webkit-text-stroke:0.15px #1f2430;">(9,840)</div>
<div class="t" style="left:1818.47px;top:1374.49px;font-size:15.6px;line-height:20px;color:#1f2430;letter-spacing:0.400px;-webkit-text-stroke:0.15px #1f2430;">(9,775)</div>
<div class="t" style="left:1937.48px;top:1374.49px;font-size:15.6px;line-height:20px;color:#1f2430;letter-spacing:0.400px;-webkit-text-stroke:0.15px #1f2430;">(9,871)</div>
<div class="t" style="left:2056.49px;top:1374.49px;font-size:15.6px;line-height:20px;color:#1f2430;letter-spacing:0.400px;-webkit-text-stroke:0.15px #1f2430;">(9,753)</div>
<div class="t" style="left:2175.50px;top:1374.49px;font-size:15.6px;line-height:20px;color:#1f2430;letter-spacing:0.400px;-webkit-text-stroke:0.15px #1f2430;">(9,848)</div>
<div class="t" style="left:2294.51px;top:1374.49px;font-size:15.6px;line-height:20px;color:#1f2430;letter-spacing:0.400px;-webkit-text-stroke:0.15px #1f2430;">(8,032)</div>
<div class="t" style="left:2413.52px;top:1374.49px;font-size:15.6px;line-height:20px;color:#1f2430;letter-spacing:0.400px;-webkit-text-stroke:0.15px #1f2430;">(2,232)</div>
<div class="t" style="left:2532.53px;top:1374.49px;font-size:15.6px;line-height:20px;color:#1f2430;letter-spacing:0.400px;-webkit-text-stroke:0.15px #1f2430;">(1,219)</div>
<div class="t" style="left:2651.54px;top:1374.49px;font-size:15.6px;line-height:20px;color:#1f2430;letter-spacing:0.400px;-webkit-text-stroke:0.15px #1f2430;">(1,874)</div>
<div class="t" style="left:2770.55px;top:1374.49px;font-size:15.6px;line-height:20px;color:#1f2430;letter-spacing:0.400px;-webkit-text-stroke:0.15px #1f2430;">(1,554)</div>
<div class="t" style="left:848.41px;top:1394.52px;font-size:18.0px;line-height:22px;color:#fff;font-family:'Liberation Serif';font-weight:700;letter-spacing:0.850px;-webkit-text-stroke:0.35px #fff;">861,033</div>
<div class="t" style="left:967.42px;top:1394.52px;font-size:18.0px;line-height:22px;color:#fff;font-family:'Liberation Serif';font-weight:700;letter-spacing:0.850px;-webkit-text-stroke:0.35px #fff;">841,141</div>
<div class="t" style="left:1086.43px;top:1394.52px;font-size:18.0px;line-height:22px;color:#fff;font-family:'Liberation Serif';font-weight:700;letter-spacing:0.850px;-webkit-text-stroke:0.35px #fff;">909,575</div>
<div class="t" style="left:1205.44px;top:1394.52px;font-size:18.0px;line-height:22px;color:#fff;font-family:'Liberation Serif';font-weight:700;letter-spacing:0.850px;-webkit-text-stroke:0.35px #fff;">899,744</div>
<div class="t" style="left:1324.45px;top:1394.52px;font-size:18.0px;line-height:22px;color:#fff;font-family:'Liberation Serif';font-weight:700;letter-spacing:0.850px;-webkit-text-stroke:0.35px #fff;">889,818</div>
<div class="t" style="left:1443.46px;top:1394.52px;font-size:18.0px;line-height:22px;color:#fff;font-family:'Liberation Serif';font-weight:700;letter-spacing:0.850px;-webkit-text-stroke:0.35px #fff;">880,009</div>
<div class="t" style="left:1562.47px;top:1394.52px;font-size:18.0px;line-height:22px;color:#fff;font-family:'Liberation Serif';font-weight:700;letter-spacing:0.850px;-webkit-text-stroke:0.35px #fff;">870,105</div>
<div class="t" style="left:1681.48px;top:1394.52px;font-size:18.0px;line-height:22px;color:#fff;font-family:'Liberation Serif';font-weight:700;letter-spacing:0.850px;-webkit-text-stroke:0.35px #fff;">860,265</div>
<div class="t" style="left:1800.49px;top:1394.52px;font-size:18.0px;line-height:22px;color:#fff;font-family:'Liberation Serif';font-weight:700;letter-spacing:0.850px;-webkit-text-stroke:0.35px #fff;">850,490</div>
<div class="t" style="left:1919.50px;top:1394.52px;font-size:18.0px;line-height:22px;color:#fff;font-family:'Liberation Serif';font-weight:700;letter-spacing:0.850px;-webkit-text-stroke:0.35px #fff;">840,619</div>
<div class="t" style="left:2038.51px;top:1394.52px;font-size:18.0px;line-height:22px;color:#fff;font-family:'Liberation Serif';font-weight:700;letter-spacing:0.850px;-webkit-text-stroke:0.35px #fff;">830,866</div>
<div class="t" style="left:2157.52px;top:1394.52px;font-size:18.0px;line-height:22px;color:#fff;font-family:'Liberation Serif';font-weight:700;letter-spacing:0.850px;-webkit-text-stroke:0.35px #fff;">821,017</div>
<div class="t" style="left:2276.53px;top:1394.52px;font-size:18.0px;line-height:22px;color:#fff;font-family:'Liberation Serif';font-weight:700;letter-spacing:0.850px;-webkit-text-stroke:0.35px #fff;">812,985</div>
<div class="t" style="left:2395.54px;top:1394.52px;font-size:18.0px;line-height:22px;color:#fff;font-family:'Liberation Serif';font-weight:700;letter-spacing:0.850px;-webkit-text-stroke:0.35px #fff;">810,753</div>
<div class="t" style="left:2514.55px;top:1394.52px;font-size:18.0px;line-height:22px;color:#fff;font-family:'Liberation Serif';font-weight:700;letter-spacing:0.850px;-webkit-text-stroke:0.35px #fff;">809,535</div>
<div class="t" style="left:2633.56px;top:1394.52px;font-size:18.0px;line-height:22px;color:#fff;font-family:'Liberation Serif';font-weight:700;letter-spacing:0.850px;-webkit-text-stroke:0.35px #fff;">807,661</div>
<div class="t" style="left:2752.57px;top:1394.52px;font-size:18.0px;line-height:22px;color:#fff;font-family:'Liberation Serif';font-weight:700;letter-spacing:0.850px;-webkit-text-stroke:0.35px #fff;">806,107</div>
<div class="t" style="left:865.81px;top:1492.91px;font-size:14.1px;line-height:18px;color:#1f2430;letter-spacing:0.200px;-webkit-text-stroke:0.15px #1f2430;">(33,000)</div>
<div class="t" style="left:984.82px;top:1492.91px;font-size:14.1px;line-height:18px;color:#1f2430;letter-spacing:0.200px;-webkit-text-stroke:0.15px #1f2430;">(12,500)</div>
<div class="t" style="left:1103.83px;top:1492.91px;font-size:14.1px;line-height:18px;color:#1f2430;letter-spacing:0.200px;-webkit-text-stroke:0.15px #1f2430;">(21,500)</div>
<div class="t" style="left:1266.99px;top:1492.91px;font-size:14.1px;line-height:18px;color:#1f2430;-webkit-text-stroke:0.15px #1f2430;">-</div>
<div class="t" style="left:1386.00px;top:1492.91px;font-size:14.1px;line-height:18px;color:#1f2430;-webkit-text-stroke:0.15px #1f2430;">-</div>
<div class="t" style="left:1505.01px;top:1492.91px;font-size:14.1px;line-height:18px;color:#1f2430;-webkit-text-stroke:0.15px #1f2430;">-</div>
<div class="t" style="left:1624.02px;top:1492.91px;font-size:14.1px;line-height:18px;color:#1f2430;-webkit-text-stroke:0.15px #1f2430;">-</div>
<div class="t" style="left:1743.03px;top:1492.91px;font-size:14.1px;line-height:18px;color:#1f2430;-webkit-text-stroke:0.15px #1f2430;">-</div>
<div class="t" style="left:1862.04px;top:1492.91px;font-size:14.1px;line-height:18px;color:#1f2430;-webkit-text-stroke:0.15px #1f2430;">-</div>
<div class="t" style="left:1981.05px;top:1492.91px;font-size:14.1px;line-height:18px;color:#1f2430;-webkit-text-stroke:0.15px #1f2430;">-</div>
<div class="t" style="left:2100.06px;top:1492.91px;font-size:14.1px;line-height:18px;color:#1f2430;-webkit-text-stroke:0.15px #1f2430;">-</div>
<div class="t" style="left:2219.07px;top:1492.91px;font-size:14.1px;line-height:18px;color:#1f2430;-webkit-text-stroke:0.15px #1f2430;">-</div>
<div class="t" style="left:2338.08px;top:1492.91px;font-size:14.1px;line-height:18px;color:#1f2430;-webkit-text-stroke:0.15px #1f2430;">-</div>
<div class="t" style="left:2457.09px;top:1492.91px;font-size:14.1px;line-height:18px;color:#1f2430;-webkit-text-stroke:0.15px #1f2430;">-</div>
<div class="t" style="left:2576.10px;top:1492.91px;font-size:14.1px;line-height:18px;color:#1f2430;-webkit-text-stroke:0.15px #1f2430;">-</div>
<div class="t" style="left:2695.11px;top:1492.91px;font-size:14.1px;line-height:18px;color:#1f2430;-webkit-text-stroke:0.15px #1f2430;">-</div>
<div class="t" style="left:2814.12px;top:1492.91px;font-size:14.1px;line-height:18px;color:#1f2430;-webkit-text-stroke:0.15px #1f2430;">-</div>
<div class="t" style="left:862.66px;top:1513.21px;font-size:14.1px;line-height:18px;color:#1f2430;letter-spacing:0.200px;-webkit-text-stroke:0.15px #1f2430;">900,000</div>
<div class="t" style="left:1028.97px;top:1513.21px;font-size:14.1px;line-height:18px;color:#1f2430;-webkit-text-stroke:0.15px #1f2430;">-</div>
<div class="t" style="left:1108.72px;top:1513.21px;font-size:14.1px;line-height:18px;color:#1f2430;letter-spacing:0.200px;-webkit-text-stroke:0.15px #1f2430;">98,333</div>
<div class="t" style="left:1230.88px;top:1513.21px;font-size:14.1px;line-height:18px;color:#1f2430;letter-spacing:0.200px;-webkit-text-stroke:0.15px #1f2430;">(1,667)</div>
<div class="t" style="left:1349.89px;top:1513.21px;font-size:14.1px;line-height:18px;color:#1f2430;letter-spacing:0.200px;-webkit-text-stroke:0.15px #1f2430;">(1,667)</div>
<div class="t" style="left:1468.90px;top:1513.21px;font-size:14.1px;line-height:18px;color:#1f2430;letter-spacing:0.200px;-webkit-text-stroke:0.15px #1f2430;">(1,667)</div>
<div class="t" style="left:1587.91px;top:1513.21px;font-size:14.1px;line-height:18px;color:#1f2430;letter-spacing:0.200px;-webkit-text-stroke:0.15px #1f2430;">(1,667)</div>
<div class="t" style="left:1706.92px;top:1513.21px;font-size:14.1px;line-height:18px;color:#1f2430;letter-spacing:0.200px;-webkit-text-stroke:0.15px #1f2430;">(1,667)</div>
<div class="t" style="left:1825.93px;top:1513.21px;font-size:14.1px;line-height:18px;color:#1f2430;letter-spacing:0.200px;-webkit-text-stroke:0.15px #1f2430;">(1,667)</div>
<div class="t" style="left:1944.94px;top:1513.21px;font-size:14.1px;line-height:18px;color:#1f2430;letter-spacing:0.200px;-webkit-text-stroke:0.15px #1f2430;">(1,667)</div>
<div class="t" style="left:2063.95px;top:1513.21px;font-size:14.1px;line-height:18px;color:#1f2430;letter-spacing:0.200px;-webkit-text-stroke:0.15px #1f2430;">(1,667)</div>
<div class="t" style="left:2182.96px;top:1513.21px;font-size:14.1px;line-height:18px;color:#1f2430;letter-spacing:0.200px;-webkit-text-stroke:0.15px #1f2430;">(1,667)</div>
<div class="t" style="left:2301.97px;top:1513.21px;font-size:14.1px;line-height:18px;color:#1f2430;letter-spacing:0.200px;-webkit-text-stroke:0.15px #1f2430;">(3,770)</div>
<div class="t" style="left:2420.98px;top:1513.21px;font-size:14.1px;line-height:18px;color:#1f2430;letter-spacing:0.200px;-webkit-text-stroke:0.15px #1f2430;">(3,780)</div>
<div class="t" style="left:2539.99px;top:1513.21px;font-size:14.1px;line-height:18px;color:#1f2430;letter-spacing:0.200px;-webkit-text-stroke:0.15px #1f2430;">(3,791)</div>
<div class="t" style="left:2659.00px;top:1513.21px;font-size:14.1px;line-height:18px;color:#1f2430;letter-spacing:0.200px;-webkit-text-stroke:0.15px #1f2430;">(3,801)</div>
<div class="t" style="left:2778.01px;top:1513.21px;font-size:14.1px;line-height:18px;color:#1f2430;letter-spacing:0.200px;-webkit-text-stroke:0.15px #1f2430;">(3,812)</div>
<div class="t" style="left:870.70px;top:1532.71px;font-size:14.1px;line-height:18px;color:#1f2430;letter-spacing:0.200px;-webkit-text-stroke:0.15px #1f2430;">10,538</div>
<div class="t" style="left:989.71px;top:1532.71px;font-size:14.1px;line-height:18px;color:#1f2430;letter-spacing:0.200px;-webkit-text-stroke:0.15px #1f2430;">19,358</div>
<div class="t" style="left:1108.72px;top:1532.71px;font-size:14.1px;line-height:18px;color:#1f2430;letter-spacing:0.200px;-webkit-text-stroke:0.15px #1f2430;">21,475</div>
<div class="t" style="left:1227.73px;top:1532.71px;font-size:14.1px;line-height:18px;color:#1f2430;letter-spacing:0.200px;-webkit-text-stroke:0.15px #1f2430;">20,087</div>
<div class="t" style="left:1346.74px;top:1532.71px;font-size:14.1px;line-height:18px;color:#1f2430;letter-spacing:0.200px;-webkit-text-stroke:0.15px #1f2430;">20,746</div>
<div class="t" style="left:1465.75px;top:1532.71px;font-size:14.1px;line-height:18px;color:#1f2430;letter-spacing:0.200px;-webkit-text-stroke:0.15px #1f2430;">20,087</div>
<div class="t" style="left:1584.76px;top:1532.71px;font-size:14.1px;line-height:18px;color:#1f2430;letter-spacing:0.200px;-webkit-text-stroke:0.15px #1f2430;">20,746</div>
<div class="t" style="left:1703.77px;top:1532.71px;font-size:14.1px;line-height:18px;color:#1f2430;letter-spacing:0.200px;-webkit-text-stroke:0.15px #1f2430;">20,417</div>
<div class="t" style="left:1822.78px;top:1532.71px;font-size:14.1px;line-height:18px;color:#1f2430;letter-spacing:0.200px;-webkit-text-stroke:0.15px #1f2430;">20,087</div>
<div class="t" style="left:1941.79px;top:1532.71px;font-size:14.1px;line-height:18px;color:#1f2430;letter-spacing:0.200px;-webkit-text-stroke:0.15px #1f2430;">20,746</div>
<div class="t" style="left:2060.80px;top:1532.71px;font-size:14.1px;line-height:18px;color:#1f2430;letter-spacing:0.200px;-webkit-text-stroke:0.15px #1f2430;">20,087</div>
<div class="t" style="left:2179.81px;top:1532.71px;font-size:14.1px;line-height:18px;color:#1f2430;letter-spacing:0.200px;-webkit-text-stroke:0.15px #1f2430;">20,746</div>
<div class="t" style="left:2298.82px;top:1532.71px;font-size:14.1px;line-height:18px;color:#1f2430;letter-spacing:0.200px;-webkit-text-stroke:0.15px #1f2430;">28,064</div>
<div class="t" style="left:2417.83px;top:1532.71px;font-size:14.1px;line-height:18px;color:#1f2430;letter-spacing:0.200px;-webkit-text-stroke:0.15px #1f2430;">33,407</div>
<div class="t" style="left:2536.84px;top:1532.71px;font-size:14.1px;line-height:18px;color:#1f2430;letter-spacing:0.200px;-webkit-text-stroke:0.15px #1f2430;">37,060</div>
<div class="t" style="left:2655.85px;top:1532.71px;font-size:14.1px;line-height:18px;color:#1f2430;letter-spacing:0.200px;-webkit-text-stroke:0.15px #1f2430;">34,665</div>
<div class="t" style="left:2774.86px;top:1532.71px;font-size:14.1px;line-height:18px;color:#1f2430;letter-spacing:0.200px;-webkit-text-stroke:0.15px #1f2430;">35,802</div>
<div class="t" style="left:865.81px;top:1553.01px;font-size:14.1px;line-height:18px;color:#1f2430;letter-spacing:0.200px;-webkit-text-stroke:0.15px #1f2430;">(15,505)</div>
<div class="t" style="left:984.82px;top:1553.01px;font-size:14.1px;line-height:18px;color:#1f2430;letter-spacing:0.200px;-webkit-text-stroke:0.15px #1f2430;">(25,749)</div>
<div class="t" style="left:1103.83px;top:1553.01px;font-size:14.1px;line-height:18px;color:#1f2430;letter-spacing:0.200px;-webkit-text-stroke:0.15px #1f2430;">(28,208)</div>
<div class="t" style="left:1222.84px;top:1553.01px;font-size:14.1px;line-height:18px;color:#1f2430;letter-spacing:0.200px;-webkit-text-stroke:0.15px #1f2430;">(26,596)</div>
<div class="t" style="left:1341.85px;top:1553.01px;font-size:14.1px;line-height:18px;color:#1f2430;letter-spacing:0.200px;-webkit-text-stroke:0.15px #1f2430;">(27,361)</div>
<div class="t" style="left:1460.86px;top:1553.01px;font-size:14.1px;line-height:18px;color:#1f2430;letter-spacing:0.200px;-webkit-text-stroke:0.15px #1f2430;">(26,596)</div>
<div class="t" style="left:1579.87px;top:1553.01px;font-size:14.1px;line-height:18px;color:#1f2430;letter-spacing:0.200px;-webkit-text-stroke:0.15px #1f2430;">(27,361)</div>
<div class="t" style="left:1698.88px;top:1553.01px;font-size:14.1px;line-height:18px;color:#1f2430;letter-spacing:0.200px;-webkit-text-stroke:0.15px #1f2430;">(26,979)</div>
<div class="t" style="left:1817.89px;top:1553.01px;font-size:14.1px;line-height:18px;color:#1f2430;letter-spacing:0.200px;-webkit-text-stroke:0.15px #1f2430;">(26,596)</div>
<div class="t" style="left:1936.90px;top:1553.01px;font-size:14.1px;line-height:18px;color:#1f2430;letter-spacing:0.200px;-webkit-text-stroke:0.15px #1f2430;">(27,361)</div>
<div class="t" style="left:2055.91px;top:1553.01px;font-size:14.1px;line-height:18px;color:#1f2430;letter-spacing:0.200px;-webkit-text-stroke:0.15px #1f2430;">(26,596)</div>
<div class="t" style="left:2174.92px;top:1553.01px;font-size:14.1px;line-height:18px;color:#1f2430;letter-spacing:0.200px;-webkit-text-stroke:0.15px #1f2430;">(27,361)</div>
<div class="t" style="left:2293.93px;top:1553.01px;font-size:14.1px;line-height:18px;color:#1f2430;letter-spacing:0.200px;-webkit-text-stroke:0.15px #1f2430;">(30,279)</div>
<div class="t" style="left:2412.94px;top:1553.01px;font-size:14.1px;line-height:18px;color:#1f2430;letter-spacing:0.200px;-webkit-text-stroke:0.15px #1f2430;">(29,827)</div>
<div class="t" style="left:2531.95px;top:1553.01px;font-size:14.1px;line-height:18px;color:#1f2430;letter-spacing:0.200px;-webkit-text-stroke:0.15px #1f2430;">(32,472)</div>
<div class="t" style="left:2650.96px;top:1553.01px;font-size:14.1px;line-height:18px;color:#1f2430;letter-spacing:0.200px;-webkit-text-stroke:0.15px #1f2430;">(30,738)</div>
<div class="t" style="left:2769.97px;top:1553.01px;font-size:14.1px;line-height:18px;color:#1f2430;letter-spacing:0.200px;-webkit-text-stroke:0.15px #1f2430;">(31,561)</div>
<div class="t" style="left:862.66px;top:1572.91px;font-size:14.1px;line-height:18px;color:#1f2430;letter-spacing:0.200px;-webkit-text-stroke:0.15px #1f2430;">862,033</div>
<div class="t" style="left:984.82px;top:1572.91px;font-size:14.1px;line-height:18px;color:#1f2430;letter-spacing:0.200px;-webkit-text-stroke:0.15px #1f2430;">(18,891)</div>
<div class="t" style="left:1108.72px;top:1572.91px;font-size:14.1px;line-height:18px;color:#1f2430;letter-spacing:0.200px;-webkit-text-stroke:0.15px #1f2430;">70,101</div>
<div class="t" style="left:1230.88px;top:1572.91px;font-size:14.1px;line-height:18px;color:#1f2430;letter-spacing:0.200px;-webkit-text-stroke:0.15px #1f2430;">(8,175)</div>
<div class="t" style="left:1349.89px;top:1572.91px;font-size:14.1px;line-height:18px;color:#1f2430;letter-spacing:0.200px;-webkit-text-stroke:0.15px #1f2430;">(8,282)</div>
<div class="t" style="left:1468.90px;top:1572.91px;font-size:14.1px;line-height:18px;color:#1f2430;letter-spacing:0.200px;-webkit-text-stroke:0.15px #1f2430;">(8,175)</div>
<div class="t" style="left:1587.91px;top:1572.91px;font-size:14.1px;line-height:18px;color:#1f2430;letter-spacing:0.200px;-webkit-text-stroke:0.15px #1f2430;">(8,282)</div>
<div class="t" style="left:1706.92px;top:1572.91px;font-size:14.1px;line-height:18px;color:#1f2430;letter-spacing:0.200px;-webkit-text-stroke:0.15px #1f2430;">(8,229)</div>
<div class="t" style="left:1825.93px;top:1572.91px;font-size:14.1px;line-height:18px;color:#1f2430;letter-spacing:0.200px;-webkit-text-stroke:0.15px #1f2430;">(8,175)</div>
<div class="t" style="left:1944.94px;top:1572.91px;font-size:14.1px;line-height:18px;color:#1f2430;letter-spacing:0.200px;-webkit-text-stroke:0.15px #1f2430;">(8,282)</div>
<div class="t" style="left:2063.95px;top:1572.91px;font-size:14.1px;line-height:18px;color:#1f2430;letter-spacing:0.200px;-webkit-text-stroke:0.15px #1f2430;">(8,175)</div>
<div class="t" style="left:2182.96px;top:1572.91px;font-size:14.1px;line-height:18px;color:#1f2430;letter-spacing:0.200px;-webkit-text-stroke:0.15px #1f2430;">(8,282)</div>
<div class="t" style="left:2301.97px;top:1572.91px;font-size:14.1px;line-height:18px;color:#1f2430;letter-spacing:0.200px;-webkit-text-stroke:0.15px #1f2430;">(5,984)</div>
<div class="t" style="left:2433.13px;top:1572.91px;font-size:14.1px;line-height:18px;color:#1f2430;letter-spacing:0.200px;-webkit-text-stroke:0.15px #1f2430;">(200)</div>
<div class="t" style="left:2557.03px;top:1572.91px;font-size:14.1px;line-height:18px;color:#1f2430;letter-spacing:0.200px;-webkit-text-stroke:0.15px #1f2430;">797</div>
<div class="t" style="left:2676.04px;top:1572.91px;font-size:14.1px;line-height:18px;color:#1f2430;letter-spacing:0.200px;-webkit-text-stroke:0.15px #1f2430;">126</div>
<div class="t" style="left:2795.05px;top:1572.91px;font-size:14.1px;line-height:18px;color:#1f2430;letter-spacing:0.200px;-webkit-text-stroke:0.15px #1f2430;">428</div>
<div class="t" style="left:873.85px;top:1593.11px;font-size:14.1px;line-height:18px;color:#1f2430;letter-spacing:0.200px;-webkit-text-stroke:0.15px #1f2430;">(1,000)</div>
<div class="t" style="left:992.86px;top:1593.11px;font-size:14.1px;line-height:18px;color:#1f2430;letter-spacing:0.200px;-webkit-text-stroke:0.15px #1f2430;">(1,000)</div>
<div class="t" style="left:1111.87px;top:1593.11px;font-size:14.1px;line-height:18px;color:#1f2430;letter-spacing:0.200px;-webkit-text-stroke:0.15px #1f2430;">(1,667)</div>
<div class="t" style="left:1230.88px;top:1593.11px;font-size:14.1px;line-height:18px;color:#1f2430;letter-spacing:0.200px;-webkit-text-stroke:0.15px #1f2430;">(1,656)</div>
<div class="t" style="left:1349.89px;top:1593.11px;font-size:14.1px;line-height:18px;color:#1f2430;letter-spacing:0.200px;-webkit-text-stroke:0.15px #1f2430;">(1,644)</div>
<div class="t" style="left:1468.90px;top:1593.11px;font-size:14.1px;line-height:18px;color:#1f2430;letter-spacing:0.200px;-webkit-text-stroke:0.15px #1f2430;">(1,633)</div>
<div class="t" style="left:1587.91px;top:1593.11px;font-size:14.1px;line-height:18px;color:#1f2430;letter-spacing:0.200px;-webkit-text-stroke:0.15px #1f2430;">(1,622)</div>
<div class="t" style="left:1707.97px;top:1593.11px;font-size:14.1px;line-height:18px;color:#1f2430;letter-spacing:0.200px;-webkit-text-stroke:0.15px #1f2430;">(1,611)</div>
<div class="t" style="left:1825.93px;top:1593.11px;font-size:14.1px;line-height:18px;color:#1f2430;letter-spacing:0.200px;-webkit-text-stroke:0.15px #1f2430;">(1,600)</div>
<div class="t" style="left:1944.94px;top:1593.11px;font-size:14.1px;line-height:18px;color:#1f2430;letter-spacing:0.200px;-webkit-text-stroke:0.15px #1f2430;">(1,589)</div>
<div class="t" style="left:2063.95px;top:1593.11px;font-size:14.1px;line-height:18px;color:#1f2430;letter-spacing:0.200px;-webkit-text-stroke:0.15px #1f2430;">(1,578)</div>
<div class="t" style="left:2182.96px;top:1593.11px;font-size:14.1px;line-height:18px;color:#1f2430;letter-spacing:0.200px;-webkit-text-stroke:0.15px #1f2430;">(1,567)</div>
<div class="t" style="left:2301.97px;top:1593.11px;font-size:14.1px;line-height:18px;color:#1f2430;letter-spacing:0.200px;-webkit-text-stroke:0.15px #1f2430;">(1,556)</div>
<div class="t" style="left:2420.98px;top:1593.11px;font-size:14.1px;line-height:18px;color:#1f2430;letter-spacing:0.200px;-webkit-text-stroke:0.15px #1f2430;">(1,534)</div>
<div class="t" style="left:2539.99px;top:1593.11px;font-size:14.1px;line-height:18px;color:#1f2430;letter-spacing:0.200px;-webkit-text-stroke:0.15px #1f2430;">(1,512)</div>
<div class="t" style="left:2659.00px;top:1593.11px;font-size:14.1px;line-height:18px;color:#1f2430;letter-spacing:0.200px;-webkit-text-stroke:0.15px #1f2430;">(1,491)</div>
<div class="t" style="left:2778.01px;top:1593.11px;font-size:14.1px;line-height:18px;color:#1f2430;letter-spacing:0.200px;-webkit-text-stroke:0.15px #1f2430;">(1,469)</div>
<div class="t" style="left:909.96px;top:1612.61px;font-size:14.1px;line-height:18px;color:#1f2430;-webkit-text-stroke:0.15px #1f2430;">-</div>
<div class="t" style="left:1028.97px;top:1612.61px;font-size:14.1px;line-height:18px;color:#1f2430;-webkit-text-stroke:0.15px #1f2430;">-</div>
<div class="t" style="left:1147.98px;top:1612.61px;font-size:14.1px;line-height:18px;color:#1f2430;-webkit-text-stroke:0.15px #1f2430;">-</div>
<div class="t" style="left:1266.99px;top:1612.61px;font-size:14.1px;line-height:18px;color:#1f2430;-webkit-text-stroke:0.15px #1f2430;">-</div>
<div class="t" style="left:1386.00px;top:1612.61px;font-size:14.1px;line-height:18px;color:#1f2430;-webkit-text-stroke:0.15px #1f2430;">-</div>
<div class="t" style="left:1505.01px;top:1612.61px;font-size:14.1px;line-height:18px;color:#1f2430;-webkit-text-stroke:0.15px #1f2430;">-</div>
<div class="t" style="left:1624.02px;top:1612.61px;font-size:14.1px;line-height:18px;color:#1f2430;-webkit-text-stroke:0.15px #1f2430;">-</div>
<div class="t" style="left:1743.03px;top:1612.61px;font-size:14.1px;line-height:18px;color:#1f2430;-webkit-text-stroke:0.15px #1f2430;">-</div>
<div class="t" style="left:1862.04px;top:1612.61px;font-size:14.1px;line-height:18px;color:#1f2430;-webkit-text-stroke:0.15px #1f2430;">-</div>
<div class="t" style="left:1981.05px;top:1612.61px;font-size:14.1px;line-height:18px;color:#1f2430;-webkit-text-stroke:0.15px #1f2430;">-</div>
<div class="t" style="left:2100.06px;top:1612.61px;font-size:14.1px;line-height:18px;color:#1f2430;-webkit-text-stroke:0.15px #1f2430;">-</div>
<div class="t" style="left:2219.07px;top:1612.61px;font-size:14.1px;line-height:18px;color:#1f2430;-webkit-text-stroke:0.15px #1f2430;">-</div>
<div class="t" style="left:2314.12px;top:1612.61px;font-size:14.1px;line-height:18px;color:#1f2430;letter-spacing:0.200px;-webkit-text-stroke:0.15px #1f2430;">(492)</div>
<div class="t" style="left:2433.13px;top:1612.61px;font-size:14.1px;line-height:18px;color:#1f2430;letter-spacing:0.200px;-webkit-text-stroke:0.15px #1f2430;">(498)</div>
<div class="t" style="left:2552.14px;top:1612.61px;font-size:14.1px;line-height:18px;color:#1f2430;letter-spacing:0.200px;-webkit-text-stroke:0.15px #1f2430;">(503)</div>
<div class="t" style="left:2671.15px;top:1612.61px;font-size:14.1px;line-height:18px;color:#1f2430;letter-spacing:0.200px;-webkit-text-stroke:0.15px #1f2430;">(509)</div>
<div class="t" style="left:2790.16px;top:1612.61px;font-size:14.1px;line-height:18px;color:#1f2430;letter-spacing:0.200px;-webkit-text-stroke:0.15px #1f2430;">(514)</div>
<div class="t" style="left:848.41px;top:1630.72px;font-size:18.0px;line-height:22px;color:#fff;font-family:'Liberation Serif';font-weight:700;letter-spacing:0.850px;-webkit-text-stroke:0.35px #fff;">861,033</div>
<div class="t" style="left:970.27px;top:1630.72px;font-size:18.0px;line-height:22px;color:#fff;font-family:'Liberation Serif';font-weight:700;letter-spacing:0.850px;-webkit-text-stroke:0.35px #fff;">(19,891)</div>
<div class="t" style="left:1096.28px;top:1630.72px;font-size:18.0px;line-height:22px;color:#fff;font-family:'Liberation Serif';font-weight:700;letter-spacing:0.850px;-webkit-text-stroke:0.35px #fff;">68,434</div>
<div class="t" style="left:1218.14px;top:1630.72px;font-size:18.0px;line-height:22px;color:#fff;font-family:'Liberation Serif';font-weight:700;letter-spacing:0.850px;-webkit-text-stroke:0.35px #fff;">(9,831)</div>
<div class="t" style="left:1337.15px;top:1630.72px;font-size:18.0px;line-height:22px;color:#fff;font-family:'Liberation Serif';font-weight:700;letter-spacing:0.850px;-webkit-text-stroke:0.35px #fff;">(9,926)</div>
<div class="t" style="left:1456.16px;top:1630.72px;font-size:18.0px;line-height:22px;color:#fff;font-family:'Liberation Serif';font-weight:700;letter-spacing:0.850px;-webkit-text-stroke:0.35px #fff;">(9,809)</div>
<div class="t" style="left:1575.17px;top:1630.72px;font-size:18.0px;line-height:22px;color:#fff;font-family:'Liberation Serif';font-weight:700;letter-spacing:0.850px;-webkit-text-stroke:0.35px #fff;">(9,904)</div>
<div class="t" style="left:1694.18px;top:1630.72px;font-size:18.0px;line-height:22px;color:#fff;font-family:'Liberation Serif';font-weight:700;letter-spacing:0.850px;-webkit-text-stroke:0.35px #fff;">(9,840)</div>
<div class="t" style="left:1813.19px;top:1630.72px;font-size:18.0px;line-height:22px;color:#fff;font-family:'Liberation Serif';font-weight:700;letter-spacing:0.850px;-webkit-text-stroke:0.35px #fff;">(9,775)</div>
<div class="t" style="left:1932.20px;top:1630.72px;font-size:18.0px;line-height:22px;color:#fff;font-family:'Liberation Serif';font-weight:700;letter-spacing:0.850px;-webkit-text-stroke:0.35px #fff;">(9,871)</div>
<div class="t" style="left:2051.21px;top:1630.72px;font-size:18.0px;line-height:22px;color:#fff;font-family:'Liberation Serif';font-weight:700;letter-spacing:0.850px;-webkit-text-stroke:0.35px #fff;">(9,753)</div>
<div class="t" style="left:2170.22px;top:1630.72px;font-size:18.0px;line-height:22px;color:#fff;font-family:'Liberation Serif';font-weight:700;letter-spacing:0.850px;-webkit-text-stroke:0.35px #fff;">(9,848)</div>
<div class="t" style="left:2289.23px;top:1630.72px;font-size:18.0px;line-height:22px;color:#fff;font-family:'Liberation Serif';font-weight:700;letter-spacing:0.850px;-webkit-text-stroke:0.35px #fff;">(8,032)</div>
<div class="t" style="left:2408.24px;top:1630.72px;font-size:18.0px;line-height:22px;color:#fff;font-family:'Liberation Serif';font-weight:700;letter-spacing:0.850px;-webkit-text-stroke:0.35px #fff;">(2,232)</div>
<div class="t" style="left:2527.25px;top:1630.72px;font-size:18.0px;line-height:22px;color:#fff;font-family:'Liberation Serif';font-weight:700;letter-spacing:0.850px;-webkit-text-stroke:0.35px #fff;">(1,219)</div>
<div class="t" style="left:2646.26px;top:1630.72px;font-size:18.0px;line-height:22px;color:#fff;font-family:'Liberation Serif';font-weight:700;letter-spacing:0.850px;-webkit-text-stroke:0.35px #fff;">(1,874)</div>
<div class="t" style="left:2765.27px;top:1630.72px;font-size:18.0px;line-height:22px;color:#fff;font-family:'Liberation Serif';font-weight:700;letter-spacing:0.850px;-webkit-text-stroke:0.35px #fff;">(1,554)</div>
<div class="t" style="left:786.60px;top:1393.92px;font-size:18px;line-height:22px;color:#fff;font-family:'Liberation Serif';font-weight:700;">-</div>
<div style="left:1205.00px;top:1668.00px;width:70.00px;height:46.00px;background:#fff;"></div>
<div style="left:11.00px;top:1669.90px;width:1204.70px;height:48.00px;background:#0a0a0a;border-radius:0 5px 0 0;"></div>
<div style="left:1264.00px;top:1669.90px;width:1626.50px;height:48.00px;background:#0a0a0a;border-radius:5px 0 0 0;"></div>
<div style="left:1205.00px;top:1704.00px;width:70.00px;height:14.00px;background:#0a0a0a;"></div>
<div style="left:11.00px;top:1717.60px;width:2879.50px;height:33.40px;background:#141414;border-top:1px solid #2b2b2b;box-sizing:border-box;"></div>
<div style="left:2863.40px;top:1648.40px;width:24.60px;height:20.40px;background:#0c0c0c;border-radius:5px 5px 11px 11px;"></div>
<div class="t" style="left:190.30px;top:1682.55px;font-size:21.2px;line-height:26px;color:#fff;transform:scaleX(0.9692);transform-origin:0 50%;">Contents</div>
<div style="left:298.90px;top:1676.20px;width:128.10px;height:35.50px;background:#fbe96b;border-radius:7px;"></div>
<div style="left:439.40px;top:1676.20px;width:106.70px;height:35.50px;background:#fbe96b;border-radius:7px;"></div>
<div style="left:558.90px;top:1676.20px;width:158.10px;height:35.50px;background:#fbe96b;border-radius:7px;"></div>
<div style="left:729.80px;top:1676.20px;width:89.10px;height:35.50px;background:#fbe96b;border-radius:7px;"></div>
<div style="left:831.70px;top:1676.20px;width:87.30px;height:35.50px;background:#fbe96b;border-radius:7px;"></div>
<div style="left:931.80px;top:1676.20px;width:113.20px;height:35.50px;background:#fbe96b;border-radius:7px;"></div>
<div style="left:1057.80px;top:1676.20px;width:90.30px;height:35.50px;background:#fbe96b;border-radius:7px;"></div>
<div style="left:1160.90px;top:1676.20px;width:42.10px;height:35.50px;background:#4ab0e7;border-radius:7px;"></div>
<div style="left:1277.20px;top:1676.20px;width:47.90px;height:35.50px;background:#4ab0e7;border-radius:7px;"></div>
<div style="left:1337.70px;top:1676.20px;width:115.20px;height:35.50px;background:#4ab0e7;border-radius:7px;"></div>
<div style="left:1465.90px;top:1676.20px;width:115.30px;height:35.50px;background:#4ab0e7;border-radius:7px;"></div>
<div style="left:1593.80px;top:1676.20px;width:114.40px;height:35.50px;background:#4ab0e7;border-radius:7px;"></div>
<div style="left:1721.20px;top:1676.20px;width:47.90px;height:35.50px;background:#4ab0e7;border-radius:7px;"></div>
<div style="left:1782.10px;top:1676.20px;width:72.20px;height:35.50px;background:#4ab0e7;border-radius:7px;"></div>
<div style="left:1866.90px;top:1676.20px;width:85.00px;height:35.50px;background:#4ab0e7;border-radius:7px;"></div>
<div style="left:1965.10px;top:1676.20px;width:63.80px;height:35.50px;background:#4ab0e7;border-radius:7px;"></div>
<div class="t" style="left:313.30px;top:1682.55px;font-size:21.2px;line-height:26px;color:#15171c;transform:scaleX(0.9580);transform-origin:0 50%;">Dashboard</div>
<div class="t" style="left:454.00px;top:1682.55px;font-size:21.2px;line-height:26px;color:#15171c;transform:scaleX(0.9138);transform-origin:0 50%;">Revenue</div>
<div class="t" style="left:571.50px;top:1682.55px;font-size:21.2px;line-height:26px;color:#15171c;transform:scaleX(0.9029);transform-origin:0 50%;">COGS &amp; OPEX</div>
<div class="t" style="left:743.40px;top:1682.55px;font-size:21.2px;line-height:26px;color:#15171c;transform:scaleX(0.9558);transform-origin:0 50%;">Payroll</div>
<div class="t" style="left:844.10px;top:1682.55px;font-size:21.2px;line-height:26px;color:#15171c;transform:scaleX(0.8699);transform-origin:0 50%;">CAPEX</div>
<div class="t" style="left:945.20px;top:1682.55px;font-size:21.2px;line-height:26px;color:#15171c;transform:scaleX(0.9650);transform-origin:0 50%;">CapTable</div>
<div class="t" style="left:1071.40px;top:1682.55px;font-size:21.2px;line-height:26px;color:#15171c;transform:scaleX(0.9567);transform-origin:0 50%;">Capital</div>
<div class="t" style="left:1173.30px;top:1682.55px;font-size:21.2px;line-height:26px;color:#15171c;transform:scaleX(0.8637);transform-origin:0 50%;">IS</div>
<div class="t" style="left:1289.80px;top:1682.55px;font-size:21.2px;line-height:26px;color:#15171c;transform:scaleX(0.8031);transform-origin:0 50%;">BS</div>
<div class="t" style="left:1351.10px;top:1682.55px;font-size:21.2px;line-height:26px;color:#15171c;transform:scaleX(0.9382);transform-origin:0 50%;">Scenarios</div>
<div class="t" style="left:1479.10px;top:1682.55px;font-size:21.2px;line-height:26px;color:#15171c;transform:scaleX(1.0244);transform-origin:0 50%;">Valuation</div>
<div class="t" style="left:1607.80px;top:1682.55px;font-size:21.2px;line-height:26px;color:#15171c;transform:scaleX(0.9531);transform-origin:0 50%;">Summary</div>
<div class="t" style="left:1734.00px;top:1682.55px;font-size:21.2px;line-height:26px;color:#15171c;transform:scaleX(0.7889);transform-origin:0 50%;">BE</div>
<div class="t" style="left:1795.50px;top:1682.55px;font-size:21.2px;line-height:26px;color:#15171c;transform:scaleX(0.8571);transform-origin:0 50%;">ROIC</div>
<div class="t" style="left:1880.10px;top:1682.55px;font-size:21.2px;line-height:26px;color:#15171c;transform:scaleX(0.9390);transform-origin:0 50%;">Charts</div>
<div class="t" style="left:1978.50px;top:1682.55px;font-size:21.2px;line-height:26px;color:#15171c;transform:scaleX(0.8268);transform-origin:0 50%;">KPIs</div>
<div style="left:2041.9px;top:1676.2px;width:30.2px;height:35.5px;overflow:hidden"><div style="left:0;top:0;width:80px;height:35.5px;background:#4ab0e7;border-radius:7px"></div></div>
<div class="t" style="left:2054.60px;top:1682.55px;font-size:21.2px;line-height:26px;color:#15171c;transform:scaleX(0.7035);transform-origin:0 50%;">Sc</div>
<div style="left:1215.7px;top:1669px;width:48.3px;height:43.1px;border-radius:0 0 6.5px 6.5px;background:linear-gradient(#ffffff 25%,#c6dff6)"></div>
<div class="t" style="left:1228.90px;top:1677.86px;font-size:20.6px;line-height:26px;color:#15171c;transform:scaleX(0.8123);transform-origin:0 50%;">CF</div>
<div style="left:1228.00px;top:1705.20px;width:23.90px;height:2.60px;background:#1f9a58;"></div>
<div style="left:291.80px;top:1680.60px;width:1.20px;height:27.20px;background:#4a4a4a;"></div>
<div style="left:432.30px;top:1680.60px;width:1.20px;height:27.20px;background:#4a4a4a;"></div>
<div style="left:551.70px;top:1680.60px;width:1.20px;height:27.20px;background:#4a4a4a;"></div>
<div style="left:722.60px;top:1680.60px;width:1.20px;height:27.20px;background:#4a4a4a;"></div>
<div style="left:824.80px;top:1680.60px;width:1.20px;height:27.20px;background:#4a4a4a;"></div>
<div style="left:924.70px;top:1680.60px;width:1.20px;height:27.20px;background:#4a4a4a;"></div>
<div style="left:1050.70px;top:1680.60px;width:1.20px;height:27.20px;background:#4a4a4a;"></div>
<div style="left:1153.70px;top:1680.60px;width:1.20px;height:27.20px;background:#4a4a4a;"></div>
<div style="left:1209.00px;top:1680.60px;width:1.20px;height:27.20px;background:#4a4a4a;"></div>
<div style="left:1270.20px;top:1680.60px;width:1.20px;height:27.20px;background:#4a4a4a;"></div>
<div style="left:1330.70px;top:1680.60px;width:1.20px;height:27.20px;background:#4a4a4a;"></div>
<div style="left:1458.70px;top:1680.60px;width:1.20px;height:27.20px;background:#4a4a4a;"></div>
<div style="left:1586.80px;top:1680.60px;width:1.20px;height:27.20px;background:#4a4a4a;"></div>
<div style="left:1714.00px;top:1680.60px;width:1.20px;height:27.20px;background:#4a4a4a;"></div>
<div style="left:1774.90px;top:1680.60px;width:1.20px;height:27.20px;background:#4a4a4a;"></div>
<div style="left:1859.90px;top:1680.60px;width:1.20px;height:27.20px;background:#4a4a4a;"></div>
<div style="left:1957.80px;top:1680.60px;width:1.20px;height:27.20px;background:#4a4a4a;"></div>
<div style="left:2034.70px;top:1680.60px;width:1.20px;height:27.20px;background:#4a4a4a;"></div>
<div style="left:2216.40px;top:1680.00px;width:644.20px;height:26.40px;background:#171717;border-radius:13px;"></div>
<div style="left:2241.60px;top:1686.80px;width:159.40px;height:12.60px;background:#9b9b9b;border-radius:6.3px;"></div>
<div class="t" style="left:27.40px;top:1726.30px;font-size:15.0px;line-height:19px;color:#e8e8e8;transform:scaleX(0.9733);transform-origin:0 50%;">Ready</div>
<div class="t" style="left:173.50px;top:1726.30px;font-size:15.0px;line-height:19px;color:#fff;font-weight:700;transform:scaleX(1.0449);transform-origin:0 50%;">Accessibility: Investigate</div>
<div style="left:2444.90px;top:1718.40px;width:59.80px;height:32.40px;background:#262626;"></div>
<div class="t" style="left:2840.20px;top:1726.16px;font-size:15.4px;line-height:19px;color:#e8e8e8;transform:scaleX(0.9829);transform-origin:0 50%;">100%</div>
<svg style="left:0;top:1600px" width="2902" height="162" viewBox="0 0 2902 162"><path d="M2869.6 54.40000000000009 L2876 62.59999999999991 L2882.4 54.40000000000009Z" fill="#9b9b9b" stroke="#9b9b9b" stroke-width="1.5" stroke-linejoin="round"/><path d="M54.6 84.59999999999991 L46.6 93 L54.6 101.40000000000009" fill="none" stroke="#8a8a8a" stroke-width="1.8" stroke-linecap="round" stroke-linejoin="round"/><path d="M95.6 84.59999999999991 L103.6 93 L95.6 101.40000000000009" fill="none" stroke="#c8c8c8" stroke-width="1.8" stroke-linecap="round" stroke-linejoin="round"/><circle cx="2089.7" cy="92.59999999999991" r="1.8" fill="#e0e0e0"/><circle cx="2095" cy="92.59999999999991" r="1.8" fill="#e0e0e0"/><circle cx="2100.3" cy="92.59999999999991" r="1.8" fill="#e0e0e0"/><path d="M2135 93 H2151.4 M2143.2 84.79999999999995 V101.20000000000005" stroke="#e0e0e0" stroke-width="1.7"/><rect x="2190.4" y="85.69999999999982" width="3" height="3" fill="#e0e0e0"/><rect x="2190.4" y="92.09999999999991" width="3" height="3" fill="#e0e0e0"/><rect x="2190.4" y="98.5" width="3" height="3" fill="#e0e0e0"/><path d="M2234 86.59999999999991 L2225.4 93.09999999999991 L2234 99.59999999999991Z" fill="#a8a8a8" stroke="#a8a8a8" stroke-width="1.4" stroke-linejoin="round"/><path d="M2843.4 86.59999999999991 L2852 93.09999999999991 L2843.4 99.59999999999991Z" fill="#a8a8a8" stroke="#a8a8a8" stroke-width="1.4" stroke-linejoin="round"/><rect x="100" y="126.40000000000009" width="20.4" height="17" fill="none" stroke="#ececec" stroke-width="1.7"/><path d="M100 130.5999999999999 H120.4" stroke="#ececec" stroke-width="1.5"/><path d="M103 134.5999999999999 H108.4 M103 138.4000000000001 H107.4" stroke="#ececec" stroke-width="1.4"/><circle cx="114.6" cy="138.5999999999999" r="5.8" fill="#141414" stroke="#ececec" stroke-width="1.7"/><circle cx="114.6" cy="138.5999999999999" r="2.6" fill="#ececec"/><circle cx="155.6" cy="127.40000000000009" r="2.6" fill="none" stroke="#f0f0f0" stroke-width="1.6"/><path d="M147.4 129.5999999999999 C150 132.5999999999999 152 132.4000000000001 153 132.5999999999999 V137 C152.6 140 151 143 149.6 145 M163.8 129.5999999999999 C161.2 132.5999999999999 159.2 132.4000000000001 158.2 132.5999999999999 V135.5999999999999 M155.8 138.4000000000001 L154.2 143.5999999999999" fill="none" stroke="#f0f0f0" stroke-width="1.7" stroke-linecap="round" stroke-linejoin="round"/><path d="M157.8 137.4000000000001 L166.4 145.5999999999999 M166.4 137.4000000000001 L157.8 145.5999999999999" stroke="#f0f0f0" stroke-width="1.6"/><rect x="2465" y="125.20000000000005" width="18.6" height="18" fill="none" stroke="#f4f4f4" stroke-width="2"/><path d="M2471.2 125.20000000000005 V143.20000000000005 M2477.4 125.20000000000005 V143.20000000000005 M2465 131.20000000000005 H2483.6 M2465 137.20000000000005 H2483.6" stroke="#f4f4f4" stroke-width="1.7"/><rect x="2525.2" y="125.20000000000005" width="19.6" height="18" fill="none" stroke="#f4f4f4" stroke-width="2"/><rect x="2530.2" y="129.60000000000005" width="9.6" height="9.4" fill="none" stroke="#f4f4f4" stroke-width="1.6"/><path d="M2532.6 133.00000000000006 H2537.3999999999996 M2532.6 135.80000000000004 H2537.3999999999996" stroke="#f4f4f4" stroke-width="1.2"/><rect x="2585" y="125.20000000000005" width="19.8" height="18" fill="none" stroke="#f4f4f4" stroke-width="2"/><path d="M2591.6 125.20000000000005 V134.80000000000004 M2598.2 125.20000000000005 V138.20000000000005 H2585" fill="none" stroke="#f4f4f4" stroke-width="1.7"/><path d="M2633 134.79999999999995 H2644.6" stroke="#e0e0e0" stroke-width="1.6"/><path d="M2653.2 134.9000000000001 H2801" stroke="#b4b4b4" stroke-width="2.2"/><rect x="2723" y="126.20000000000005" width="7.8" height="16.8" rx="1" fill="#bdbdbd"/><path d="M2809 134.79999999999995 H2820.8 M2814.9 128.9000000000001 V140.70000000000005" stroke="#e0e0e0" stroke-width="1.6"/></svg>
</body></html>
